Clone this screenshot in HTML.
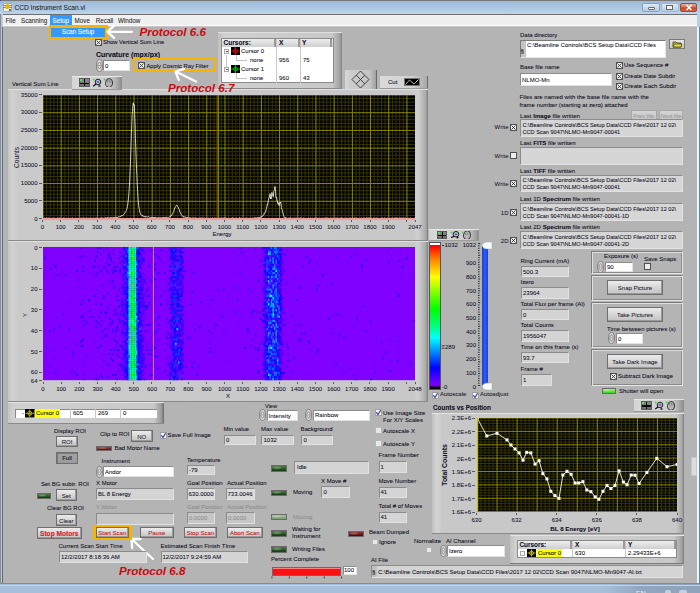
<!DOCTYPE html><html><head><meta charset="utf-8"><style>
html,body{margin:0;padding:0;width:700px;height:593px;overflow:hidden;background:#b4b4b4;}
body{position:relative;font-family:'Liberation Sans',sans-serif;}
body div, body svg{position:absolute;}
</style></head><body>
<div style="left:0px;top:0px;width:700px;height:593px;background:#b4b4b4;"></div><div style="left:0px;top:0px;width:700px;height:1px;background:#777;"></div><div style="left:0px;top:1px;width:700px;height:13px;background:linear-gradient(#9db8d8,#bcd4ec);"></div><div style="left:0px;top:14px;width:700px;height:1px;background:#6e6e6e;"></div><div style="left:3px;top:15px;width:694px;height:10px;background:#f0f0f0;"></div><div style="left:3px;top:25px;width:694px;height:1px;background:#ffffff;"></div><div style="left:3px;top:26px;width:694px;height:1px;background:#c6c6c6;"></div><div style="left:0px;top:14px;width:3px;height:579px;background:#b9cde2;"></div><div style="left:0px;top:14px;width:1px;height:579px;background:#8a8a8a;"></div><div style="left:2px;top:27px;width:1px;height:557px;background:#5f6a76;"></div><div style="left:697px;top:14px;width:3px;height:579px;background:#b9cde2;"></div><div style="left:697px;top:27px;width:1.6000000000000227px;height:557px;background:#f4f4f4;"></div><div style="left:698.6px;top:27px;width:1.3999999999999773px;height:557px;background:#3d8fd0;"></div><div style="left:0px;top:583px;width:700px;height:1px;background:#8a8a8a;"></div><div style="left:0px;top:584px;width:700px;height:9px;background:linear-gradient(90deg,#a7bfda 0px,#a7bfda 605px,#90a6c0 640px,#8ea3bc 700px);"></div><div style="left:0px;top:584.5px;width:700px;height:1.0px;background:#bed2ea;"></div><div style="left:3px;top:3px;width:8.5px;height:8.5px;background:#f4f4f0;border:0.5px solid #b0b0b0;box-sizing:border-box;"></div><div style="left:3px;top:5px;width:8.5px;height:1.2999999999999998px;background:#5a90c8;"></div><div style="left:3px;top:7px;width:8.5px;height:1.3000000000000007px;background:#5a90c8;"></div><div style="left:5px;top:4px;width:4.5px;height:5px;background:radial-gradient(#f0b800,#e0b020 60%,rgba(230,190,40,0.3));border-radius:40%;"></div><div style="left:8.5px;top:8.5px;width:2.0px;height:2.0px;background:#707070;"></div><div style="left:0px;top:0px;width:1.3px;height:1.3px;background:#1a4a9a;"></div><div style="left:14.5px;top:4.31px;font-size:6.6px;line-height:8.58px;color:#202020;white-space:nowrap;-webkit-text-stroke:0.06px #202020;">CCD Instrument Scan.vi</div><div style="left:642px;top:3px;width:18px;height:9px;background:linear-gradient(#dfe9f5,#b7cbe3);border:1px solid #8ba0ba;border-radius:2px;box-sizing:border-box;"></div><div style="left:647.5px;top:6.8px;width:7.5px;height:2.8px;background:#f4f4f4;border:1px solid #6a6a6a;border-radius:1px;box-sizing:border-box;"></div><div style="left:661px;top:3px;width:18px;height:9px;background:linear-gradient(#dfe9f5,#b7cbe3);border:1px solid #a8b8cc;border-radius:2px;box-sizing:border-box;"></div><div style="left:666px;top:5px;width:7px;height:5px;background:#f4f4f4;border:1px solid #666;box-sizing:border-box;"></div><div style="left:680px;top:3px;width:17px;height:9px;background:linear-gradient(#eab0a0,#d86a50 45%,#c84428 55%,#d8603c);border:1px solid #9a4a3a;border-radius:2px;box-sizing:border-box;"></div><svg style="left:685px;top:4px" width="8" height="7"><path d="M1.5 1L6.5 6M6.5 1L1.5 6" stroke="#fff" stroke-width="1.6"/></svg><div style="left:5.5px;top:17.21px;font-size:6.3px;line-height:8.19px;color:#1e1e1e;white-space:nowrap;-webkit-text-stroke:0.06px #1e1e1e;">File</div><div style="left:21px;top:17.21px;font-size:6.3px;line-height:8.19px;color:#1e1e1e;white-space:nowrap;-webkit-text-stroke:0.06px #1e1e1e;">Scanning</div><div style="left:74.5px;top:17.21px;font-size:6.3px;line-height:8.19px;color:#1e1e1e;white-space:nowrap;-webkit-text-stroke:0.06px #1e1e1e;">Move</div><div style="left:95.7px;top:17.21px;font-size:6.3px;line-height:8.19px;color:#1e1e1e;white-space:nowrap;-webkit-text-stroke:0.06px #1e1e1e;">Recall</div><div style="left:118px;top:17.21px;font-size:6.3px;line-height:8.19px;color:#1e1e1e;white-space:nowrap;-webkit-text-stroke:0.06px #1e1e1e;">Window</div><div style="left:49.5px;top:15px;width:22.5px;height:10px;background:#3399ff;"></div><div style="left:52.5px;top:17.21px;font-size:6.3px;line-height:8.19px;color:#ffffff;white-space:nowrap;-webkit-text-stroke:0.06px #ffffff;">Setup</div><div style="left:8px;top:89px;width:420px;height:152px;background:linear-gradient(90deg,#c4c4c4 0px,#d2d2d2 4px,#cacaca 10px,#c8c8c8 calc(100% - 14px),#d0d0d0 calc(100% - 10px),#a8a8a8 calc(100% - 2px),#7a7a7a);border-top:1px solid #e0e0e0;border-bottom:1px solid #8a8a8a;box-sizing:border-box;"></div><div style="left:8px;top:241px;width:420px;height:161px;background:linear-gradient(90deg,#c4c4c4 0px,#d2d2d2 4px,#cacaca 10px,#c8c8c8 calc(100% - 14px),#d0d0d0 calc(100% - 10px),#a8a8a8 calc(100% - 2px),#7a7a7a);border-top:1px solid #e0e0e0;border-bottom:1px solid #8a8a8a;box-sizing:border-box;"></div><svg style="left:42.5px;top:94.5px" width="372.50" height="124.00" viewBox="0 0 372.50 124.00"><rect width="372.50" height="124.00" fill="#000"/><path d="M3.64 0V124.00 M7.28 0V124.00 M10.92 0V124.00 M14.56 0V124.00 M21.84 0V124.00 M25.48 0V124.00 M29.12 0V124.00 M32.76 0V124.00 M40.03 0V124.00 M43.67 0V124.00 M47.31 0V124.00 M50.95 0V124.00 M58.23 0V124.00 M61.87 0V124.00 M65.51 0V124.00 M69.15 0V124.00 M76.43 0V124.00 M80.07 0V124.00 M83.71 0V124.00 M87.35 0V124.00 M94.63 0V124.00 M98.27 0V124.00 M101.91 0V124.00 M105.54 0V124.00 M112.82 0V124.00 M116.46 0V124.00 M120.10 0V124.00 M123.74 0V124.00 M131.02 0V124.00 M134.66 0V124.00 M138.30 0V124.00 M141.94 0V124.00 M149.22 0V124.00 M152.86 0V124.00 M156.50 0V124.00 M160.14 0V124.00 M167.42 0V124.00 M171.06 0V124.00 M174.69 0V124.00 M178.33 0V124.00 M185.61 0V124.00 M189.25 0V124.00 M192.89 0V124.00 M196.53 0V124.00 M203.81 0V124.00 M207.45 0V124.00 M211.09 0V124.00 M214.73 0V124.00 M222.01 0V124.00 M225.65 0V124.00 M229.29 0V124.00 M232.93 0V124.00 M240.21 0V124.00 M243.84 0V124.00 M247.48 0V124.00 M251.12 0V124.00 M258.40 0V124.00 M262.04 0V124.00 M265.68 0V124.00 M269.32 0V124.00 M276.60 0V124.00 M280.24 0V124.00 M283.88 0V124.00 M287.52 0V124.00 M294.80 0V124.00 M298.44 0V124.00 M302.08 0V124.00 M305.72 0V124.00 M312.99 0V124.00 M316.63 0V124.00 M320.27 0V124.00 M323.91 0V124.00 M331.19 0V124.00 M334.83 0V124.00 M338.47 0V124.00 M342.11 0V124.00 M349.39 0V124.00 M353.03 0V124.00 M356.67 0V124.00 M360.31 0V124.00 M0 3.54H372.50 M0 7.09H372.50 M0 10.63H372.50 M0 14.17H372.50 M0 21.26H372.50 M0 24.80H372.50 M0 28.34H372.50 M0 31.89H372.50 M0 38.97H372.50 M0 42.51H372.50 M0 46.06H372.50 M0 49.60H372.50 M0 56.69H372.50 M0 60.23H372.50 M0 63.77H372.50 M0 67.31H372.50 M0 74.40H372.50 M0 77.94H372.50 M0 81.49H372.50 M0 85.03H372.50 M0 92.11H372.50 M0 95.66H372.50 M0 99.20H372.50 M0 102.74H372.50 M0 109.83H372.50 M0 113.37H372.50 M0 116.91H372.50 M0 120.46H372.50" stroke="#363400" stroke-width="1" fill="none"/><path d="M0.00 0V124.00 M18.20 0V124.00 M36.39 0V124.00 M54.59 0V124.00 M72.79 0V124.00 M90.99 0V124.00 M109.18 0V124.00 M127.38 0V124.00 M145.58 0V124.00 M163.78 0V124.00 M181.97 0V124.00 M200.17 0V124.00 M218.37 0V124.00 M236.57 0V124.00 M254.76 0V124.00 M272.96 0V124.00 M291.16 0V124.00 M309.36 0V124.00 M327.55 0V124.00 M345.75 0V124.00 M363.95 0V124.00 M0 0.00H372.50 M0 17.71H372.50 M0 35.43H372.50 M0 53.14H372.50 M0 70.86H372.50 M0 88.57H372.50 M0 106.29H372.50 M0 124.00H372.50" stroke="#8c8a00" stroke-width="1" fill="none"/><polyline points="0.00,123.42 0.36,123.21 0.73,123.68 1.09,123.32 1.46,123.13 1.82,122.81 2.18,123.57 2.55,123.54 2.91,123.21 3.28,123.07 3.64,123.28 4.00,123.48 4.37,123.04 4.73,123.32 5.10,123.67 5.46,122.89 5.82,123.16 6.19,123.26 6.55,123.11 6.91,123.35 7.28,123.55 7.64,123.59 8.01,123.63 8.37,122.95 8.73,123.38 9.10,123.55 9.46,123.16 9.83,123.36 10.19,123.24 10.55,122.86 10.92,123.34 11.28,123.66 11.65,123.40 12.01,123.61 12.37,123.14 12.74,123.36 13.10,123.28 13.47,123.40 13.83,123.69 14.19,123.19 14.56,122.91 14.92,123.55 15.29,123.39 15.65,122.90 16.01,123.51 16.38,123.68 16.74,122.80 17.11,122.83 17.47,123.52 17.83,122.91 18.20,123.63 18.56,123.00 18.93,123.40 19.29,123.34 19.65,123.59 20.02,123.57 20.38,123.39 20.74,122.79 21.11,123.31 21.47,123.47 21.84,123.46 22.20,123.37 22.56,123.32 22.93,123.23 23.29,123.71 23.66,123.03 24.02,123.19 24.38,123.48 24.75,123.19 25.11,123.13 25.48,123.28 25.84,123.06 26.20,123.20 26.57,123.60 26.93,123.64 27.30,123.57 27.66,122.87 28.02,123.33 28.39,123.56 28.75,123.54 29.12,123.20 29.48,123.11 29.84,122.98 30.21,123.68 30.57,123.32 30.94,123.57 31.30,123.63 31.66,123.64 32.03,123.63 32.39,123.28 32.76,123.47 33.12,123.61 33.48,123.42 33.85,123.26 34.21,123.48 34.57,123.54 34.94,122.93 35.30,123.33 35.67,123.39 36.03,123.34 36.39,123.65 36.76,123.63 37.12,123.45 37.49,123.56 37.85,122.78 38.21,123.42 38.58,123.27 38.94,123.71 39.31,123.68 39.67,123.16 40.03,123.05 40.40,122.78 40.76,123.67 41.13,123.02 41.49,123.23 41.85,123.16 42.22,123.50 42.58,123.61 42.95,123.14 43.31,122.96 43.67,123.10 44.04,123.64 44.40,123.02 44.77,123.26 45.13,123.11 45.49,123.03 45.86,123.65 46.22,123.08 46.59,123.28 46.95,122.79 47.31,122.95 47.68,123.51 48.04,123.58 48.40,122.93 48.77,123.49 49.13,123.70 49.50,123.56 49.86,123.70 50.22,122.84 50.59,123.35 50.95,123.37 51.32,123.59 51.68,123.47 52.04,123.34 52.41,123.10 52.77,123.02 53.14,123.00 53.50,122.82 53.86,123.41 54.23,123.07 54.59,123.51 54.96,123.19 55.32,123.26 55.68,123.35 56.05,123.13 56.41,123.27 56.78,123.60 57.14,123.18 57.50,123.39 57.87,122.76 58.23,123.60 58.60,123.06 58.96,122.86 59.32,123.51 59.69,122.71 60.05,123.16 60.42,123.38 60.78,123.46 61.14,123.47 61.51,123.21 61.87,123.27 62.23,122.73 62.60,122.65 62.96,123.06 63.33,122.90 63.69,123.19 64.05,122.75 64.42,122.57 64.78,123.23 65.15,122.97 65.51,122.80 65.87,123.21 66.24,123.32 66.60,122.69 66.97,123.19 67.33,122.71 67.69,123.15 68.06,122.40 68.42,122.93 68.79,123.18 69.15,123.05 69.51,122.82 69.88,123.14 70.24,122.45 70.61,122.20 70.97,122.77 71.33,122.21 71.70,122.77 72.06,122.61 72.43,122.05 72.79,122.14 73.15,122.58 73.52,122.65 73.88,122.71 74.25,121.91 74.61,122.57 74.97,122.36 75.34,121.85 75.70,121.66 76.06,121.68 76.43,122.12 76.79,121.80 77.16,121.30 77.52,121.41 77.88,121.72 78.25,120.67 78.61,120.53 78.98,120.26 79.34,120.75 79.70,120.46 80.07,120.40 80.43,119.76 80.80,119.65 81.16,118.71 81.52,118.47 81.89,118.20 82.25,117.23 82.62,116.62 82.98,116.21 83.34,115.48 83.71,114.22 84.07,113.35 84.44,111.38 84.80,109.08 85.16,106.17 85.53,102.64 85.89,98.84 86.26,92.83 86.62,86.84 86.98,78.80 87.35,70.45 87.71,60.77 88.08,49.94 88.44,38.25 88.80,29.53 89.17,19.05 89.53,16.40 89.89,10.63 90.26,7.92 90.62,10.02 90.99,9.53 91.35,9.81 91.71,19.75 92.08,28.53 92.44,43.78 92.81,52.68 93.17,64.42 93.53,73.66 93.90,80.39 94.26,90.51 94.63,96.11 94.99,102.40 95.35,106.90 95.72,110.68 96.08,113.29 96.45,114.97 96.81,117.12 97.17,117.70 97.54,119.14 97.90,119.79 98.27,120.05 98.63,119.94 98.99,120.62 99.36,120.30 99.72,121.28 100.09,120.81 100.45,121.34 100.81,121.30 101.18,121.83 101.54,121.71 101.91,121.25 102.27,122.02 102.63,122.14 103.00,121.55 103.36,122.04 103.72,121.70 104.09,121.86 104.45,122.20 104.82,121.68 105.18,121.84 105.54,121.71 105.91,121.99 106.27,122.19 106.64,122.29 107.00,122.50 107.36,122.60 107.73,122.49 108.09,122.17 108.46,122.79 108.82,122.10 109.18,122.09 109.55,122.84 109.91,122.40 110.28,122.93 110.64,122.75 111.00,122.81 111.37,122.19 111.73,123.08 112.10,122.83 112.46,122.38 112.82,123.17 113.19,123.19 113.55,123.04 113.92,123.01 114.28,122.59 114.64,123.19 115.01,122.70 115.37,122.48 115.74,123.11 116.10,122.95 116.46,122.81 116.83,122.98 117.19,122.70 117.55,122.59 117.92,122.49 118.28,122.66 118.65,123.08 119.01,122.97 119.37,123.18 119.74,122.34 120.10,123.07 120.47,122.85 120.83,122.55 121.19,123.03 121.56,122.28 121.92,122.71 122.29,122.35 122.65,122.44 123.01,122.91 123.38,122.38 123.74,122.32 124.11,122.71 124.47,122.37 124.83,122.62 125.20,122.61 125.56,122.16 125.93,122.16 126.29,122.05 126.65,122.00 127.02,122.14 127.38,121.62 127.75,120.81 128.11,121.02 128.47,120.27 128.84,120.34 129.20,119.28 129.57,118.87 129.93,117.87 130.29,117.34 130.66,116.62 131.02,115.57 131.38,113.99 131.75,113.06 132.11,112.39 132.48,111.92 132.84,111.70 133.20,110.33 133.57,110.38 133.93,110.30 134.30,110.69 134.66,111.41 135.02,112.08 135.39,112.57 135.75,114.01 136.12,114.38 136.48,115.00 136.84,116.77 137.21,117.49 137.57,117.77 137.94,119.07 138.30,119.55 138.66,120.22 139.03,120.31 139.39,120.94 139.76,121.44 140.12,121.39 140.48,121.40 140.85,122.36 141.21,121.87 141.58,122.02 141.94,122.06 142.30,122.08 142.67,122.12 143.03,122.14 143.40,122.67 143.76,122.40 144.12,123.02 144.49,122.25 144.85,122.59 145.21,122.82 145.58,123.08 145.94,123.14 146.31,123.19 146.67,122.64 147.03,122.72 147.40,122.80 147.76,123.20 148.13,123.45 148.49,123.18 148.85,123.04 149.22,123.10 149.58,123.20 149.95,123.19 150.31,123.03 150.67,122.93 151.04,122.70 151.40,123.21 151.77,123.07 152.13,123.63 152.49,122.87 152.86,122.90 153.22,122.85 153.59,123.34 153.95,123.49 154.31,123.12 154.68,123.45 155.04,123.61 155.41,123.15 155.77,123.25 156.13,123.53 156.50,123.33 156.86,122.76 157.23,122.97 157.59,123.20 157.95,122.90 158.32,122.97 158.68,122.96 159.04,123.53 159.41,123.17 159.77,122.86 160.14,123.60 160.50,123.11 160.86,123.28 161.23,123.51 161.59,122.88 161.96,122.96 162.32,123.65 162.68,123.07 163.05,123.62 163.41,123.27 163.78,123.09 164.14,123.67 164.50,122.90 164.87,123.62 165.23,123.29 165.60,123.14 165.96,123.03 166.32,123.47 166.69,122.93 167.05,123.40 167.42,123.66 167.78,123.27 168.14,123.36 168.51,123.63 168.87,123.05 169.24,122.97 169.60,122.93 169.96,122.87 170.33,123.55 170.69,123.64 171.06,123.45 171.42,122.97 171.78,123.04 172.15,122.94 172.51,123.25 172.87,122.88 173.24,123.37 173.60,123.71 173.97,123.59 174.33,123.41 174.69,123.65 175.06,123.24 175.42,122.82 175.79,123.48 176.15,123.05 176.51,123.18 176.88,122.91 177.24,123.26 177.61,123.32 177.97,123.58 178.33,122.94 178.70,122.91 179.06,122.99 179.43,123.29 179.79,122.95 180.15,122.82 180.52,123.13 180.88,123.31 181.25,122.80 181.61,122.97 181.97,123.12 182.34,123.21 182.70,123.23 183.07,123.42 183.43,122.82 183.79,123.22 184.16,123.44 184.52,123.63 184.89,123.17 185.25,123.28 185.61,123.42 185.98,123.36 186.34,122.91 186.70,123.44 187.07,123.56 187.43,123.65 187.80,123.61 188.16,123.56 188.52,123.13 188.89,123.02 189.25,122.99 189.62,122.89 189.98,123.25 190.34,122.98 190.71,123.29 191.07,123.35 191.44,122.98 191.80,123.54 192.16,123.17 192.53,122.93 192.89,123.32 193.26,123.18 193.62,123.21 193.98,123.07 194.35,123.38 194.71,123.62 195.08,123.17 195.44,123.30 195.80,123.22 196.17,122.81 196.53,122.86 196.90,122.89 197.26,123.24 197.62,123.11 197.99,123.11 198.35,123.43 198.72,122.93 199.08,123.24 199.44,123.22 199.81,123.60 200.17,123.61 200.53,123.15 200.90,123.00 201.26,123.55 201.63,123.17 201.99,123.66 202.35,123.31 202.72,122.82 203.08,122.93 203.45,123.25 203.81,123.03 204.17,123.27 204.54,123.38 204.90,123.19 205.27,123.33 205.63,123.39 205.99,123.49 206.36,123.57 206.72,122.92 207.09,122.95 207.45,123.35 207.81,123.25 208.18,123.05 208.54,123.37 208.91,122.89 209.27,123.46 209.63,123.17 210.00,123.49 210.36,123.53 210.73,123.34 211.09,123.47 211.45,122.68 211.82,123.42 212.18,122.88 212.55,122.82 212.91,122.87 213.27,122.79 213.64,123.27 214.00,123.34 214.36,122.56 214.73,122.95 215.09,122.56 215.46,122.53 215.82,123.16 216.18,122.51 216.55,122.54 216.91,122.23 217.28,122.20 217.64,122.62 218.00,121.49 218.37,121.54 218.73,120.97 219.10,121.62 219.46,120.95 219.82,120.87 220.19,120.02 220.55,120.13 220.92,119.27 221.28,118.00 221.64,118.34 222.01,117.86 222.37,116.77 222.74,116.71 223.10,114.70 223.46,113.52 223.83,112.01 224.19,109.61 224.56,109.94 224.92,107.39 225.28,105.44 225.65,104.20 226.01,102.56 226.38,102.32 226.74,100.03 227.10,98.70 227.47,103.70 227.83,102.48 228.19,103.88 228.56,99.87 228.92,97.47 229.29,99.91 229.65,99.44 230.01,101.49 230.38,101.73 230.74,96.77 231.11,95.64 231.47,94.82 231.83,91.51 232.20,92.18 232.56,96.22 232.93,102.52 233.29,102.48 233.65,102.34 234.02,106.04 234.38,105.93 234.75,108.87 235.11,108.78 235.47,108.69 235.84,107.69 236.20,110.72 236.57,107.81 236.93,108.38 237.29,108.18 237.66,107.07 238.02,108.66 238.39,112.53 238.75,114.24 239.11,114.88 239.48,116.28 239.84,117.94 240.21,118.90 240.57,120.64 240.93,121.57 241.30,122.39 241.66,122.25 242.02,122.73 242.39,122.46 242.75,122.71 243.12,122.64 243.48,123.51 243.84,123.16 244.21,123.28 244.57,123.71 244.94,123.29 245.30,123.08 245.66,123.46 246.03,122.77 246.39,122.89 246.76,123.36 247.12,122.82 247.48,123.02 247.85,123.20 248.21,123.41 248.58,123.49 248.94,123.71 249.30,123.19 249.67,123.43 250.03,122.83 250.40,123.63 250.76,123.37 251.12,123.65 251.49,123.47 251.85,123.06 252.22,123.16 252.58,123.04 252.94,122.97 253.31,123.53 253.67,122.84 254.04,123.11 254.40,123.66 254.76,123.40 255.13,123.28 255.49,122.78 255.85,123.41 256.22,123.00 256.58,123.20 256.95,123.16 257.31,123.05 257.67,123.00 258.04,123.23 258.40,123.27 258.77,122.80 259.13,123.69 259.49,123.20 259.86,123.57 260.22,123.56 260.59,122.80 260.95,122.95 261.31,123.61 261.68,123.33 262.04,123.33 262.41,123.50 262.77,123.49 263.13,123.43 263.50,123.57 263.86,123.01 264.23,123.25 264.59,123.14 264.95,123.51 265.32,122.89 265.68,123.42 266.05,123.70 266.41,123.63 266.77,123.39 267.14,122.78 267.50,123.07 267.87,123.30 268.23,123.42 268.59,123.58 268.96,123.58 269.32,123.38 269.68,123.51 270.05,123.46 270.41,123.67 270.78,123.37 271.14,123.19 271.50,122.90 271.87,123.32 272.23,123.34 272.60,123.14 272.96,123.37 273.32,122.94 273.69,123.06 274.05,123.41 274.42,122.89 274.78,123.49 275.14,123.04 275.51,123.08 275.87,123.50 276.24,123.27 276.60,123.50 276.96,123.23 277.33,123.55 277.69,122.95 278.06,123.36 278.42,123.57 278.78,122.97 279.15,123.34 279.51,123.27 279.88,123.08 280.24,123.37 280.60,123.53 280.97,123.05 281.33,122.92 281.70,123.52 282.06,123.37 282.42,123.04 282.79,122.95 283.15,122.84 283.51,123.37 283.88,123.00 284.24,122.86 284.61,123.28 284.97,123.27 285.33,123.23 285.70,123.33 286.06,123.00 286.43,123.64 286.79,123.00 287.15,123.04 287.52,123.31 287.88,122.89 288.25,123.71 288.61,123.42 288.97,123.24 289.34,122.91 289.70,123.52 290.07,123.28 290.43,122.96 290.79,123.66 291.16,123.17 291.52,123.44 291.89,123.28 292.25,123.66 292.61,122.92 292.98,122.85 293.34,123.09 293.71,122.94 294.07,123.61 294.43,123.31 294.80,123.06 295.16,123.68 295.53,123.18 295.89,122.87 296.25,122.98 296.62,123.36 296.98,123.63 297.34,123.09 297.71,122.85 298.07,123.44 298.44,122.83 298.80,123.16 299.16,123.46 299.53,122.83 299.89,123.40 300.26,123.40 300.62,123.55 300.98,123.18 301.35,123.15 301.71,123.62 302.08,123.39 302.44,123.55 302.80,122.91 303.17,122.89 303.53,123.60 303.90,123.24 304.26,123.52 304.62,123.23 304.99,123.25 305.35,123.50 305.72,123.69 306.08,122.89 306.44,123.17 306.81,123.49 307.17,123.14 307.54,122.97 307.90,122.85 308.26,123.49 308.63,123.40 308.99,123.40 309.36,123.25 309.72,123.00 310.08,122.91 310.45,123.38 310.81,123.00 311.17,122.85 311.54,123.15 311.90,122.90 312.27,122.81 312.63,123.48 312.99,123.27 313.36,123.06 313.72,122.96 314.09,123.32 314.45,123.39 314.81,123.71 315.18,122.95 315.54,123.39 315.91,123.14 316.27,123.05 316.63,123.59 317.00,123.54 317.36,123.50 317.73,123.34 318.09,122.80 318.45,123.21 318.82,123.29 319.18,123.62 319.55,123.36 319.91,123.64 320.27,123.38 320.64,123.22 321.00,123.36 321.37,123.06 321.73,122.89 322.09,123.40 322.46,123.58 322.82,123.35 323.19,123.00 323.55,122.79 323.91,123.35 324.28,123.45 324.64,122.97 325.00,122.90 325.37,123.42 325.73,122.81 326.10,122.83 326.46,123.61 326.82,122.79 327.19,123.28 327.55,123.42 327.92,123.19 328.28,123.38 328.64,123.13 329.01,122.92 329.37,123.46 329.74,123.00 330.10,123.60 330.46,123.12 330.83,122.84 331.19,122.94 331.56,123.20 331.92,123.59 332.28,123.24 332.65,123.33 333.01,122.97 333.38,122.99 333.74,123.00 334.10,123.59 334.47,123.45 334.83,123.46 335.20,123.08 335.56,123.06 335.92,123.71 336.29,123.65 336.65,123.68 337.02,123.12 337.38,123.50 337.74,122.94 338.11,123.69 338.47,123.12 338.83,123.22 339.20,122.79 339.56,122.80 339.93,123.29 340.29,123.40 340.65,123.53 341.02,123.53 341.38,123.18 341.75,122.82 342.11,123.65 342.47,123.04 342.84,123.56 343.20,123.67 343.57,122.97 343.93,123.56 344.29,122.85 344.66,123.59 345.02,123.51 345.39,123.05 345.75,123.02 346.11,123.59 346.48,123.35 346.84,123.28 347.21,123.64 347.57,123.26 347.93,122.86 348.30,123.59 348.66,123.13 349.03,123.04 349.39,123.08 349.75,123.05 350.12,123.14 350.48,123.49 350.85,123.13 351.21,122.82 351.57,123.48 351.94,122.85 352.30,123.57 352.66,122.79 353.03,123.56 353.39,122.87 353.76,123.19 354.12,123.17 354.48,123.21 354.85,123.00 355.21,123.29 355.58,123.31 355.94,123.37 356.30,122.92 356.67,122.98 357.03,123.00 357.40,123.06 357.76,123.32 358.12,123.01 358.49,123.03 358.85,123.30 359.22,123.30 359.58,123.39 359.94,122.78 360.31,122.94 360.67,123.48 361.04,122.87 361.40,122.99 361.76,123.61 362.13,123.38 362.49,123.20 362.86,123.32 363.22,123.62 363.58,123.69 363.95,123.54 364.31,123.02 364.68,123.69 365.04,122.80 365.40,123.16 365.77,123.65 366.13,123.60 366.49,123.46 366.86,123.43 367.22,123.03 367.59,122.94 367.95,122.92 368.31,123.71 368.68,123.10 369.04,123.58 369.41,123.11 369.77,123.69 370.13,123.37 370.50,123.48 370.86,123.48 371.23,123.00 371.59,123.35 371.95,122.89 372.32,123.50" fill="none" stroke="#f0f0f0" stroke-width="0.85" stroke-linejoin="bevel" shape-rendering="auto"/><line x1="173.97" y1="0" x2="173.97" y2="124.0" stroke="#a83800" stroke-width="0.9"/><line x1="175.29" y1="0" x2="175.29" y2="124.0" stroke="#70b000" stroke-width="1"/></svg><div style="left:42.5px;top:217.9px;width:372.5px;height:1.799999999999983px;background:#f49a9a;"></div><div style="right:662.5px;top:215.60px;font-size:6px;line-height:7.80px;color:#10102a;white-space:nowrap;-webkit-text-stroke:0.06px #10102a;">0</div><div style="left:38.5px;top:218.0px;width:3.0px;height:1.0px;background:#5a5a5a;"></div><div style="right:662.5px;top:197.89px;font-size:6px;line-height:7.80px;color:#10102a;white-space:nowrap;-webkit-text-stroke:0.06px #10102a;">5000</div><div style="left:38.5px;top:200.28571428571428px;width:3.0px;height:1.0px;background:#5a5a5a;"></div><div style="right:662.5px;top:180.17px;font-size:6px;line-height:7.80px;color:#10102a;white-space:nowrap;-webkit-text-stroke:0.06px #10102a;">10000</div><div style="left:38.5px;top:182.57142857142856px;width:3.0px;height:1.0px;background:#5a5a5a;"></div><div style="right:662.5px;top:162.46px;font-size:6px;line-height:7.80px;color:#10102a;white-space:nowrap;-webkit-text-stroke:0.06px #10102a;">15000</div><div style="left:38.5px;top:164.85714285714286px;width:3.0px;height:1.0px;background:#5a5a5a;"></div><div style="right:662.5px;top:144.74px;font-size:6px;line-height:7.80px;color:#10102a;white-space:nowrap;-webkit-text-stroke:0.06px #10102a;">20000</div><div style="left:38.5px;top:147.14285714285714px;width:3.0px;height:1.0px;background:#5a5a5a;"></div><div style="right:662.5px;top:127.03px;font-size:6px;line-height:7.80px;color:#10102a;white-space:nowrap;-webkit-text-stroke:0.06px #10102a;">25000</div><div style="left:38.5px;top:129.42857142857144px;width:3.0px;height:1.0px;background:#5a5a5a;"></div><div style="right:662.5px;top:109.31px;font-size:6px;line-height:7.80px;color:#10102a;white-space:nowrap;-webkit-text-stroke:0.06px #10102a;">30000</div><div style="left:38.5px;top:111.71428571428571px;width:3.0px;height:1.0px;background:#5a5a5a;"></div><div style="right:662.5px;top:91.60px;font-size:6px;line-height:7.80px;color:#10102a;white-space:nowrap;-webkit-text-stroke:0.06px #10102a;">35000</div><div style="left:38.5px;top:94.0px;width:3.0px;height:1.0px;background:#5a5a5a;"></div><div style="left:-157.5px;width:400px;text-align:center;top:223.90px;font-size:6px;line-height:7.80px;color:#10102a;white-space:nowrap;-webkit-text-stroke:0.06px #10102a;">0</div><div style="left:42.0px;top:219.5px;width:1.0px;height:2.0px;background:#5a5a5a;"></div><div style="left:-139.3026380068393px;width:400px;text-align:center;top:223.90px;font-size:6px;line-height:7.80px;color:#10102a;white-space:nowrap;-webkit-text-stroke:0.06px #10102a;">100</div><div style="left:60.197361993160726px;top:219.5px;width:1.0px;height:2.0px;background:#5a5a5a;"></div><div style="left:-121.10527601367855px;width:400px;text-align:center;top:223.90px;font-size:6px;line-height:7.80px;color:#10102a;white-space:nowrap;-webkit-text-stroke:0.06px #10102a;">200</div><div style="left:78.39472398632145px;top:219.5px;width:1.0px;height:2.0px;background:#5a5a5a;"></div><div style="left:-102.90791402051784px;width:400px;text-align:center;top:223.90px;font-size:6px;line-height:7.80px;color:#10102a;white-space:nowrap;-webkit-text-stroke:0.06px #10102a;">300</div><div style="left:96.59208597948216px;top:219.5px;width:1.0px;height:2.0px;background:#5a5a5a;"></div><div style="left:-84.71055202735711px;width:400px;text-align:center;top:223.90px;font-size:6px;line-height:7.80px;color:#10102a;white-space:nowrap;-webkit-text-stroke:0.06px #10102a;">400</div><div style="left:114.78944797264289px;top:219.5px;width:1.0px;height:2.0px;background:#5a5a5a;"></div><div style="left:-66.51319003419638px;width:400px;text-align:center;top:223.90px;font-size:6px;line-height:7.80px;color:#10102a;white-space:nowrap;-webkit-text-stroke:0.06px #10102a;">500</div><div style="left:132.98680996580362px;top:219.5px;width:1.0px;height:2.0px;background:#5a5a5a;"></div><div style="left:-48.31582804103567px;width:400px;text-align:center;top:223.90px;font-size:6px;line-height:7.80px;color:#10102a;white-space:nowrap;-webkit-text-stroke:0.06px #10102a;">600</div><div style="left:151.18417195896433px;top:219.5px;width:1.0px;height:2.0px;background:#5a5a5a;"></div><div style="left:-30.118466047874932px;width:400px;text-align:center;top:223.90px;font-size:6px;line-height:7.80px;color:#10102a;white-space:nowrap;-webkit-text-stroke:0.06px #10102a;">700</div><div style="left:169.38153395212507px;top:219.5px;width:1.0px;height:2.0px;background:#5a5a5a;"></div><div style="left:-11.92110405471422px;width:400px;text-align:center;top:223.90px;font-size:6px;line-height:7.80px;color:#10102a;white-space:nowrap;-webkit-text-stroke:0.06px #10102a;">800</div><div style="left:187.57889594528578px;top:219.5px;width:1.0px;height:2.0px;background:#5a5a5a;"></div><div style="left:6.27625793844652px;width:400px;text-align:center;top:223.90px;font-size:6px;line-height:7.80px;color:#10102a;white-space:nowrap;-webkit-text-stroke:0.06px #10102a;">900</div><div style="left:205.77625793844652px;top:219.5px;width:1.0px;height:2.0px;background:#5a5a5a;"></div><div style="left:24.47361993160723px;width:400px;text-align:center;top:223.90px;font-size:6px;line-height:7.80px;color:#10102a;white-space:nowrap;-webkit-text-stroke:0.06px #10102a;">1000</div><div style="left:223.97361993160723px;top:219.5px;width:1.0px;height:2.0px;background:#5a5a5a;"></div><div style="left:42.67098192476797px;width:400px;text-align:center;top:223.90px;font-size:6px;line-height:7.80px;color:#10102a;white-space:nowrap;-webkit-text-stroke:0.06px #10102a;">1100</div><div style="left:242.17098192476797px;top:219.5px;width:1.0px;height:2.0px;background:#5a5a5a;"></div><div style="left:60.868343917928655px;width:400px;text-align:center;top:223.90px;font-size:6px;line-height:7.80px;color:#10102a;white-space:nowrap;-webkit-text-stroke:0.06px #10102a;">1200</div><div style="left:260.36834391792866px;top:219.5px;width:1.0px;height:2.0px;background:#5a5a5a;"></div><div style="left:79.06570591108942px;width:400px;text-align:center;top:223.90px;font-size:6px;line-height:7.80px;color:#10102a;white-space:nowrap;-webkit-text-stroke:0.06px #10102a;">1300</div><div style="left:278.5657059110894px;top:219.5px;width:1.0px;height:2.0px;background:#5a5a5a;"></div><div style="left:97.26306790425014px;width:400px;text-align:center;top:223.90px;font-size:6px;line-height:7.80px;color:#10102a;white-space:nowrap;-webkit-text-stroke:0.06px #10102a;">1400</div><div style="left:296.76306790425014px;top:219.5px;width:1.0px;height:2.0px;background:#5a5a5a;"></div><div style="left:115.46042989741085px;width:400px;text-align:center;top:223.90px;font-size:6px;line-height:7.80px;color:#10102a;white-space:nowrap;-webkit-text-stroke:0.06px #10102a;">1500</div><div style="left:314.96042989741085px;top:219.5px;width:1.0px;height:2.0px;background:#5a5a5a;"></div><div style="left:133.65779189057156px;width:400px;text-align:center;top:223.90px;font-size:6px;line-height:7.80px;color:#10102a;white-space:nowrap;-webkit-text-stroke:0.06px #10102a;">1600</div><div style="left:333.15779189057156px;top:219.5px;width:1.0px;height:2.0px;background:#5a5a5a;"></div><div style="left:151.85515388373233px;width:400px;text-align:center;top:223.90px;font-size:6px;line-height:7.80px;color:#10102a;white-space:nowrap;-webkit-text-stroke:0.06px #10102a;">1700</div><div style="left:351.3551538837323px;top:219.5px;width:1.0px;height:2.0px;background:#5a5a5a;"></div><div style="left:170.05251587689304px;width:400px;text-align:center;top:223.90px;font-size:6px;line-height:7.80px;color:#10102a;white-space:nowrap;-webkit-text-stroke:0.06px #10102a;">1800</div><div style="left:369.55251587689304px;top:219.5px;width:1.0px;height:2.0px;background:#5a5a5a;"></div><div style="left:188.24987787005375px;width:400px;text-align:center;top:223.90px;font-size:6px;line-height:7.80px;color:#10102a;white-space:nowrap;-webkit-text-stroke:0.06px #10102a;">1900</div><div style="left:387.74987787005375px;top:219.5px;width:1.0px;height:2.0px;background:#5a5a5a;"></div><div style="left:405.94723986321446px;top:219.5px;width:1.0px;height:2.0px;background:#5a5a5a;"></div><div style="left:215px;width:400px;text-align:center;top:223.90px;font-size:6px;line-height:7.80px;color:#10102a;white-space:nowrap;-webkit-text-stroke:0.06px #10102a;">2047</div><div style="left:414.5px;top:219.5px;width:1.0px;height:2.0px;background:#5a5a5a;"></div><div style="left:22px;width:400px;text-align:center;top:230.60px;font-size:6px;line-height:7.80px;color:#10102a;white-space:nowrap;-webkit-text-stroke:0.06px #10102a;">Energy</div><div style="left:-1.5px;top:153.0px;width:34px;height:9px;font-size:6.6px;line-height:9px;text-align:center;color:#10102a;transform:rotate(-90deg);">Counts</div><svg style="left:43px;top:247.4px;filter:blur(0.35px)" width="372" height="133.20" viewBox="0 0 248 64" preserveAspectRatio="none"><rect width="248" height="64" fill="#7f00ff"/><rect x="1" y="5" width="1.02" height="1.02" fill="#2300ff"/><rect x="2" y="48" width="1.02" height="1.02" fill="#4a00ff"/><rect x="4" y="40" width="1.02" height="1.02" fill="#1c00ff"/><rect x="4" y="57" width="1.02" height="1.02" fill="#3e00ff"/><rect x="5" y="10" width="1.02" height="1.02" fill="#1b00ff"/><rect x="5" y="49" width="1.02" height="1.02" fill="#4700ff"/><rect x="7" y="8" width="1.02" height="1.02" fill="#4900ff"/><rect x="7" y="39" width="1.02" height="1.02" fill="#2300ff"/><rect x="7" y="53" width="1.02" height="1.02" fill="#4800ff"/><rect x="8" y="9" width="1.02" height="1.02" fill="#1300ff"/><rect x="8" y="13" width="1.02" height="1.02" fill="#4900ff"/><rect x="8" y="60" width="1.02" height="1.02" fill="#2e00ff"/><rect x="10" y="13" width="1.02" height="1.02" fill="#3800ff"/><rect x="11" y="1" width="1.02" height="1.02" fill="#4800ff"/><rect x="11" y="38" width="1.02" height="1.02" fill="#2d00ff"/><rect x="13" y="32" width="1.02" height="1.02" fill="#3400ff"/><rect x="15" y="13" width="1.02" height="1.02" fill="#2200ff"/><rect x="15" y="48" width="1.02" height="1.02" fill="#3b00ff"/><rect x="17" y="26" width="1.02" height="1.02" fill="#5300ff"/><rect x="17" y="39" width="1.02" height="1.02" fill="#2c00ff"/><rect x="19" y="50" width="1.02" height="1.02" fill="#3b00ff"/><rect x="19" y="59" width="1.02" height="1.02" fill="#3900ff"/><rect x="20" y="51" width="1.02" height="1.02" fill="#3a00ff"/><rect x="21" y="60" width="1.02" height="1.02" fill="#5200ff"/><rect x="22" y="4" width="1.02" height="1.02" fill="#5900ff"/><rect x="22" y="11" width="1.02" height="1.02" fill="#1800ff"/><rect x="22" y="40" width="1.02" height="1.02" fill="#4c00ff"/><rect x="22" y="46" width="1.02" height="1.02" fill="#4a00ff"/><rect x="22" y="61" width="1.02" height="1.02" fill="#1a00ff"/><rect x="24" y="5" width="1.02" height="1.02" fill="#5a00ff"/><rect x="24" y="15" width="1.02" height="1.02" fill="#4a00ff"/><rect x="24" y="19" width="1.02" height="1.02" fill="#3300ff"/><rect x="25" y="0" width="1.02" height="1.02" fill="#5200ff"/><rect x="25" y="4" width="1.02" height="1.02" fill="#4200ff"/><rect x="25" y="27" width="1.02" height="1.02" fill="#1800ff"/><rect x="25" y="33" width="1.02" height="1.02" fill="#2100ff"/><rect x="25" y="45" width="1.02" height="1.02" fill="#1c00ff"/><rect x="25" y="47" width="1.02" height="1.02" fill="#4c00ff"/><rect x="26" y="9" width="1.02" height="1.02" fill="#2f00ff"/><rect x="26" y="11" width="1.02" height="1.02" fill="#3100ff"/><rect x="26" y="25" width="1.02" height="1.02" fill="#4600ff"/><rect x="26" y="33" width="1.02" height="1.02" fill="#2600ff"/><rect x="26" y="44" width="1.02" height="1.02" fill="#1400ff"/><rect x="26" y="47" width="1.02" height="1.02" fill="#1d00ff"/><rect x="27" y="4" width="1.02" height="1.02" fill="#3a00ff"/><rect x="27" y="35" width="1.02" height="1.02" fill="#3500ff"/><rect x="27" y="37" width="1.02" height="1.02" fill="#2a00ff"/><rect x="27" y="55" width="1.02" height="1.02" fill="#5000ff"/><rect x="27" y="61" width="1.02" height="1.02" fill="#3a00ff"/><rect x="27" y="63" width="1.02" height="1.02" fill="#4a00ff"/><rect x="29" y="36" width="1.02" height="1.02" fill="#4400ff"/><rect x="29" y="52" width="1.02" height="1.02" fill="#4600ff"/><rect x="30" y="25" width="1.02" height="1.02" fill="#1400ff"/><rect x="31" y="30" width="1.02" height="1.02" fill="#3600ff"/><rect x="31" y="33" width="1.02" height="1.02" fill="#3400ff"/><rect x="32" y="12" width="1.02" height="1.02" fill="#5700ff"/><rect x="33" y="9" width="1.02" height="1.02" fill="#3000ff"/><rect x="33" y="33" width="1.02" height="1.02" fill="#3d00ff"/><rect x="33" y="50" width="1.02" height="1.02" fill="#5800ff"/><rect x="34" y="6" width="1.02" height="1.02" fill="#1a00ff"/><rect x="34" y="9" width="1.02" height="1.02" fill="#2800ff"/><rect x="34" y="23" width="1.02" height="1.02" fill="#3000ff"/><rect x="34" y="45" width="1.02" height="1.02" fill="#5000ff"/><rect x="35" y="4" width="1.02" height="1.02" fill="#2000ff"/><rect x="35" y="13" width="1.02" height="1.02" fill="#1f00ff"/><rect x="35" y="27" width="1.02" height="1.02" fill="#4400ff"/><rect x="35" y="35" width="1.02" height="1.02" fill="#2400ff"/><rect x="35" y="38" width="1.02" height="1.02" fill="#2a00ff"/><rect x="35" y="63" width="1.02" height="1.02" fill="#3600ff"/><rect x="36" y="0" width="1.02" height="1.02" fill="#1c00ff"/><rect x="36" y="2" width="1.02" height="1.02" fill="#2600ff"/><rect x="36" y="12" width="1.02" height="1.02" fill="#3300ff"/><rect x="36" y="20" width="1.02" height="1.02" fill="#4100ff"/><rect x="36" y="36" width="1.02" height="1.02" fill="#4300ff"/><rect x="36" y="41" width="1.02" height="1.02" fill="#5900ff"/><rect x="36" y="48" width="1.02" height="1.02" fill="#1700ff"/><rect x="36" y="63" width="1.02" height="1.02" fill="#4100ff"/><rect x="37" y="9" width="1.02" height="1.02" fill="#3e00ff"/><rect x="37" y="33" width="1.02" height="1.02" fill="#4200ff"/><rect x="38" y="0" width="1.02" height="1.02" fill="#3e00ff"/><rect x="38" y="3" width="1.02" height="1.02" fill="#3400ff"/><rect x="38" y="11" width="1.02" height="1.02" fill="#1500ff"/><rect x="38" y="27" width="1.02" height="1.02" fill="#2700ff"/><rect x="38" y="31" width="1.02" height="1.02" fill="#2d00ff"/><rect x="38" y="37" width="1.02" height="1.02" fill="#3500ff"/><rect x="38" y="47" width="1.02" height="1.02" fill="#1900ff"/><rect x="38" y="61" width="1.02" height="1.02" fill="#3e00ff"/><rect x="39" y="18" width="1.02" height="1.02" fill="#4800ff"/><rect x="39" y="27" width="1.02" height="1.02" fill="#4900ff"/><rect x="39" y="35" width="1.02" height="1.02" fill="#2500ff"/><rect x="39" y="40" width="1.02" height="1.02" fill="#3300ff"/><rect x="39" y="43" width="1.02" height="1.02" fill="#3500ff"/><rect x="39" y="62" width="1.02" height="1.02" fill="#1f00ff"/><rect x="40" y="1" width="1.02" height="1.02" fill="#3b00ff"/><rect x="40" y="10" width="1.02" height="1.02" fill="#3f00ff"/><rect x="40" y="23" width="1.02" height="1.02" fill="#3100ff"/><rect x="40" y="24" width="1.02" height="1.02" fill="#1a00ff"/><rect x="40" y="51" width="1.02" height="1.02" fill="#4300ff"/><rect x="40" y="54" width="1.02" height="1.02" fill="#4200ff"/><rect x="41" y="9" width="1.02" height="1.02" fill="#2200ff"/><rect x="41" y="31" width="1.02" height="1.02" fill="#3400ff"/><rect x="41" y="39" width="1.02" height="1.02" fill="#2400ff"/><rect x="41" y="42" width="1.02" height="1.02" fill="#2a00ff"/><rect x="41" y="51" width="1.02" height="1.02" fill="#5800ff"/><rect x="42" y="0" width="1.02" height="1.02" fill="#4500ff"/><rect x="42" y="7" width="1.02" height="1.02" fill="#3c00ff"/><rect x="42" y="11" width="1.02" height="1.02" fill="#1900ff"/><rect x="42" y="31" width="1.02" height="1.02" fill="#3200ff"/><rect x="42" y="42" width="1.02" height="1.02" fill="#2f00ff"/><rect x="43" y="3" width="1.02" height="1.02" fill="#1800ff"/><rect x="43" y="5" width="1.02" height="1.02" fill="#2f00ff"/><rect x="43" y="8" width="1.02" height="1.02" fill="#3900ff"/><rect x="43" y="12" width="1.02" height="1.02" fill="#4b00ff"/><rect x="43" y="22" width="1.02" height="1.02" fill="#1a00ff"/><rect x="43" y="29" width="1.02" height="1.02" fill="#3000ff"/><rect x="43" y="39" width="1.02" height="1.02" fill="#4a00ff"/><rect x="43" y="56" width="1.02" height="1.02" fill="#1600ff"/><rect x="43" y="62" width="1.02" height="1.02" fill="#3e00ff"/><rect x="44" y="2" width="1.02" height="1.02" fill="#5000ff"/><rect x="44" y="4" width="1.02" height="1.02" fill="#2700ff"/><rect x="44" y="8" width="1.02" height="1.02" fill="#2900ff"/><rect x="44" y="16" width="1.02" height="1.02" fill="#2800ff"/><rect x="44" y="27" width="1.02" height="1.02" fill="#3800ff"/><rect x="44" y="34" width="1.02" height="1.02" fill="#1900ff"/><rect x="44" y="37" width="1.02" height="1.02" fill="#2800ff"/><rect x="44" y="51" width="1.02" height="1.02" fill="#2a00ff"/><rect x="45" y="5" width="1.02" height="1.02" fill="#1c00ff"/><rect x="45" y="6" width="1.02" height="1.02" fill="#2a00ff"/><rect x="45" y="36" width="1.02" height="1.02" fill="#2e00ff"/><rect x="45" y="49" width="1.02" height="1.02" fill="#1900ff"/><rect x="45" y="53" width="1.02" height="1.02" fill="#1700ff"/><rect x="46" y="1" width="1.02" height="1.02" fill="#4300ff"/><rect x="46" y="11" width="1.02" height="1.02" fill="#4600ff"/><rect x="46" y="12" width="1.02" height="1.02" fill="#2e00ff"/><rect x="46" y="16" width="1.02" height="1.02" fill="#2e00ff"/><rect x="46" y="35" width="1.02" height="1.02" fill="#3e00ff"/><rect x="46" y="36" width="1.02" height="1.02" fill="#4900ff"/><rect x="46" y="39" width="1.02" height="1.02" fill="#4a00ff"/><rect x="46" y="40" width="1.02" height="1.02" fill="#2800ff"/><rect x="46" y="51" width="1.02" height="1.02" fill="#3000ff"/><rect x="46" y="54" width="1.02" height="1.02" fill="#1900ff"/><rect x="46" y="61" width="1.02" height="1.02" fill="#1800ff"/><rect x="47" y="3" width="1.02" height="1.02" fill="#4900ff"/><rect x="47" y="7" width="1.02" height="1.02" fill="#4000ff"/><rect x="47" y="9" width="1.02" height="1.02" fill="#1b00ff"/><rect x="47" y="10" width="1.02" height="1.02" fill="#2c00ff"/><rect x="47" y="11" width="1.02" height="1.02" fill="#3a00ff"/><rect x="47" y="18" width="1.02" height="1.02" fill="#3e00ff"/><rect x="47" y="19" width="1.02" height="1.02" fill="#2d00ff"/><rect x="47" y="30" width="1.02" height="1.02" fill="#2500ff"/><rect x="47" y="32" width="1.02" height="1.02" fill="#4b00ff"/><rect x="47" y="44" width="1.02" height="1.02" fill="#1300ff"/><rect x="47" y="48" width="1.02" height="1.02" fill="#5600ff"/><rect x="47" y="49" width="1.02" height="1.02" fill="#3b00ff"/><rect x="48" y="11" width="1.02" height="1.02" fill="#2b00ff"/><rect x="48" y="29" width="1.02" height="1.02" fill="#3700ff"/><rect x="48" y="31" width="1.02" height="1.02" fill="#4e00ff"/><rect x="48" y="40" width="1.02" height="1.02" fill="#1800ff"/><rect x="48" y="42" width="1.02" height="1.02" fill="#5400ff"/><rect x="48" y="45" width="1.02" height="1.02" fill="#4a00ff"/><rect x="48" y="61" width="1.02" height="1.02" fill="#1100ff"/><rect x="49" y="9" width="1.02" height="1.02" fill="#1f00ff"/><rect x="49" y="23" width="1.02" height="1.02" fill="#1f00ff"/><rect x="49" y="25" width="1.02" height="1.02" fill="#1900ff"/><rect x="49" y="32" width="1.02" height="1.02" fill="#3700ff"/><rect x="49" y="38" width="1.02" height="1.02" fill="#1b00ff"/><rect x="49" y="39" width="1.02" height="1.02" fill="#2600ff"/><rect x="49" y="45" width="1.02" height="1.02" fill="#3600ff"/><rect x="49" y="46" width="1.02" height="1.02" fill="#5800ff"/><rect x="49" y="49" width="1.02" height="1.02" fill="#2b00ff"/><rect x="49" y="51" width="1.02" height="1.02" fill="#3900ff"/><rect x="49" y="52" width="1.02" height="1.02" fill="#5200ff"/><rect x="49" y="63" width="1.02" height="1.02" fill="#4e00ff"/><rect x="50" y="5" width="1.02" height="1.02" fill="#3f00ff"/><rect x="50" y="20" width="1.02" height="1.02" fill="#2f00ff"/><rect x="50" y="25" width="1.02" height="1.02" fill="#4700ff"/><rect x="50" y="28" width="1.02" height="1.02" fill="#0e00ff"/><rect x="50" y="34" width="1.02" height="1.02" fill="#2000ff"/><rect x="50" y="49" width="1.02" height="1.02" fill="#2000ff"/><rect x="50" y="52" width="1.02" height="1.02" fill="#4e00ff"/><rect x="50" y="59" width="1.02" height="1.02" fill="#2600ff"/><rect x="51" y="2" width="1.02" height="1.02" fill="#0300ff"/><rect x="51" y="4" width="1.02" height="1.02" fill="#3500ff"/><rect x="51" y="7" width="1.02" height="1.02" fill="#2b00ff"/><rect x="51" y="10" width="1.02" height="1.02" fill="#3800ff"/><rect x="51" y="11" width="1.02" height="1.02" fill="#0600ff"/><rect x="51" y="12" width="1.02" height="1.02" fill="#3200ff"/><rect x="51" y="31" width="1.02" height="1.02" fill="#4800ff"/><rect x="51" y="32" width="1.02" height="1.02" fill="#1500ff"/><rect x="51" y="35" width="1.02" height="1.02" fill="#1200ff"/><rect x="51" y="36" width="1.02" height="1.02" fill="#3f00ff"/><rect x="51" y="47" width="1.02" height="1.02" fill="#0500ff"/><rect x="51" y="56" width="1.02" height="1.02" fill="#0900ff"/><rect x="52" y="4" width="1.02" height="1.02" fill="#5400ff"/><rect x="52" y="6" width="1.02" height="1.02" fill="#4f00ff"/><rect x="52" y="8" width="1.02" height="1.02" fill="#5100ff"/><rect x="52" y="14" width="1.02" height="1.02" fill="#4400ff"/><rect x="52" y="19" width="1.02" height="1.02" fill="#0f00ff"/><rect x="52" y="24" width="1.02" height="1.02" fill="#5500ff"/><rect x="52" y="25" width="1.02" height="1.02" fill="#5000ff"/><rect x="52" y="26" width="1.02" height="1.02" fill="#1e00ff"/><rect x="52" y="27" width="1.02" height="1.02" fill="#0012ff"/><rect x="52" y="28" width="1.02" height="1.02" fill="#000bff"/><rect x="52" y="30" width="1.02" height="1.02" fill="#5000ff"/><rect x="52" y="38" width="1.02" height="1.02" fill="#5700ff"/><rect x="52" y="40" width="1.02" height="1.02" fill="#0c00ff"/><rect x="52" y="41" width="1.02" height="1.02" fill="#2700ff"/><rect x="52" y="42" width="1.02" height="1.02" fill="#5200ff"/><rect x="52" y="47" width="1.02" height="1.02" fill="#0013ff"/><rect x="52" y="48" width="1.02" height="1.02" fill="#5300ff"/><rect x="52" y="53" width="1.02" height="1.02" fill="#5700ff"/><rect x="52" y="54" width="1.02" height="1.02" fill="#5700ff"/><rect x="52" y="56" width="1.02" height="1.02" fill="#5600ff"/><rect x="52" y="57" width="1.02" height="1.02" fill="#0300ff"/><rect x="52" y="58" width="1.02" height="1.02" fill="#5600ff"/><rect x="52" y="59" width="1.02" height="1.02" fill="#5200ff"/><rect x="53" y="0" width="1.02" height="1.02" fill="#5500ff"/><rect x="53" y="1" width="1.02" height="1.02" fill="#5300ff"/><rect x="53" y="3" width="1.02" height="1.02" fill="#4000ff"/><rect x="53" y="4" width="1.02" height="1.02" fill="#3800ff"/><rect x="53" y="6" width="1.02" height="1.02" fill="#1e00ff"/><rect x="53" y="7" width="1.02" height="1.02" fill="#4100ff"/><rect x="53" y="9" width="1.02" height="1.02" fill="#2300ff"/><rect x="53" y="10" width="1.02" height="1.02" fill="#3b00ff"/><rect x="53" y="13" width="1.02" height="1.02" fill="#0f00ff"/><rect x="53" y="15" width="1.02" height="1.02" fill="#3800ff"/><rect x="53" y="16" width="1.02" height="1.02" fill="#5900ff"/><rect x="53" y="17" width="1.02" height="1.02" fill="#5800ff"/><rect x="53" y="18" width="1.02" height="1.02" fill="#1c00ff"/><rect x="53" y="19" width="1.02" height="1.02" fill="#5000ff"/><rect x="53" y="20" width="1.02" height="1.02" fill="#4500ff"/><rect x="53" y="21" width="1.02" height="1.02" fill="#3e00ff"/><rect x="53" y="22" width="1.02" height="1.02" fill="#1d00ff"/><rect x="53" y="24" width="1.02" height="1.02" fill="#5200ff"/><rect x="53" y="25" width="1.02" height="1.02" fill="#5400ff"/><rect x="53" y="27" width="1.02" height="1.02" fill="#5100ff"/><rect x="53" y="29" width="1.02" height="1.02" fill="#4000ff"/><rect x="53" y="30" width="1.02" height="1.02" fill="#4f00ff"/><rect x="53" y="31" width="1.02" height="1.02" fill="#5a00ff"/><rect x="53" y="32" width="1.02" height="1.02" fill="#4300ff"/><rect x="53" y="33" width="1.02" height="1.02" fill="#5800ff"/><rect x="53" y="35" width="1.02" height="1.02" fill="#0400ff"/><rect x="53" y="36" width="1.02" height="1.02" fill="#5600ff"/><rect x="53" y="37" width="1.02" height="1.02" fill="#4300ff"/><rect x="53" y="38" width="1.02" height="1.02" fill="#4200ff"/><rect x="53" y="39" width="1.02" height="1.02" fill="#4300ff"/><rect x="53" y="41" width="1.02" height="1.02" fill="#1400ff"/><rect x="53" y="45" width="1.02" height="1.02" fill="#4100ff"/><rect x="53" y="47" width="1.02" height="1.02" fill="#3c00ff"/><rect x="53" y="48" width="1.02" height="1.02" fill="#4700ff"/><rect x="53" y="49" width="1.02" height="1.02" fill="#5300ff"/><rect x="53" y="51" width="1.02" height="1.02" fill="#4b00ff"/><rect x="53" y="52" width="1.02" height="1.02" fill="#5100ff"/><rect x="53" y="53" width="1.02" height="1.02" fill="#4300ff"/><rect x="53" y="56" width="1.02" height="1.02" fill="#5100ff"/><rect x="53" y="57" width="1.02" height="1.02" fill="#4900ff"/><rect x="53" y="58" width="1.02" height="1.02" fill="#5800ff"/><rect x="53" y="61" width="1.02" height="1.02" fill="#4100ff"/><rect x="53" y="63" width="1.02" height="1.02" fill="#5a00ff"/><rect x="54" y="0" width="1.02" height="1.02" fill="#0001ff"/><rect x="54" y="1" width="1.02" height="1.02" fill="#5800ff"/><rect x="54" y="2" width="1.02" height="1.02" fill="#4000ff"/><rect x="54" y="4" width="1.02" height="1.02" fill="#4200ff"/><rect x="54" y="5" width="1.02" height="1.02" fill="#1c00ff"/><rect x="54" y="7" width="1.02" height="1.02" fill="#2c00ff"/><rect x="54" y="8" width="1.02" height="1.02" fill="#0060ff"/><rect x="54" y="9" width="1.02" height="1.02" fill="#1400ff"/><rect x="54" y="10" width="1.02" height="1.02" fill="#1c00ff"/><rect x="54" y="11" width="1.02" height="1.02" fill="#3f00ff"/><rect x="54" y="12" width="1.02" height="1.02" fill="#3300ff"/><rect x="54" y="13" width="1.02" height="1.02" fill="#4b00ff"/><rect x="54" y="14" width="1.02" height="1.02" fill="#4b00ff"/><rect x="54" y="15" width="1.02" height="1.02" fill="#003bff"/><rect x="54" y="17" width="1.02" height="1.02" fill="#3600ff"/><rect x="54" y="19" width="1.02" height="1.02" fill="#2c00ff"/><rect x="54" y="20" width="1.02" height="1.02" fill="#4c00ff"/><rect x="54" y="21" width="1.02" height="1.02" fill="#2e00ff"/><rect x="54" y="22" width="1.02" height="1.02" fill="#2a00ff"/><rect x="54" y="25" width="1.02" height="1.02" fill="#4b00ff"/><rect x="54" y="26" width="1.02" height="1.02" fill="#5700ff"/><rect x="54" y="27" width="1.02" height="1.02" fill="#2200ff"/><rect x="54" y="28" width="1.02" height="1.02" fill="#4400ff"/><rect x="54" y="30" width="1.02" height="1.02" fill="#5600ff"/><rect x="54" y="32" width="1.02" height="1.02" fill="#1700ff"/><rect x="54" y="33" width="1.02" height="1.02" fill="#3d00ff"/><rect x="54" y="36" width="1.02" height="1.02" fill="#2b00ff"/><rect x="54" y="37" width="1.02" height="1.02" fill="#3a00ff"/><rect x="54" y="41" width="1.02" height="1.02" fill="#2600ff"/><rect x="54" y="42" width="1.02" height="1.02" fill="#3100ff"/><rect x="54" y="43" width="1.02" height="1.02" fill="#5500ff"/><rect x="54" y="45" width="1.02" height="1.02" fill="#2b00ff"/><rect x="54" y="46" width="1.02" height="1.02" fill="#4d00ff"/><rect x="54" y="49" width="1.02" height="1.02" fill="#3a00ff"/><rect x="54" y="50" width="1.02" height="1.02" fill="#3600ff"/><rect x="54" y="51" width="1.02" height="1.02" fill="#1a00ff"/><rect x="54" y="52" width="1.02" height="1.02" fill="#2400ff"/><rect x="54" y="53" width="1.02" height="1.02" fill="#5100ff"/><rect x="54" y="54" width="1.02" height="1.02" fill="#4500ff"/><rect x="54" y="55" width="1.02" height="1.02" fill="#4700ff"/><rect x="54" y="57" width="1.02" height="1.02" fill="#2d00ff"/><rect x="54" y="58" width="1.02" height="1.02" fill="#2600ff"/><rect x="54" y="59" width="1.02" height="1.02" fill="#0006ff"/><rect x="54" y="60" width="1.02" height="1.02" fill="#4100ff"/><rect x="54" y="62" width="1.02" height="1.02" fill="#5200ff"/><rect x="55" y="0" width="1.02" height="1.02" fill="#0049ff"/><rect x="55" y="1" width="1.02" height="1.02" fill="#3400ff"/><rect x="55" y="2" width="1.02" height="1.02" fill="#3700ff"/><rect x="55" y="3" width="1.02" height="1.02" fill="#1e00ff"/><rect x="55" y="4" width="1.02" height="1.02" fill="#0064ff"/><rect x="55" y="5" width="1.02" height="1.02" fill="#1400ff"/><rect x="55" y="6" width="1.02" height="1.02" fill="#0b00ff"/><rect x="55" y="7" width="1.02" height="1.02" fill="#5600ff"/><rect x="55" y="9" width="1.02" height="1.02" fill="#2a00ff"/><rect x="55" y="10" width="1.02" height="1.02" fill="#3900ff"/><rect x="55" y="12" width="1.02" height="1.02" fill="#0004ff"/><rect x="55" y="13" width="1.02" height="1.02" fill="#0047ff"/><rect x="55" y="14" width="1.02" height="1.02" fill="#4e00ff"/><rect x="55" y="15" width="1.02" height="1.02" fill="#2d00ff"/><rect x="55" y="16" width="1.02" height="1.02" fill="#4500ff"/><rect x="55" y="17" width="1.02" height="1.02" fill="#1f00ff"/><rect x="55" y="18" width="1.02" height="1.02" fill="#0031ff"/><rect x="55" y="19" width="1.02" height="1.02" fill="#2f00ff"/><rect x="55" y="20" width="1.02" height="1.02" fill="#2d00ff"/><rect x="55" y="21" width="1.02" height="1.02" fill="#0f00ff"/><rect x="55" y="22" width="1.02" height="1.02" fill="#1100ff"/><rect x="55" y="23" width="1.02" height="1.02" fill="#3800ff"/><rect x="55" y="24" width="1.02" height="1.02" fill="#0900ff"/><rect x="55" y="25" width="1.02" height="1.02" fill="#4100ff"/><rect x="55" y="26" width="1.02" height="1.02" fill="#3600ff"/><rect x="55" y="27" width="1.02" height="1.02" fill="#2500ff"/><rect x="55" y="28" width="1.02" height="1.02" fill="#1e00ff"/><rect x="55" y="29" width="1.02" height="1.02" fill="#2300ff"/><rect x="55" y="30" width="1.02" height="1.02" fill="#1000ff"/><rect x="55" y="31" width="1.02" height="1.02" fill="#2100ff"/><rect x="55" y="32" width="1.02" height="1.02" fill="#0041ff"/><rect x="55" y="33" width="1.02" height="1.02" fill="#4d00ff"/><rect x="55" y="34" width="1.02" height="1.02" fill="#0b00ff"/><rect x="55" y="36" width="1.02" height="1.02" fill="#0d00ff"/><rect x="55" y="38" width="1.02" height="1.02" fill="#4400ff"/><rect x="55" y="39" width="1.02" height="1.02" fill="#1d00ff"/><rect x="55" y="40" width="1.02" height="1.02" fill="#3100ff"/><rect x="55" y="41" width="1.02" height="1.02" fill="#2300ff"/><rect x="55" y="42" width="1.02" height="1.02" fill="#4000ff"/><rect x="55" y="43" width="1.02" height="1.02" fill="#0043ff"/><rect x="55" y="44" width="1.02" height="1.02" fill="#4300ff"/><rect x="55" y="45" width="1.02" height="1.02" fill="#1e00ff"/><rect x="55" y="46" width="1.02" height="1.02" fill="#2c00ff"/><rect x="55" y="47" width="1.02" height="1.02" fill="#4000ff"/><rect x="55" y="48" width="1.02" height="1.02" fill="#3300ff"/><rect x="55" y="49" width="1.02" height="1.02" fill="#2900ff"/><rect x="55" y="50" width="1.02" height="1.02" fill="#0a00ff"/><rect x="55" y="51" width="1.02" height="1.02" fill="#2400ff"/><rect x="55" y="52" width="1.02" height="1.02" fill="#3c00ff"/><rect x="55" y="53" width="1.02" height="1.02" fill="#3800ff"/><rect x="55" y="54" width="1.02" height="1.02" fill="#4400ff"/><rect x="55" y="55" width="1.02" height="1.02" fill="#1d00ff"/><rect x="55" y="56" width="1.02" height="1.02" fill="#5400ff"/><rect x="55" y="57" width="1.02" height="1.02" fill="#4800ff"/><rect x="55" y="58" width="1.02" height="1.02" fill="#0e00ff"/><rect x="55" y="59" width="1.02" height="1.02" fill="#0b00ff"/><rect x="55" y="60" width="1.02" height="1.02" fill="#0200ff"/><rect x="55" y="61" width="1.02" height="1.02" fill="#3100ff"/><rect x="55" y="62" width="1.02" height="1.02" fill="#0015ff"/><rect x="55" y="63" width="1.02" height="1.02" fill="#4800ff"/><rect x="56" y="0" width="1.02" height="1.02" fill="#0002ff"/><rect x="56" y="1" width="1.02" height="1.02" fill="#0063ff"/><rect x="56" y="2" width="1.02" height="1.02" fill="#004aff"/><rect x="56" y="3" width="1.02" height="1.02" fill="#2300ff"/><rect x="56" y="4" width="1.02" height="1.02" fill="#0016ff"/><rect x="56" y="5" width="1.02" height="1.02" fill="#0700ff"/><rect x="56" y="6" width="1.02" height="1.02" fill="#2d00ff"/><rect x="56" y="7" width="1.02" height="1.02" fill="#000cff"/><rect x="56" y="8" width="1.02" height="1.02" fill="#2400ff"/><rect x="56" y="9" width="1.02" height="1.02" fill="#007fff"/><rect x="56" y="10" width="1.02" height="1.02" fill="#0027ff"/><rect x="56" y="11" width="1.02" height="1.02" fill="#0036ff"/><rect x="56" y="12" width="1.02" height="1.02" fill="#009fff"/><rect x="56" y="13" width="1.02" height="1.02" fill="#004fff"/><rect x="56" y="14" width="1.02" height="1.02" fill="#0054ff"/><rect x="56" y="15" width="1.02" height="1.02" fill="#1400ff"/><rect x="56" y="16" width="1.02" height="1.02" fill="#0036ff"/><rect x="56" y="17" width="1.02" height="1.02" fill="#0036ff"/><rect x="56" y="18" width="1.02" height="1.02" fill="#3600ff"/><rect x="56" y="19" width="1.02" height="1.02" fill="#1000ff"/><rect x="56" y="20" width="1.02" height="1.02" fill="#0019ff"/><rect x="56" y="21" width="1.02" height="1.02" fill="#002eff"/><rect x="56" y="22" width="1.02" height="1.02" fill="#0500ff"/><rect x="56" y="23" width="1.02" height="1.02" fill="#2d00ff"/><rect x="56" y="24" width="1.02" height="1.02" fill="#0b00ff"/><rect x="56" y="25" width="1.02" height="1.02" fill="#0069ff"/><rect x="56" y="26" width="1.02" height="1.02" fill="#1b00ff"/><rect x="56" y="27" width="1.02" height="1.02" fill="#000bff"/><rect x="56" y="28" width="1.02" height="1.02" fill="#0800ff"/><rect x="56" y="29" width="1.02" height="1.02" fill="#0500ff"/><rect x="56" y="30" width="1.02" height="1.02" fill="#3900ff"/><rect x="56" y="31" width="1.02" height="1.02" fill="#0600ff"/><rect x="56" y="32" width="1.02" height="1.02" fill="#0b00ff"/><rect x="56" y="33" width="1.02" height="1.02" fill="#0037ff"/><rect x="56" y="34" width="1.02" height="1.02" fill="#001cff"/><rect x="56" y="35" width="1.02" height="1.02" fill="#4200ff"/><rect x="56" y="36" width="1.02" height="1.02" fill="#0023ff"/><rect x="56" y="37" width="1.02" height="1.02" fill="#0004ff"/><rect x="56" y="38" width="1.02" height="1.02" fill="#4300ff"/><rect x="56" y="39" width="1.02" height="1.02" fill="#0023ff"/><rect x="56" y="40" width="1.02" height="1.02" fill="#3a00ff"/><rect x="56" y="41" width="1.02" height="1.02" fill="#0014ff"/><rect x="56" y="42" width="1.02" height="1.02" fill="#3a00ff"/><rect x="56" y="43" width="1.02" height="1.02" fill="#001eff"/><rect x="56" y="44" width="1.02" height="1.02" fill="#2200ff"/><rect x="56" y="45" width="1.02" height="1.02" fill="#0081ff"/><rect x="56" y="46" width="1.02" height="1.02" fill="#3c00ff"/><rect x="56" y="47" width="1.02" height="1.02" fill="#003cff"/><rect x="56" y="48" width="1.02" height="1.02" fill="#0034ff"/><rect x="56" y="49" width="1.02" height="1.02" fill="#4900ff"/><rect x="56" y="50" width="1.02" height="1.02" fill="#0002ff"/><rect x="56" y="51" width="1.02" height="1.02" fill="#3c00ff"/><rect x="56" y="52" width="1.02" height="1.02" fill="#0044ff"/><rect x="56" y="53" width="1.02" height="1.02" fill="#0015ff"/><rect x="56" y="54" width="1.02" height="1.02" fill="#001eff"/><rect x="56" y="55" width="1.02" height="1.02" fill="#1500ff"/><rect x="56" y="56" width="1.02" height="1.02" fill="#0024ff"/><rect x="56" y="57" width="1.02" height="1.02" fill="#001cff"/><rect x="56" y="58" width="1.02" height="1.02" fill="#3900ff"/><rect x="56" y="59" width="1.02" height="1.02" fill="#000aff"/><rect x="56" y="60" width="1.02" height="1.02" fill="#3600ff"/><rect x="56" y="61" width="1.02" height="1.02" fill="#0800ff"/><rect x="56" y="62" width="1.02" height="1.02" fill="#001dff"/><rect x="56" y="63" width="1.02" height="1.02" fill="#3e00ff"/><rect x="57" y="0" width="1.02" height="1.02" fill="#00f0ff"/><rect x="57" y="1" width="1.02" height="1.02" fill="#00ffd6"/><rect x="57" y="2" width="1.02" height="1.02" fill="#00ffa1"/><rect x="57" y="3" width="1.02" height="1.02" fill="#00ffde"/><rect x="57" y="4" width="1.02" height="1.02" fill="#00ffec"/><rect x="57" y="5" width="1.02" height="1.02" fill="#00ffd6"/><rect x="57" y="6" width="1.02" height="1.02" fill="#00cbff"/><rect x="57" y="7" width="1.02" height="1.02" fill="#00fff3"/><rect x="57" y="8" width="1.02" height="1.02" fill="#00b8ff"/><rect x="57" y="9" width="1.02" height="1.02" fill="#00ff8f"/><rect x="57" y="10" width="1.02" height="1.02" fill="#00e6ff"/><rect x="57" y="11" width="1.02" height="1.02" fill="#00d8ff"/><rect x="57" y="12" width="1.02" height="1.02" fill="#00faff"/><rect x="57" y="13" width="1.02" height="1.02" fill="#00e4ff"/><rect x="57" y="14" width="1.02" height="1.02" fill="#00a7ff"/><rect x="57" y="15" width="1.02" height="1.02" fill="#00e5ff"/><rect x="57" y="16" width="1.02" height="1.02" fill="#00ffe2"/><rect x="57" y="17" width="1.02" height="1.02" fill="#00fffb"/><rect x="57" y="18" width="1.02" height="1.02" fill="#00ffe5"/><rect x="57" y="19" width="1.02" height="1.02" fill="#00d1ff"/><rect x="57" y="20" width="1.02" height="1.02" fill="#00e6ff"/><rect x="57" y="21" width="1.02" height="1.02" fill="#00f6ff"/><rect x="57" y="22" width="1.02" height="1.02" fill="#00ecff"/><rect x="57" y="23" width="1.02" height="1.02" fill="#00ceff"/><rect x="57" y="24" width="1.02" height="1.02" fill="#00ffc1"/><rect x="57" y="25" width="1.02" height="1.02" fill="#00d9ff"/><rect x="57" y="26" width="1.02" height="1.02" fill="#00cfff"/><rect x="57" y="27" width="1.02" height="1.02" fill="#00e0ff"/><rect x="57" y="28" width="1.02" height="1.02" fill="#0094ff"/><rect x="57" y="29" width="1.02" height="1.02" fill="#00fdff"/><rect x="57" y="30" width="1.02" height="1.02" fill="#00d0ff"/><rect x="57" y="31" width="1.02" height="1.02" fill="#00beff"/><rect x="57" y="32" width="1.02" height="1.02" fill="#00fffc"/><rect x="57" y="33" width="1.02" height="1.02" fill="#00d5ff"/><rect x="57" y="34" width="1.02" height="1.02" fill="#00d1ff"/><rect x="57" y="35" width="1.02" height="1.02" fill="#00ff89"/><rect x="57" y="36" width="1.02" height="1.02" fill="#00ddff"/><rect x="57" y="37" width="1.02" height="1.02" fill="#00ff77"/><rect x="57" y="38" width="1.02" height="1.02" fill="#00bbff"/><rect x="57" y="39" width="1.02" height="1.02" fill="#009aff"/><rect x="57" y="40" width="1.02" height="1.02" fill="#00eaff"/><rect x="57" y="41" width="1.02" height="1.02" fill="#00a4ff"/><rect x="57" y="42" width="1.02" height="1.02" fill="#00fff5"/><rect x="57" y="43" width="1.02" height="1.02" fill="#0091ff"/><rect x="57" y="44" width="1.02" height="1.02" fill="#00fdff"/><rect x="57" y="45" width="1.02" height="1.02" fill="#00b4ff"/><rect x="57" y="46" width="1.02" height="1.02" fill="#00d2ff"/><rect x="57" y="47" width="1.02" height="1.02" fill="#00ffc3"/><rect x="57" y="48" width="1.02" height="1.02" fill="#00faff"/><rect x="57" y="49" width="1.02" height="1.02" fill="#00d1ff"/><rect x="57" y="50" width="1.02" height="1.02" fill="#00d5ff"/><rect x="57" y="51" width="1.02" height="1.02" fill="#00c9ff"/><rect x="57" y="52" width="1.02" height="1.02" fill="#006dff"/><rect x="57" y="53" width="1.02" height="1.02" fill="#00a5ff"/><rect x="57" y="54" width="1.02" height="1.02" fill="#00ffda"/><rect x="57" y="55" width="1.02" height="1.02" fill="#00a3ff"/><rect x="57" y="56" width="1.02" height="1.02" fill="#00f5ff"/><rect x="57" y="57" width="1.02" height="1.02" fill="#00fffa"/><rect x="57" y="58" width="1.02" height="1.02" fill="#00a2ff"/><rect x="57" y="59" width="1.02" height="1.02" fill="#00cbff"/><rect x="57" y="60" width="1.02" height="1.02" fill="#00b2ff"/><rect x="57" y="61" width="1.02" height="1.02" fill="#009bff"/><rect x="57" y="62" width="1.02" height="1.02" fill="#00b0ff"/><rect x="57" y="63" width="1.02" height="1.02" fill="#00b4ff"/><rect x="58" y="0" width="1.02" height="1.02" fill="#00ff0f"/><rect x="58" y="1" width="1.02" height="1.02" fill="#00ff64"/><rect x="58" y="2" width="1.02" height="1.02" fill="#00ff70"/><rect x="58" y="3" width="1.02" height="1.02" fill="#00ff60"/><rect x="58" y="4" width="1.02" height="1.02" fill="#00ff4f"/><rect x="58" y="5" width="1.02" height="1.02" fill="#00ff13"/><rect x="58" y="6" width="1.02" height="1.02" fill="#00ff88"/><rect x="58" y="7" width="1.02" height="1.02" fill="#00ff99"/><rect x="58" y="8" width="1.02" height="1.02" fill="#00ff71"/><rect x="58" y="9" width="1.02" height="1.02" fill="#00ffa6"/><rect x="58" y="10" width="1.02" height="1.02" fill="#00ff6b"/><rect x="58" y="11" width="1.02" height="1.02" fill="#00ffc1"/><rect x="58" y="12" width="1.02" height="1.02" fill="#3cff00"/><rect x="58" y="13" width="1.02" height="1.02" fill="#00ff13"/><rect x="58" y="14" width="1.02" height="1.02" fill="#00ff13"/><rect x="58" y="15" width="1.02" height="1.02" fill="#00ffbd"/><rect x="58" y="16" width="1.02" height="1.02" fill="#00ff90"/><rect x="58" y="17" width="1.02" height="1.02" fill="#00ffc2"/><rect x="58" y="18" width="1.02" height="1.02" fill="#0eff00"/><rect x="58" y="19" width="1.02" height="1.02" fill="#00ff8f"/><rect x="58" y="20" width="1.02" height="1.02" fill="#00ff38"/><rect x="58" y="21" width="1.02" height="1.02" fill="#00ff59"/><rect x="58" y="22" width="1.02" height="1.02" fill="#00ff7e"/><rect x="58" y="23" width="1.02" height="1.02" fill="#00ff43"/><rect x="58" y="24" width="1.02" height="1.02" fill="#00ff3b"/><rect x="58" y="25" width="1.02" height="1.02" fill="#00ffc8"/><rect x="58" y="26" width="1.02" height="1.02" fill="#47ff00"/><rect x="58" y="27" width="1.02" height="1.02" fill="#00ff42"/><rect x="58" y="28" width="1.02" height="1.02" fill="#00ff59"/><rect x="58" y="29" width="1.02" height="1.02" fill="#00ffa2"/><rect x="58" y="30" width="1.02" height="1.02" fill="#00ff73"/><rect x="58" y="31" width="1.02" height="1.02" fill="#0cff00"/><rect x="58" y="32" width="1.02" height="1.02" fill="#00ff68"/><rect x="58" y="33" width="1.02" height="1.02" fill="#00ff19"/><rect x="58" y="34" width="1.02" height="1.02" fill="#00ffa2"/><rect x="58" y="35" width="1.02" height="1.02" fill="#00ffc2"/><rect x="58" y="36" width="1.02" height="1.02" fill="#00ff4a"/><rect x="58" y="37" width="1.02" height="1.02" fill="#00ff33"/><rect x="58" y="38" width="1.02" height="1.02" fill="#00ff4b"/><rect x="58" y="39" width="1.02" height="1.02" fill="#00ff72"/><rect x="58" y="40" width="1.02" height="1.02" fill="#10ff00"/><rect x="58" y="41" width="1.02" height="1.02" fill="#00ff2d"/><rect x="58" y="42" width="1.02" height="1.02" fill="#00ff62"/><rect x="58" y="43" width="1.02" height="1.02" fill="#1bff00"/><rect x="58" y="44" width="1.02" height="1.02" fill="#00ff6c"/><rect x="58" y="45" width="1.02" height="1.02" fill="#00ff8c"/><rect x="58" y="46" width="1.02" height="1.02" fill="#00ff79"/><rect x="58" y="47" width="1.02" height="1.02" fill="#00ffc8"/><rect x="58" y="48" width="1.02" height="1.02" fill="#00ff50"/><rect x="58" y="49" width="1.02" height="1.02" fill="#00ff93"/><rect x="58" y="50" width="1.02" height="1.02" fill="#00ff7e"/><rect x="58" y="51" width="1.02" height="1.02" fill="#00ffc0"/><rect x="58" y="52" width="1.02" height="1.02" fill="#00ff71"/><rect x="58" y="53" width="1.02" height="1.02" fill="#00ffb8"/><rect x="58" y="54" width="1.02" height="1.02" fill="#00ffb6"/><rect x="58" y="55" width="1.02" height="1.02" fill="#00ff76"/><rect x="58" y="56" width="1.02" height="1.02" fill="#00ff52"/><rect x="58" y="57" width="1.02" height="1.02" fill="#00ff83"/><rect x="58" y="58" width="1.02" height="1.02" fill="#00ff57"/><rect x="58" y="59" width="1.02" height="1.02" fill="#00ff6d"/><rect x="58" y="60" width="1.02" height="1.02" fill="#00ff6a"/><rect x="58" y="61" width="1.02" height="1.02" fill="#30ff00"/><rect x="58" y="62" width="1.02" height="1.02" fill="#00ff6b"/><rect x="58" y="63" width="1.02" height="1.02" fill="#00ff40"/><rect x="59" y="0" width="1.02" height="1.02" fill="#00ff82"/><rect x="59" y="1" width="1.02" height="1.02" fill="#00ff4a"/><rect x="59" y="2" width="1.02" height="1.02" fill="#00ff00"/><rect x="59" y="3" width="1.02" height="1.02" fill="#00ffa4"/><rect x="59" y="4" width="1.02" height="1.02" fill="#92ff00"/><rect x="59" y="5" width="1.02" height="1.02" fill="#01ff00"/><rect x="59" y="6" width="1.02" height="1.02" fill="#00ffac"/><rect x="59" y="7" width="1.02" height="1.02" fill="#00ff0e"/><rect x="59" y="8" width="1.02" height="1.02" fill="#00ff84"/><rect x="59" y="9" width="1.02" height="1.02" fill="#00ff2a"/><rect x="59" y="10" width="1.02" height="1.02" fill="#00ff9f"/><rect x="59" y="11" width="1.02" height="1.02" fill="#00ff9e"/><rect x="59" y="12" width="1.02" height="1.02" fill="#00ff15"/><rect x="59" y="13" width="1.02" height="1.02" fill="#00ff84"/><rect x="59" y="14" width="1.02" height="1.02" fill="#00ff77"/><rect x="59" y="15" width="1.02" height="1.02" fill="#00ffa2"/><rect x="59" y="16" width="1.02" height="1.02" fill="#00ff77"/><rect x="59" y="17" width="1.02" height="1.02" fill="#00ff1a"/><rect x="59" y="18" width="1.02" height="1.02" fill="#5eff00"/><rect x="59" y="19" width="1.02" height="1.02" fill="#00ff81"/><rect x="59" y="20" width="1.02" height="1.02" fill="#00ff8e"/><rect x="59" y="21" width="1.02" height="1.02" fill="#00ff0c"/><rect x="59" y="22" width="1.02" height="1.02" fill="#00ff85"/><rect x="59" y="23" width="1.02" height="1.02" fill="#00ff09"/><rect x="59" y="24" width="1.02" height="1.02" fill="#00ff1f"/><rect x="59" y="25" width="1.02" height="1.02" fill="#00ff60"/><rect x="59" y="26" width="1.02" height="1.02" fill="#00ffa7"/><rect x="59" y="27" width="1.02" height="1.02" fill="#00ff1d"/><rect x="59" y="28" width="1.02" height="1.02" fill="#00ff5e"/><rect x="59" y="29" width="1.02" height="1.02" fill="#00ff16"/><rect x="59" y="30" width="1.02" height="1.02" fill="#00ff1b"/><rect x="59" y="31" width="1.02" height="1.02" fill="#07ff00"/><rect x="59" y="32" width="1.02" height="1.02" fill="#00ff36"/><rect x="59" y="33" width="1.02" height="1.02" fill="#00ff04"/><rect x="59" y="34" width="1.02" height="1.02" fill="#00ff88"/><rect x="59" y="35" width="1.02" height="1.02" fill="#6dff00"/><rect x="59" y="36" width="1.02" height="1.02" fill="#00ffaf"/><rect x="59" y="37" width="1.02" height="1.02" fill="#00ff41"/><rect x="59" y="38" width="1.02" height="1.02" fill="#00ff10"/><rect x="59" y="39" width="1.02" height="1.02" fill="#00ff6c"/><rect x="59" y="40" width="1.02" height="1.02" fill="#00ff61"/><rect x="59" y="41" width="1.02" height="1.02" fill="#00ff72"/><rect x="59" y="42" width="1.02" height="1.02" fill="#00ff7d"/><rect x="59" y="43" width="1.02" height="1.02" fill="#00ff2c"/><rect x="59" y="44" width="1.02" height="1.02" fill="#00ff1e"/><rect x="59" y="45" width="1.02" height="1.02" fill="#03ff00"/><rect x="59" y="46" width="1.02" height="1.02" fill="#04ff00"/><rect x="59" y="47" width="1.02" height="1.02" fill="#00ff62"/><rect x="59" y="48" width="1.02" height="1.02" fill="#00ff53"/><rect x="59" y="49" width="1.02" height="1.02" fill="#00ff7b"/><rect x="59" y="50" width="1.02" height="1.02" fill="#00ff95"/><rect x="59" y="51" width="1.02" height="1.02" fill="#00ff57"/><rect x="59" y="52" width="1.02" height="1.02" fill="#00ff52"/><rect x="59" y="53" width="1.02" height="1.02" fill="#00ff83"/><rect x="59" y="54" width="1.02" height="1.02" fill="#4fff00"/><rect x="59" y="55" width="1.02" height="1.02" fill="#00ff84"/><rect x="59" y="56" width="1.02" height="1.02" fill="#00ff8f"/><rect x="59" y="57" width="1.02" height="1.02" fill="#00ff26"/><rect x="59" y="58" width="1.02" height="1.02" fill="#00ff90"/><rect x="59" y="59" width="1.02" height="1.02" fill="#00ffb1"/><rect x="59" y="60" width="1.02" height="1.02" fill="#00ff72"/><rect x="59" y="61" width="1.02" height="1.02" fill="#00ff1f"/><rect x="59" y="62" width="1.02" height="1.02" fill="#00ff77"/><rect x="59" y="63" width="1.02" height="1.02" fill="#18ff00"/><rect x="60" y="0" width="1.02" height="1.02" fill="#00ff82"/><rect x="60" y="1" width="1.02" height="1.02" fill="#00ff28"/><rect x="60" y="2" width="1.02" height="1.02" fill="#5fff00"/><rect x="60" y="3" width="1.02" height="1.02" fill="#00ff23"/><rect x="60" y="4" width="1.02" height="1.02" fill="#00ff92"/><rect x="60" y="5" width="1.02" height="1.02" fill="#62ff00"/><rect x="60" y="6" width="1.02" height="1.02" fill="#47ff00"/><rect x="60" y="7" width="1.02" height="1.02" fill="#00ff59"/><rect x="60" y="8" width="1.02" height="1.02" fill="#00ff56"/><rect x="60" y="9" width="1.02" height="1.02" fill="#00ff8f"/><rect x="60" y="10" width="1.02" height="1.02" fill="#00ffab"/><rect x="60" y="11" width="1.02" height="1.02" fill="#00ff14"/><rect x="60" y="12" width="1.02" height="1.02" fill="#00ff75"/><rect x="60" y="13" width="1.02" height="1.02" fill="#00ff3c"/><rect x="60" y="14" width="1.02" height="1.02" fill="#00ff0c"/><rect x="60" y="15" width="1.02" height="1.02" fill="#00ff1d"/><rect x="60" y="16" width="1.02" height="1.02" fill="#00ffae"/><rect x="60" y="17" width="1.02" height="1.02" fill="#00ff3b"/><rect x="60" y="18" width="1.02" height="1.02" fill="#00ff86"/><rect x="60" y="19" width="1.02" height="1.02" fill="#00ffa8"/><rect x="60" y="20" width="1.02" height="1.02" fill="#00ff04"/><rect x="60" y="21" width="1.02" height="1.02" fill="#00ff21"/><rect x="60" y="22" width="1.02" height="1.02" fill="#00ff1a"/><rect x="60" y="23" width="1.02" height="1.02" fill="#00ff7a"/><rect x="60" y="24" width="1.02" height="1.02" fill="#03ff00"/><rect x="60" y="25" width="1.02" height="1.02" fill="#05ff00"/><rect x="60" y="26" width="1.02" height="1.02" fill="#00ff8a"/><rect x="60" y="27" width="1.02" height="1.02" fill="#00ffa6"/><rect x="60" y="28" width="1.02" height="1.02" fill="#00ff41"/><rect x="60" y="29" width="1.02" height="1.02" fill="#00ffb3"/><rect x="60" y="30" width="1.02" height="1.02" fill="#00ff5e"/><rect x="60" y="31" width="1.02" height="1.02" fill="#00ff9b"/><rect x="60" y="32" width="1.02" height="1.02" fill="#00ffab"/><rect x="60" y="33" width="1.02" height="1.02" fill="#00ff58"/><rect x="60" y="34" width="1.02" height="1.02" fill="#04ff00"/><rect x="60" y="35" width="1.02" height="1.02" fill="#00ff97"/><rect x="60" y="36" width="1.02" height="1.02" fill="#00ff7e"/><rect x="60" y="37" width="1.02" height="1.02" fill="#00ff73"/><rect x="60" y="38" width="1.02" height="1.02" fill="#00ff40"/><rect x="60" y="39" width="1.02" height="1.02" fill="#00ff02"/><rect x="60" y="40" width="1.02" height="1.02" fill="#00ff80"/><rect x="60" y="41" width="1.02" height="1.02" fill="#00ff91"/><rect x="60" y="42" width="1.02" height="1.02" fill="#00ff9b"/><rect x="60" y="43" width="1.02" height="1.02" fill="#00ff2b"/><rect x="60" y="44" width="1.02" height="1.02" fill="#00ff69"/><rect x="60" y="45" width="1.02" height="1.02" fill="#00ff70"/><rect x="60" y="46" width="1.02" height="1.02" fill="#00ff5e"/><rect x="60" y="47" width="1.02" height="1.02" fill="#0eff00"/><rect x="60" y="48" width="1.02" height="1.02" fill="#00ff0a"/><rect x="60" y="49" width="1.02" height="1.02" fill="#08ff00"/><rect x="60" y="50" width="1.02" height="1.02" fill="#00ff40"/><rect x="60" y="51" width="1.02" height="1.02" fill="#00ff01"/><rect x="60" y="52" width="1.02" height="1.02" fill="#00ff73"/><rect x="60" y="53" width="1.02" height="1.02" fill="#00ff76"/><rect x="60" y="54" width="1.02" height="1.02" fill="#00ffa2"/><rect x="60" y="55" width="1.02" height="1.02" fill="#00ff36"/><rect x="60" y="56" width="1.02" height="1.02" fill="#00ff2a"/><rect x="60" y="57" width="1.02" height="1.02" fill="#00ffa1"/><rect x="60" y="58" width="1.02" height="1.02" fill="#00ff52"/><rect x="60" y="59" width="1.02" height="1.02" fill="#00ff90"/><rect x="60" y="60" width="1.02" height="1.02" fill="#00ff3d"/><rect x="60" y="61" width="1.02" height="1.02" fill="#00ff09"/><rect x="60" y="62" width="1.02" height="1.02" fill="#00ff69"/><rect x="60" y="63" width="1.02" height="1.02" fill="#00ffaa"/><rect x="61" y="0" width="1.02" height="1.02" fill="#00fff5"/><rect x="61" y="1" width="1.02" height="1.02" fill="#00ff8d"/><rect x="61" y="2" width="1.02" height="1.02" fill="#00ffe2"/><rect x="61" y="3" width="1.02" height="1.02" fill="#00f9ff"/><rect x="61" y="4" width="1.02" height="1.02" fill="#00ff9d"/><rect x="61" y="5" width="1.02" height="1.02" fill="#00ff61"/><rect x="61" y="6" width="1.02" height="1.02" fill="#00ffee"/><rect x="61" y="7" width="1.02" height="1.02" fill="#00ffe6"/><rect x="61" y="8" width="1.02" height="1.02" fill="#00ffdb"/><rect x="61" y="9" width="1.02" height="1.02" fill="#00ffee"/><rect x="61" y="10" width="1.02" height="1.02" fill="#00ffbb"/><rect x="61" y="11" width="1.02" height="1.02" fill="#00ffef"/><rect x="61" y="12" width="1.02" height="1.02" fill="#00ff79"/><rect x="61" y="13" width="1.02" height="1.02" fill="#00ffdd"/><rect x="61" y="14" width="1.02" height="1.02" fill="#00ffb8"/><rect x="61" y="15" width="1.02" height="1.02" fill="#00ff76"/><rect x="61" y="16" width="1.02" height="1.02" fill="#00ffe3"/><rect x="61" y="17" width="1.02" height="1.02" fill="#00ffbb"/><rect x="61" y="18" width="1.02" height="1.02" fill="#00ffe6"/><rect x="61" y="19" width="1.02" height="1.02" fill="#00ff65"/><rect x="61" y="20" width="1.02" height="1.02" fill="#00ff79"/><rect x="61" y="21" width="1.02" height="1.02" fill="#00ffb3"/><rect x="61" y="22" width="1.02" height="1.02" fill="#00ffb8"/><rect x="61" y="23" width="1.02" height="1.02" fill="#00ffe0"/><rect x="61" y="24" width="1.02" height="1.02" fill="#00ff57"/><rect x="61" y="25" width="1.02" height="1.02" fill="#00fbff"/><rect x="61" y="26" width="1.02" height="1.02" fill="#00ff76"/><rect x="61" y="27" width="1.02" height="1.02" fill="#00ff43"/><rect x="61" y="28" width="1.02" height="1.02" fill="#00ff5c"/><rect x="61" y="29" width="1.02" height="1.02" fill="#00ff71"/><rect x="61" y="30" width="1.02" height="1.02" fill="#00ff8d"/><rect x="61" y="31" width="1.02" height="1.02" fill="#00ff6e"/><rect x="61" y="32" width="1.02" height="1.02" fill="#00ff94"/><rect x="61" y="33" width="1.02" height="1.02" fill="#00ffaa"/><rect x="61" y="34" width="1.02" height="1.02" fill="#00ffac"/><rect x="61" y="35" width="1.02" height="1.02" fill="#00ff1b"/><rect x="61" y="36" width="1.02" height="1.02" fill="#00ff77"/><rect x="61" y="37" width="1.02" height="1.02" fill="#00ffec"/><rect x="61" y="38" width="1.02" height="1.02" fill="#00ff15"/><rect x="61" y="39" width="1.02" height="1.02" fill="#06ff00"/><rect x="61" y="40" width="1.02" height="1.02" fill="#00ff55"/><rect x="61" y="41" width="1.02" height="1.02" fill="#00ff7c"/><rect x="61" y="42" width="1.02" height="1.02" fill="#00ffac"/><rect x="61" y="43" width="1.02" height="1.02" fill="#00ffa1"/><rect x="61" y="44" width="1.02" height="1.02" fill="#00ff5a"/><rect x="61" y="45" width="1.02" height="1.02" fill="#00ff7a"/><rect x="61" y="46" width="1.02" height="1.02" fill="#00ffd4"/><rect x="61" y="47" width="1.02" height="1.02" fill="#00ffcc"/><rect x="61" y="48" width="1.02" height="1.02" fill="#00ff98"/><rect x="61" y="49" width="1.02" height="1.02" fill="#00ff9b"/><rect x="61" y="50" width="1.02" height="1.02" fill="#00ff4a"/><rect x="61" y="51" width="1.02" height="1.02" fill="#00ff8a"/><rect x="61" y="52" width="1.02" height="1.02" fill="#00ff89"/><rect x="61" y="53" width="1.02" height="1.02" fill="#00ffc2"/><rect x="61" y="54" width="1.02" height="1.02" fill="#00ff3d"/><rect x="61" y="55" width="1.02" height="1.02" fill="#00ffc7"/><rect x="61" y="56" width="1.02" height="1.02" fill="#00ff08"/><rect x="61" y="57" width="1.02" height="1.02" fill="#00ff3b"/><rect x="61" y="58" width="1.02" height="1.02" fill="#00ffd0"/><rect x="61" y="59" width="1.02" height="1.02" fill="#00ff8d"/><rect x="61" y="60" width="1.02" height="1.02" fill="#00ff8f"/><rect x="61" y="61" width="1.02" height="1.02" fill="#00ff45"/><rect x="61" y="62" width="1.02" height="1.02" fill="#00ffd0"/><rect x="61" y="63" width="1.02" height="1.02" fill="#00ffb0"/><rect x="62" y="0" width="1.02" height="1.02" fill="#006eff"/><rect x="62" y="1" width="1.02" height="1.02" fill="#0044ff"/><rect x="62" y="2" width="1.02" height="1.02" fill="#001aff"/><rect x="62" y="3" width="1.02" height="1.02" fill="#0024ff"/><rect x="62" y="4" width="1.02" height="1.02" fill="#0037ff"/><rect x="62" y="5" width="1.02" height="1.02" fill="#001aff"/><rect x="62" y="6" width="1.02" height="1.02" fill="#0040ff"/><rect x="62" y="7" width="1.02" height="1.02" fill="#0087ff"/><rect x="62" y="8" width="1.02" height="1.02" fill="#00b2ff"/><rect x="62" y="9" width="1.02" height="1.02" fill="#001fff"/><rect x="62" y="10" width="1.02" height="1.02" fill="#006aff"/><rect x="62" y="11" width="1.02" height="1.02" fill="#0038ff"/><rect x="62" y="12" width="1.02" height="1.02" fill="#0075ff"/><rect x="62" y="13" width="1.02" height="1.02" fill="#005cff"/><rect x="62" y="14" width="1.02" height="1.02" fill="#007cff"/><rect x="62" y="15" width="1.02" height="1.02" fill="#001eff"/><rect x="62" y="16" width="1.02" height="1.02" fill="#0093ff"/><rect x="62" y="17" width="1.02" height="1.02" fill="#0089ff"/><rect x="62" y="18" width="1.02" height="1.02" fill="#000bff"/><rect x="62" y="19" width="1.02" height="1.02" fill="#0098ff"/><rect x="62" y="20" width="1.02" height="1.02" fill="#0038ff"/><rect x="62" y="21" width="1.02" height="1.02" fill="#007fff"/><rect x="62" y="22" width="1.02" height="1.02" fill="#0039ff"/><rect x="62" y="23" width="1.02" height="1.02" fill="#0061ff"/><rect x="62" y="24" width="1.02" height="1.02" fill="#0053ff"/><rect x="62" y="25" width="1.02" height="1.02" fill="#0021ff"/><rect x="62" y="26" width="1.02" height="1.02" fill="#006fff"/><rect x="62" y="27" width="1.02" height="1.02" fill="#004aff"/><rect x="62" y="28" width="1.02" height="1.02" fill="#009dff"/><rect x="62" y="29" width="1.02" height="1.02" fill="#005dff"/><rect x="62" y="30" width="1.02" height="1.02" fill="#009bff"/><rect x="62" y="31" width="1.02" height="1.02" fill="#0066ff"/><rect x="62" y="32" width="1.02" height="1.02" fill="#001bff"/><rect x="62" y="33" width="1.02" height="1.02" fill="#00ffcb"/><rect x="62" y="34" width="1.02" height="1.02" fill="#009dff"/><rect x="62" y="35" width="1.02" height="1.02" fill="#0050ff"/><rect x="62" y="36" width="1.02" height="1.02" fill="#0081ff"/><rect x="62" y="37" width="1.02" height="1.02" fill="#0056ff"/><rect x="62" y="38" width="1.02" height="1.02" fill="#0072ff"/><rect x="62" y="39" width="1.02" height="1.02" fill="#0058ff"/><rect x="62" y="40" width="1.02" height="1.02" fill="#0095ff"/><rect x="62" y="41" width="1.02" height="1.02" fill="#002fff"/><rect x="62" y="42" width="1.02" height="1.02" fill="#0083ff"/><rect x="62" y="43" width="1.02" height="1.02" fill="#007fff"/><rect x="62" y="44" width="1.02" height="1.02" fill="#00a5ff"/><rect x="62" y="45" width="1.02" height="1.02" fill="#005aff"/><rect x="62" y="46" width="1.02" height="1.02" fill="#0094ff"/><rect x="62" y="47" width="1.02" height="1.02" fill="#0071ff"/><rect x="62" y="48" width="1.02" height="1.02" fill="#0093ff"/><rect x="62" y="49" width="1.02" height="1.02" fill="#00acff"/><rect x="62" y="50" width="1.02" height="1.02" fill="#00e5ff"/><rect x="62" y="51" width="1.02" height="1.02" fill="#00ff9a"/><rect x="62" y="52" width="1.02" height="1.02" fill="#005bff"/><rect x="62" y="53" width="1.02" height="1.02" fill="#007eff"/><rect x="62" y="54" width="1.02" height="1.02" fill="#0099ff"/><rect x="62" y="55" width="1.02" height="1.02" fill="#0059ff"/><rect x="62" y="56" width="1.02" height="1.02" fill="#00a1ff"/><rect x="62" y="57" width="1.02" height="1.02" fill="#004cff"/><rect x="62" y="58" width="1.02" height="1.02" fill="#00b5ff"/><rect x="62" y="59" width="1.02" height="1.02" fill="#0051ff"/><rect x="62" y="60" width="1.02" height="1.02" fill="#0066ff"/><rect x="62" y="61" width="1.02" height="1.02" fill="#0089ff"/><rect x="62" y="62" width="1.02" height="1.02" fill="#00c4ff"/><rect x="62" y="63" width="1.02" height="1.02" fill="#009bff"/><rect x="63" y="0" width="1.02" height="1.02" fill="#0066ff"/><rect x="63" y="1" width="1.02" height="1.02" fill="#0c00ff"/><rect x="63" y="2" width="1.02" height="1.02" fill="#0008ff"/><rect x="63" y="3" width="1.02" height="1.02" fill="#0400ff"/><rect x="63" y="4" width="1.02" height="1.02" fill="#1400ff"/><rect x="63" y="6" width="1.02" height="1.02" fill="#0300ff"/><rect x="63" y="7" width="1.02" height="1.02" fill="#0500ff"/><rect x="63" y="8" width="1.02" height="1.02" fill="#5300ff"/><rect x="63" y="9" width="1.02" height="1.02" fill="#4000ff"/><rect x="63" y="10" width="1.02" height="1.02" fill="#0008ff"/><rect x="63" y="11" width="1.02" height="1.02" fill="#1d00ff"/><rect x="63" y="12" width="1.02" height="1.02" fill="#4000ff"/><rect x="63" y="13" width="1.02" height="1.02" fill="#4200ff"/><rect x="63" y="14" width="1.02" height="1.02" fill="#2700ff"/><rect x="63" y="15" width="1.02" height="1.02" fill="#5000ff"/><rect x="63" y="16" width="1.02" height="1.02" fill="#000aff"/><rect x="63" y="17" width="1.02" height="1.02" fill="#000dff"/><rect x="63" y="18" width="1.02" height="1.02" fill="#4700ff"/><rect x="63" y="19" width="1.02" height="1.02" fill="#0044ff"/><rect x="63" y="20" width="1.02" height="1.02" fill="#4600ff"/><rect x="63" y="21" width="1.02" height="1.02" fill="#4300ff"/><rect x="63" y="22" width="1.02" height="1.02" fill="#0200ff"/><rect x="63" y="23" width="1.02" height="1.02" fill="#4000ff"/><rect x="63" y="24" width="1.02" height="1.02" fill="#2b00ff"/><rect x="63" y="25" width="1.02" height="1.02" fill="#2300ff"/><rect x="63" y="26" width="1.02" height="1.02" fill="#0025ff"/><rect x="63" y="27" width="1.02" height="1.02" fill="#0011ff"/><rect x="63" y="28" width="1.02" height="1.02" fill="#0a00ff"/><rect x="63" y="29" width="1.02" height="1.02" fill="#1d00ff"/><rect x="63" y="30" width="1.02" height="1.02" fill="#0002ff"/><rect x="63" y="31" width="1.02" height="1.02" fill="#0700ff"/><rect x="63" y="32" width="1.02" height="1.02" fill="#0400ff"/><rect x="63" y="33" width="1.02" height="1.02" fill="#3c00ff"/><rect x="63" y="34" width="1.02" height="1.02" fill="#0600ff"/><rect x="63" y="35" width="1.02" height="1.02" fill="#0092ff"/><rect x="63" y="36" width="1.02" height="1.02" fill="#0600ff"/><rect x="63" y="37" width="1.02" height="1.02" fill="#0007ff"/><rect x="63" y="38" width="1.02" height="1.02" fill="#2100ff"/><rect x="63" y="39" width="1.02" height="1.02" fill="#000eff"/><rect x="63" y="40" width="1.02" height="1.02" fill="#4200ff"/><rect x="63" y="41" width="1.02" height="1.02" fill="#0000ff"/><rect x="63" y="42" width="1.02" height="1.02" fill="#0026ff"/><rect x="63" y="43" width="1.02" height="1.02" fill="#3100ff"/><rect x="63" y="44" width="1.02" height="1.02" fill="#001dff"/><rect x="63" y="45" width="1.02" height="1.02" fill="#0200ff"/><rect x="63" y="46" width="1.02" height="1.02" fill="#000bff"/><rect x="63" y="47" width="1.02" height="1.02" fill="#1500ff"/><rect x="63" y="48" width="1.02" height="1.02" fill="#1300ff"/><rect x="63" y="49" width="1.02" height="1.02" fill="#0008ff"/><rect x="63" y="50" width="1.02" height="1.02" fill="#4100ff"/><rect x="63" y="51" width="1.02" height="1.02" fill="#0000ff"/><rect x="63" y="52" width="1.02" height="1.02" fill="#0024ff"/><rect x="63" y="53" width="1.02" height="1.02" fill="#0c00ff"/><rect x="63" y="54" width="1.02" height="1.02" fill="#2300ff"/><rect x="63" y="55" width="1.02" height="1.02" fill="#5000ff"/><rect x="63" y="56" width="1.02" height="1.02" fill="#0078ff"/><rect x="63" y="57" width="1.02" height="1.02" fill="#0500ff"/><rect x="63" y="58" width="1.02" height="1.02" fill="#001eff"/><rect x="63" y="59" width="1.02" height="1.02" fill="#002cff"/><rect x="63" y="60" width="1.02" height="1.02" fill="#0a00ff"/><rect x="63" y="61" width="1.02" height="1.02" fill="#4a00ff"/><rect x="63" y="62" width="1.02" height="1.02" fill="#0015ff"/><rect x="63" y="63" width="1.02" height="1.02" fill="#0e00ff"/><rect x="64" y="0" width="1.02" height="1.02" fill="#3300ff"/><rect x="64" y="1" width="1.02" height="1.02" fill="#5700ff"/><rect x="64" y="2" width="1.02" height="1.02" fill="#3000ff"/><rect x="64" y="3" width="1.02" height="1.02" fill="#1200ff"/><rect x="64" y="4" width="1.02" height="1.02" fill="#0044ff"/><rect x="64" y="5" width="1.02" height="1.02" fill="#4c00ff"/><rect x="64" y="6" width="1.02" height="1.02" fill="#1900ff"/><rect x="64" y="7" width="1.02" height="1.02" fill="#3400ff"/><rect x="64" y="8" width="1.02" height="1.02" fill="#3d00ff"/><rect x="64" y="9" width="1.02" height="1.02" fill="#1200ff"/><rect x="64" y="12" width="1.02" height="1.02" fill="#1700ff"/><rect x="64" y="13" width="1.02" height="1.02" fill="#2900ff"/><rect x="64" y="14" width="1.02" height="1.02" fill="#0016ff"/><rect x="64" y="16" width="1.02" height="1.02" fill="#3100ff"/><rect x="64" y="19" width="1.02" height="1.02" fill="#0f00ff"/><rect x="64" y="20" width="1.02" height="1.02" fill="#4d00ff"/><rect x="64" y="21" width="1.02" height="1.02" fill="#3600ff"/><rect x="64" y="22" width="1.02" height="1.02" fill="#2600ff"/><rect x="64" y="23" width="1.02" height="1.02" fill="#2f00ff"/><rect x="64" y="24" width="1.02" height="1.02" fill="#2200ff"/><rect x="64" y="25" width="1.02" height="1.02" fill="#5100ff"/><rect x="64" y="26" width="1.02" height="1.02" fill="#1700ff"/><rect x="64" y="27" width="1.02" height="1.02" fill="#1500ff"/><rect x="64" y="28" width="1.02" height="1.02" fill="#1c00ff"/><rect x="64" y="29" width="1.02" height="1.02" fill="#1d00ff"/><rect x="64" y="30" width="1.02" height="1.02" fill="#1f00ff"/><rect x="64" y="31" width="1.02" height="1.02" fill="#0200ff"/><rect x="64" y="32" width="1.02" height="1.02" fill="#5400ff"/><rect x="64" y="34" width="1.02" height="1.02" fill="#1d00ff"/><rect x="64" y="35" width="1.02" height="1.02" fill="#2c00ff"/><rect x="64" y="36" width="1.02" height="1.02" fill="#2800ff"/><rect x="64" y="37" width="1.02" height="1.02" fill="#3600ff"/><rect x="64" y="38" width="1.02" height="1.02" fill="#5100ff"/><rect x="64" y="39" width="1.02" height="1.02" fill="#0074ff"/><rect x="64" y="40" width="1.02" height="1.02" fill="#2500ff"/><rect x="64" y="42" width="1.02" height="1.02" fill="#2700ff"/><rect x="64" y="43" width="1.02" height="1.02" fill="#2b00ff"/><rect x="64" y="44" width="1.02" height="1.02" fill="#3500ff"/><rect x="64" y="45" width="1.02" height="1.02" fill="#4f00ff"/><rect x="64" y="46" width="1.02" height="1.02" fill="#0600ff"/><rect x="64" y="47" width="1.02" height="1.02" fill="#3d00ff"/><rect x="64" y="48" width="1.02" height="1.02" fill="#1800ff"/><rect x="64" y="49" width="1.02" height="1.02" fill="#3d00ff"/><rect x="64" y="50" width="1.02" height="1.02" fill="#1c00ff"/><rect x="64" y="51" width="1.02" height="1.02" fill="#2b00ff"/><rect x="64" y="52" width="1.02" height="1.02" fill="#1500ff"/><rect x="64" y="53" width="1.02" height="1.02" fill="#0021ff"/><rect x="64" y="54" width="1.02" height="1.02" fill="#3100ff"/><rect x="64" y="55" width="1.02" height="1.02" fill="#1b00ff"/><rect x="64" y="56" width="1.02" height="1.02" fill="#4a00ff"/><rect x="64" y="58" width="1.02" height="1.02" fill="#1000ff"/><rect x="64" y="60" width="1.02" height="1.02" fill="#1700ff"/><rect x="64" y="61" width="1.02" height="1.02" fill="#4100ff"/><rect x="64" y="62" width="1.02" height="1.02" fill="#4c00ff"/><rect x="64" y="63" width="1.02" height="1.02" fill="#0c00ff"/><rect x="65" y="1" width="1.02" height="1.02" fill="#5400ff"/><rect x="65" y="3" width="1.02" height="1.02" fill="#4a00ff"/><rect x="65" y="4" width="1.02" height="1.02" fill="#5100ff"/><rect x="65" y="5" width="1.02" height="1.02" fill="#4e00ff"/><rect x="65" y="6" width="1.02" height="1.02" fill="#5600ff"/><rect x="65" y="7" width="1.02" height="1.02" fill="#4f00ff"/><rect x="65" y="8" width="1.02" height="1.02" fill="#4900ff"/><rect x="65" y="9" width="1.02" height="1.02" fill="#5600ff"/><rect x="65" y="10" width="1.02" height="1.02" fill="#4100ff"/><rect x="65" y="13" width="1.02" height="1.02" fill="#4700ff"/><rect x="65" y="14" width="1.02" height="1.02" fill="#0008ff"/><rect x="65" y="15" width="1.02" height="1.02" fill="#3a00ff"/><rect x="65" y="16" width="1.02" height="1.02" fill="#2f00ff"/><rect x="65" y="17" width="1.02" height="1.02" fill="#5200ff"/><rect x="65" y="18" width="1.02" height="1.02" fill="#0016ff"/><rect x="65" y="19" width="1.02" height="1.02" fill="#4d00ff"/><rect x="65" y="20" width="1.02" height="1.02" fill="#0a00ff"/><rect x="65" y="21" width="1.02" height="1.02" fill="#4700ff"/><rect x="65" y="22" width="1.02" height="1.02" fill="#3500ff"/><rect x="65" y="24" width="1.02" height="1.02" fill="#4700ff"/><rect x="65" y="25" width="1.02" height="1.02" fill="#5800ff"/><rect x="65" y="26" width="1.02" height="1.02" fill="#4800ff"/><rect x="65" y="27" width="1.02" height="1.02" fill="#4900ff"/><rect x="65" y="28" width="1.02" height="1.02" fill="#5400ff"/><rect x="65" y="31" width="1.02" height="1.02" fill="#3e00ff"/><rect x="65" y="32" width="1.02" height="1.02" fill="#5400ff"/><rect x="65" y="33" width="1.02" height="1.02" fill="#000aff"/><rect x="65" y="34" width="1.02" height="1.02" fill="#5400ff"/><rect x="65" y="35" width="1.02" height="1.02" fill="#4900ff"/><rect x="65" y="36" width="1.02" height="1.02" fill="#2500ff"/><rect x="65" y="37" width="1.02" height="1.02" fill="#3700ff"/><rect x="65" y="40" width="1.02" height="1.02" fill="#0002ff"/><rect x="65" y="42" width="1.02" height="1.02" fill="#2800ff"/><rect x="65" y="43" width="1.02" height="1.02" fill="#4700ff"/><rect x="65" y="44" width="1.02" height="1.02" fill="#2700ff"/><rect x="65" y="45" width="1.02" height="1.02" fill="#1000ff"/><rect x="65" y="46" width="1.02" height="1.02" fill="#5600ff"/><rect x="65" y="47" width="1.02" height="1.02" fill="#1e00ff"/><rect x="65" y="48" width="1.02" height="1.02" fill="#3100ff"/><rect x="65" y="49" width="1.02" height="1.02" fill="#3200ff"/><rect x="65" y="50" width="1.02" height="1.02" fill="#3f00ff"/><rect x="65" y="51" width="1.02" height="1.02" fill="#4600ff"/><rect x="65" y="53" width="1.02" height="1.02" fill="#2500ff"/><rect x="65" y="54" width="1.02" height="1.02" fill="#4d00ff"/><rect x="65" y="55" width="1.02" height="1.02" fill="#3300ff"/><rect x="65" y="56" width="1.02" height="1.02" fill="#4900ff"/><rect x="65" y="57" width="1.02" height="1.02" fill="#2d00ff"/><rect x="65" y="59" width="1.02" height="1.02" fill="#0004ff"/><rect x="65" y="60" width="1.02" height="1.02" fill="#2b00ff"/><rect x="65" y="61" width="1.02" height="1.02" fill="#5800ff"/><rect x="65" y="62" width="1.02" height="1.02" fill="#4e00ff"/><rect x="65" y="63" width="1.02" height="1.02" fill="#2900ff"/><rect x="66" y="0" width="1.02" height="1.02" fill="#5200ff"/><rect x="66" y="1" width="1.02" height="1.02" fill="#1c00ff"/><rect x="66" y="5" width="1.02" height="1.02" fill="#0700ff"/><rect x="66" y="6" width="1.02" height="1.02" fill="#1d00ff"/><rect x="66" y="7" width="1.02" height="1.02" fill="#5400ff"/><rect x="66" y="12" width="1.02" height="1.02" fill="#5300ff"/><rect x="66" y="15" width="1.02" height="1.02" fill="#4e00ff"/><rect x="66" y="17" width="1.02" height="1.02" fill="#4e00ff"/><rect x="66" y="18" width="1.02" height="1.02" fill="#5600ff"/><rect x="66" y="19" width="1.02" height="1.02" fill="#4300ff"/><rect x="66" y="20" width="1.02" height="1.02" fill="#2d00ff"/><rect x="66" y="22" width="1.02" height="1.02" fill="#4f00ff"/><rect x="66" y="23" width="1.02" height="1.02" fill="#4b00ff"/><rect x="66" y="24" width="1.02" height="1.02" fill="#0011ff"/><rect x="66" y="25" width="1.02" height="1.02" fill="#4900ff"/><rect x="66" y="26" width="1.02" height="1.02" fill="#5500ff"/><rect x="66" y="27" width="1.02" height="1.02" fill="#4c00ff"/><rect x="66" y="28" width="1.02" height="1.02" fill="#4300ff"/><rect x="66" y="29" width="1.02" height="1.02" fill="#4600ff"/><rect x="66" y="31" width="1.02" height="1.02" fill="#5500ff"/><rect x="66" y="32" width="1.02" height="1.02" fill="#5900ff"/><rect x="66" y="35" width="1.02" height="1.02" fill="#4200ff"/><rect x="66" y="37" width="1.02" height="1.02" fill="#4800ff"/><rect x="66" y="38" width="1.02" height="1.02" fill="#5700ff"/><rect x="66" y="42" width="1.02" height="1.02" fill="#5100ff"/><rect x="66" y="43" width="1.02" height="1.02" fill="#4400ff"/><rect x="66" y="44" width="1.02" height="1.02" fill="#1200ff"/><rect x="66" y="45" width="1.02" height="1.02" fill="#4d00ff"/><rect x="66" y="47" width="1.02" height="1.02" fill="#1a00ff"/><rect x="66" y="48" width="1.02" height="1.02" fill="#5800ff"/><rect x="66" y="49" width="1.02" height="1.02" fill="#5400ff"/><rect x="66" y="51" width="1.02" height="1.02" fill="#1700ff"/><rect x="66" y="52" width="1.02" height="1.02" fill="#4b00ff"/><rect x="66" y="53" width="1.02" height="1.02" fill="#5300ff"/><rect x="66" y="54" width="1.02" height="1.02" fill="#1000ff"/><rect x="66" y="55" width="1.02" height="1.02" fill="#4400ff"/><rect x="66" y="56" width="1.02" height="1.02" fill="#4500ff"/><rect x="66" y="57" width="1.02" height="1.02" fill="#3e00ff"/><rect x="66" y="59" width="1.02" height="1.02" fill="#4d00ff"/><rect x="66" y="61" width="1.02" height="1.02" fill="#3d00ff"/><rect x="67" y="2" width="1.02" height="1.02" fill="#5800ff"/><rect x="67" y="5" width="1.02" height="1.02" fill="#5800ff"/><rect x="67" y="6" width="1.02" height="1.02" fill="#4400ff"/><rect x="67" y="13" width="1.02" height="1.02" fill="#5800ff"/><rect x="67" y="16" width="1.02" height="1.02" fill="#0100ff"/><rect x="67" y="22" width="1.02" height="1.02" fill="#2e00ff"/><rect x="67" y="26" width="1.02" height="1.02" fill="#2d00ff"/><rect x="67" y="27" width="1.02" height="1.02" fill="#5900ff"/><rect x="67" y="28" width="1.02" height="1.02" fill="#0e00ff"/><rect x="67" y="30" width="1.02" height="1.02" fill="#3b00ff"/><rect x="67" y="31" width="1.02" height="1.02" fill="#5600ff"/><rect x="67" y="33" width="1.02" height="1.02" fill="#5800ff"/><rect x="67" y="34" width="1.02" height="1.02" fill="#5800ff"/><rect x="67" y="37" width="1.02" height="1.02" fill="#5a00ff"/><rect x="67" y="40" width="1.02" height="1.02" fill="#5a00ff"/><rect x="67" y="43" width="1.02" height="1.02" fill="#5700ff"/><rect x="67" y="51" width="1.02" height="1.02" fill="#5400ff"/><rect x="67" y="53" width="1.02" height="1.02" fill="#1800ff"/><rect x="67" y="54" width="1.02" height="1.02" fill="#5600ff"/><rect x="67" y="56" width="1.02" height="1.02" fill="#5400ff"/><rect x="67" y="58" width="1.02" height="1.02" fill="#5700ff"/><rect x="67" y="60" width="1.02" height="1.02" fill="#5a00ff"/><rect x="67" y="63" width="1.02" height="1.02" fill="#3000ff"/><rect x="68" y="15" width="1.02" height="1.02" fill="#3800ff"/><rect x="68" y="17" width="1.02" height="1.02" fill="#3f00ff"/><rect x="68" y="23" width="1.02" height="1.02" fill="#3900ff"/><rect x="68" y="28" width="1.02" height="1.02" fill="#1e00ff"/><rect x="68" y="29" width="1.02" height="1.02" fill="#4300ff"/><rect x="68" y="40" width="1.02" height="1.02" fill="#4700ff"/><rect x="68" y="57" width="1.02" height="1.02" fill="#1300ff"/><rect x="69" y="20" width="1.02" height="1.02" fill="#2100ff"/><rect x="69" y="21" width="1.02" height="1.02" fill="#4900ff"/><rect x="69" y="28" width="1.02" height="1.02" fill="#0f00ff"/><rect x="69" y="29" width="1.02" height="1.02" fill="#3100ff"/><rect x="69" y="37" width="1.02" height="1.02" fill="#1a00ff"/><rect x="69" y="40" width="1.02" height="1.02" fill="#3f00ff"/><rect x="69" y="46" width="1.02" height="1.02" fill="#4900ff"/><rect x="69" y="47" width="1.02" height="1.02" fill="#4400ff"/><rect x="69" y="49" width="1.02" height="1.02" fill="#2900ff"/><rect x="70" y="1" width="1.02" height="1.02" fill="#4f00ff"/><rect x="70" y="8" width="1.02" height="1.02" fill="#5800ff"/><rect x="70" y="9" width="1.02" height="1.02" fill="#2700ff"/><rect x="70" y="19" width="1.02" height="1.02" fill="#3f00ff"/><rect x="70" y="23" width="1.02" height="1.02" fill="#1b00ff"/><rect x="70" y="27" width="1.02" height="1.02" fill="#3d00ff"/><rect x="70" y="37" width="1.02" height="1.02" fill="#4100ff"/><rect x="70" y="51" width="1.02" height="1.02" fill="#0d00ff"/><rect x="71" y="26" width="1.02" height="1.02" fill="#3e00ff"/><rect x="71" y="37" width="1.02" height="1.02" fill="#1500ff"/><rect x="71" y="49" width="1.02" height="1.02" fill="#1700ff"/><rect x="71" y="56" width="1.02" height="1.02" fill="#3d00ff"/><rect x="71" y="61" width="1.02" height="1.02" fill="#5200ff"/><rect x="72" y="1" width="1.02" height="1.02" fill="#1b00ff"/><rect x="72" y="16" width="1.02" height="1.02" fill="#2b00ff"/><rect x="72" y="51" width="1.02" height="1.02" fill="#4000ff"/><rect x="72" y="61" width="1.02" height="1.02" fill="#1e00ff"/><rect x="73" y="2" width="1.02" height="1.02" fill="#4f00ff"/><rect x="73" y="14" width="1.02" height="1.02" fill="#1700ff"/><rect x="73" y="42" width="1.02" height="1.02" fill="#2c00ff"/><rect x="73" y="47" width="1.02" height="1.02" fill="#2400ff"/><rect x="73" y="49" width="1.02" height="1.02" fill="#4000ff"/><rect x="73" y="57" width="1.02" height="1.02" fill="#3d00ff"/><rect x="74" y="3" width="1.02" height="1.02" fill="#5200ff"/><rect x="74" y="8" width="1.02" height="1.02" fill="#3a00ff"/><rect x="74" y="10" width="1.02" height="1.02" fill="#2900ff"/><rect x="74" y="15" width="1.02" height="1.02" fill="#2100ff"/><rect x="74" y="24" width="1.02" height="1.02" fill="#5800ff"/><rect x="74" y="41" width="1.02" height="1.02" fill="#5800ff"/><rect x="74" y="48" width="1.02" height="1.02" fill="#1700ff"/><rect x="74" y="52" width="1.02" height="1.02" fill="#2a00ff"/><rect x="75" y="19" width="1.02" height="1.02" fill="#4b00ff"/><rect x="75" y="40" width="1.02" height="1.02" fill="#2100ff"/><rect x="76" y="4" width="1.02" height="1.02" fill="#2a00ff"/><rect x="76" y="12" width="1.02" height="1.02" fill="#3400ff"/><rect x="76" y="34" width="1.02" height="1.02" fill="#3c00ff"/><rect x="76" y="39" width="1.02" height="1.02" fill="#4500ff"/><rect x="76" y="44" width="1.02" height="1.02" fill="#3e00ff"/><rect x="76" y="52" width="1.02" height="1.02" fill="#1500ff"/><rect x="76" y="58" width="1.02" height="1.02" fill="#1f00ff"/><rect x="77" y="5" width="1.02" height="1.02" fill="#2c00ff"/><rect x="77" y="12" width="1.02" height="1.02" fill="#3f00ff"/><rect x="77" y="33" width="1.02" height="1.02" fill="#1c00ff"/><rect x="77" y="37" width="1.02" height="1.02" fill="#2200ff"/><rect x="78" y="1" width="1.02" height="1.02" fill="#2500ff"/><rect x="78" y="6" width="1.02" height="1.02" fill="#4c00ff"/><rect x="78" y="23" width="1.02" height="1.02" fill="#2a00ff"/><rect x="78" y="27" width="1.02" height="1.02" fill="#1400ff"/><rect x="80" y="7" width="1.02" height="1.02" fill="#3f00ff"/><rect x="80" y="21" width="1.02" height="1.02" fill="#5800ff"/><rect x="81" y="12" width="1.02" height="1.02" fill="#2800ff"/><rect x="81" y="49" width="1.02" height="1.02" fill="#4a00ff"/><rect x="81" y="59" width="1.02" height="1.02" fill="#2f00ff"/><rect x="82" y="25" width="1.02" height="1.02" fill="#4c00ff"/><rect x="82" y="27" width="1.02" height="1.02" fill="#3800ff"/><rect x="82" y="34" width="1.02" height="1.02" fill="#5000ff"/><rect x="82" y="43" width="1.02" height="1.02" fill="#1e00ff"/><rect x="82" y="46" width="1.02" height="1.02" fill="#4d00ff"/><rect x="82" y="53" width="1.02" height="1.02" fill="#5500ff"/><rect x="83" y="17" width="1.02" height="1.02" fill="#1c00ff"/><rect x="83" y="20" width="1.02" height="1.02" fill="#4200ff"/><rect x="83" y="36" width="1.02" height="1.02" fill="#2f00ff"/><rect x="83" y="41" width="1.02" height="1.02" fill="#1b00ff"/><rect x="83" y="56" width="1.02" height="1.02" fill="#2b00ff"/><rect x="83" y="61" width="1.02" height="1.02" fill="#3200ff"/><rect x="84" y="0" width="1.02" height="1.02" fill="#4300ff"/><rect x="84" y="1" width="1.02" height="1.02" fill="#4300ff"/><rect x="84" y="4" width="1.02" height="1.02" fill="#5a00ff"/><rect x="84" y="6" width="1.02" height="1.02" fill="#4b00ff"/><rect x="84" y="9" width="1.02" height="1.02" fill="#3300ff"/><rect x="84" y="11" width="1.02" height="1.02" fill="#4d00ff"/><rect x="84" y="14" width="1.02" height="1.02" fill="#4100ff"/><rect x="84" y="15" width="1.02" height="1.02" fill="#3f00ff"/><rect x="84" y="17" width="1.02" height="1.02" fill="#5500ff"/><rect x="84" y="18" width="1.02" height="1.02" fill="#5700ff"/><rect x="84" y="20" width="1.02" height="1.02" fill="#3b00ff"/><rect x="84" y="21" width="1.02" height="1.02" fill="#5200ff"/><rect x="84" y="26" width="1.02" height="1.02" fill="#4f00ff"/><rect x="84" y="27" width="1.02" height="1.02" fill="#3d00ff"/><rect x="84" y="29" width="1.02" height="1.02" fill="#4800ff"/><rect x="84" y="35" width="1.02" height="1.02" fill="#3300ff"/><rect x="84" y="36" width="1.02" height="1.02" fill="#5600ff"/><rect x="84" y="42" width="1.02" height="1.02" fill="#5400ff"/><rect x="84" y="43" width="1.02" height="1.02" fill="#3c00ff"/><rect x="84" y="44" width="1.02" height="1.02" fill="#3f00ff"/><rect x="84" y="45" width="1.02" height="1.02" fill="#3800ff"/><rect x="84" y="47" width="1.02" height="1.02" fill="#3b00ff"/><rect x="84" y="48" width="1.02" height="1.02" fill="#4b00ff"/><rect x="84" y="52" width="1.02" height="1.02" fill="#4d00ff"/><rect x="84" y="53" width="1.02" height="1.02" fill="#5600ff"/><rect x="84" y="54" width="1.02" height="1.02" fill="#3a00ff"/><rect x="84" y="55" width="1.02" height="1.02" fill="#3700ff"/><rect x="84" y="56" width="1.02" height="1.02" fill="#4800ff"/><rect x="84" y="57" width="1.02" height="1.02" fill="#4d00ff"/><rect x="84" y="59" width="1.02" height="1.02" fill="#4000ff"/><rect x="84" y="60" width="1.02" height="1.02" fill="#4d00ff"/><rect x="84" y="62" width="1.02" height="1.02" fill="#4500ff"/><rect x="84" y="63" width="1.02" height="1.02" fill="#0030ff"/><rect x="85" y="0" width="1.02" height="1.02" fill="#4400ff"/><rect x="85" y="1" width="1.02" height="1.02" fill="#1900ff"/><rect x="85" y="2" width="1.02" height="1.02" fill="#0d00ff"/><rect x="85" y="3" width="1.02" height="1.02" fill="#2600ff"/><rect x="85" y="4" width="1.02" height="1.02" fill="#0100ff"/><rect x="85" y="5" width="1.02" height="1.02" fill="#0400ff"/><rect x="85" y="8" width="1.02" height="1.02" fill="#2500ff"/><rect x="85" y="9" width="1.02" height="1.02" fill="#0030ff"/><rect x="85" y="11" width="1.02" height="1.02" fill="#1700ff"/><rect x="85" y="14" width="1.02" height="1.02" fill="#2c00ff"/><rect x="85" y="15" width="1.02" height="1.02" fill="#1e00ff"/><rect x="85" y="16" width="1.02" height="1.02" fill="#2f00ff"/><rect x="85" y="19" width="1.02" height="1.02" fill="#1200ff"/><rect x="85" y="20" width="1.02" height="1.02" fill="#0009ff"/><rect x="85" y="22" width="1.02" height="1.02" fill="#3100ff"/><rect x="85" y="23" width="1.02" height="1.02" fill="#1c00ff"/><rect x="85" y="24" width="1.02" height="1.02" fill="#0100ff"/><rect x="85" y="25" width="1.02" height="1.02" fill="#5300ff"/><rect x="85" y="27" width="1.02" height="1.02" fill="#2500ff"/><rect x="85" y="28" width="1.02" height="1.02" fill="#1d00ff"/><rect x="85" y="29" width="1.02" height="1.02" fill="#2b00ff"/><rect x="85" y="30" width="1.02" height="1.02" fill="#5300ff"/><rect x="85" y="31" width="1.02" height="1.02" fill="#3400ff"/><rect x="85" y="34" width="1.02" height="1.02" fill="#2f00ff"/><rect x="85" y="35" width="1.02" height="1.02" fill="#2500ff"/><rect x="85" y="37" width="1.02" height="1.02" fill="#001aff"/><rect x="85" y="38" width="1.02" height="1.02" fill="#4c00ff"/><rect x="85" y="39" width="1.02" height="1.02" fill="#4700ff"/><rect x="85" y="41" width="1.02" height="1.02" fill="#4800ff"/><rect x="85" y="42" width="1.02" height="1.02" fill="#3f00ff"/><rect x="85" y="43" width="1.02" height="1.02" fill="#1f00ff"/><rect x="85" y="46" width="1.02" height="1.02" fill="#5200ff"/><rect x="85" y="47" width="1.02" height="1.02" fill="#3500ff"/><rect x="85" y="48" width="1.02" height="1.02" fill="#5400ff"/><rect x="85" y="49" width="1.02" height="1.02" fill="#5900ff"/><rect x="85" y="55" width="1.02" height="1.02" fill="#2800ff"/><rect x="85" y="56" width="1.02" height="1.02" fill="#4a00ff"/><rect x="85" y="57" width="1.02" height="1.02" fill="#4c00ff"/><rect x="85" y="58" width="1.02" height="1.02" fill="#1b00ff"/><rect x="85" y="60" width="1.02" height="1.02" fill="#1300ff"/><rect x="85" y="61" width="1.02" height="1.02" fill="#0200ff"/><rect x="86" y="0" width="1.02" height="1.02" fill="#0030ff"/><rect x="86" y="1" width="1.02" height="1.02" fill="#3300ff"/><rect x="86" y="2" width="1.02" height="1.02" fill="#0600ff"/><rect x="86" y="3" width="1.02" height="1.02" fill="#3500ff"/><rect x="86" y="4" width="1.02" height="1.02" fill="#0f00ff"/><rect x="86" y="5" width="1.02" height="1.02" fill="#0500ff"/><rect x="86" y="6" width="1.02" height="1.02" fill="#2600ff"/><rect x="86" y="7" width="1.02" height="1.02" fill="#1d00ff"/><rect x="86" y="9" width="1.02" height="1.02" fill="#0037ff"/><rect x="86" y="12" width="1.02" height="1.02" fill="#0100ff"/><rect x="86" y="13" width="1.02" height="1.02" fill="#2f00ff"/><rect x="86" y="14" width="1.02" height="1.02" fill="#0a00ff"/><rect x="86" y="15" width="1.02" height="1.02" fill="#002bff"/><rect x="86" y="16" width="1.02" height="1.02" fill="#2d00ff"/><rect x="86" y="17" width="1.02" height="1.02" fill="#002dff"/><rect x="86" y="18" width="1.02" height="1.02" fill="#0029ff"/><rect x="86" y="19" width="1.02" height="1.02" fill="#3d00ff"/><rect x="86" y="20" width="1.02" height="1.02" fill="#3700ff"/><rect x="86" y="21" width="1.02" height="1.02" fill="#4800ff"/><rect x="86" y="22" width="1.02" height="1.02" fill="#0600ff"/><rect x="86" y="23" width="1.02" height="1.02" fill="#0036ff"/><rect x="86" y="24" width="1.02" height="1.02" fill="#1100ff"/><rect x="86" y="25" width="1.02" height="1.02" fill="#003cff"/><rect x="86" y="26" width="1.02" height="1.02" fill="#0010ff"/><rect x="86" y="27" width="1.02" height="1.02" fill="#0800ff"/><rect x="86" y="28" width="1.02" height="1.02" fill="#4200ff"/><rect x="86" y="29" width="1.02" height="1.02" fill="#2a00ff"/><rect x="86" y="30" width="1.02" height="1.02" fill="#0029ff"/><rect x="86" y="31" width="1.02" height="1.02" fill="#0026ff"/><rect x="86" y="33" width="1.02" height="1.02" fill="#001dff"/><rect x="86" y="34" width="1.02" height="1.02" fill="#1900ff"/><rect x="86" y="35" width="1.02" height="1.02" fill="#1d00ff"/><rect x="86" y="36" width="1.02" height="1.02" fill="#002fff"/><rect x="86" y="38" width="1.02" height="1.02" fill="#0004ff"/><rect x="86" y="39" width="1.02" height="1.02" fill="#0031ff"/><rect x="86" y="42" width="1.02" height="1.02" fill="#5600ff"/><rect x="86" y="43" width="1.02" height="1.02" fill="#1700ff"/><rect x="86" y="44" width="1.02" height="1.02" fill="#002eff"/><rect x="86" y="45" width="1.02" height="1.02" fill="#0c00ff"/><rect x="86" y="46" width="1.02" height="1.02" fill="#2600ff"/><rect x="86" y="47" width="1.02" height="1.02" fill="#0034ff"/><rect x="86" y="48" width="1.02" height="1.02" fill="#0800ff"/><rect x="86" y="49" width="1.02" height="1.02" fill="#0013ff"/><rect x="86" y="50" width="1.02" height="1.02" fill="#4700ff"/><rect x="86" y="51" width="1.02" height="1.02" fill="#1800ff"/><rect x="86" y="53" width="1.02" height="1.02" fill="#5500ff"/><rect x="86" y="54" width="1.02" height="1.02" fill="#3800ff"/><rect x="86" y="55" width="1.02" height="1.02" fill="#0022ff"/><rect x="86" y="56" width="1.02" height="1.02" fill="#0011ff"/><rect x="86" y="57" width="1.02" height="1.02" fill="#0600ff"/><rect x="86" y="58" width="1.02" height="1.02" fill="#2200ff"/><rect x="86" y="59" width="1.02" height="1.02" fill="#1400ff"/><rect x="86" y="62" width="1.02" height="1.02" fill="#3200ff"/><rect x="86" y="63" width="1.02" height="1.02" fill="#0050ff"/><rect x="87" y="0" width="1.02" height="1.02" fill="#3b00ff"/><rect x="87" y="1" width="1.02" height="1.02" fill="#004fff"/><rect x="87" y="2" width="1.02" height="1.02" fill="#0006ff"/><rect x="87" y="3" width="1.02" height="1.02" fill="#0013ff"/><rect x="87" y="4" width="1.02" height="1.02" fill="#4400ff"/><rect x="87" y="5" width="1.02" height="1.02" fill="#0001ff"/><rect x="87" y="6" width="1.02" height="1.02" fill="#4800ff"/><rect x="87" y="8" width="1.02" height="1.02" fill="#4100ff"/><rect x="87" y="9" width="1.02" height="1.02" fill="#3200ff"/><rect x="87" y="10" width="1.02" height="1.02" fill="#0042ff"/><rect x="87" y="11" width="1.02" height="1.02" fill="#4b00ff"/><rect x="87" y="12" width="1.02" height="1.02" fill="#1600ff"/><rect x="87" y="14" width="1.02" height="1.02" fill="#001cff"/><rect x="87" y="16" width="1.02" height="1.02" fill="#0b00ff"/><rect x="87" y="17" width="1.02" height="1.02" fill="#2000ff"/><rect x="87" y="19" width="1.02" height="1.02" fill="#5000ff"/><rect x="87" y="20" width="1.02" height="1.02" fill="#0017ff"/><rect x="87" y="21" width="1.02" height="1.02" fill="#3700ff"/><rect x="87" y="22" width="1.02" height="1.02" fill="#1d00ff"/><rect x="87" y="23" width="1.02" height="1.02" fill="#001eff"/><rect x="87" y="25" width="1.02" height="1.02" fill="#002bff"/><rect x="87" y="27" width="1.02" height="1.02" fill="#2800ff"/><rect x="87" y="29" width="1.02" height="1.02" fill="#1400ff"/><rect x="87" y="30" width="1.02" height="1.02" fill="#3600ff"/><rect x="87" y="31" width="1.02" height="1.02" fill="#002eff"/><rect x="87" y="32" width="1.02" height="1.02" fill="#3200ff"/><rect x="87" y="33" width="1.02" height="1.02" fill="#001eff"/><rect x="87" y="34" width="1.02" height="1.02" fill="#4500ff"/><rect x="87" y="35" width="1.02" height="1.02" fill="#0042ff"/><rect x="87" y="36" width="1.02" height="1.02" fill="#0200ff"/><rect x="87" y="37" width="1.02" height="1.02" fill="#001cff"/><rect x="87" y="38" width="1.02" height="1.02" fill="#0044ff"/><rect x="87" y="39" width="1.02" height="1.02" fill="#1600ff"/><rect x="87" y="40" width="1.02" height="1.02" fill="#0010ff"/><rect x="87" y="41" width="1.02" height="1.02" fill="#0800ff"/><rect x="87" y="42" width="1.02" height="1.02" fill="#2d00ff"/><rect x="87" y="43" width="1.02" height="1.02" fill="#0021ff"/><rect x="87" y="45" width="1.02" height="1.02" fill="#001eff"/><rect x="87" y="46" width="1.02" height="1.02" fill="#000cff"/><rect x="87" y="47" width="1.02" height="1.02" fill="#3d00ff"/><rect x="87" y="48" width="1.02" height="1.02" fill="#4e00ff"/><rect x="87" y="49" width="1.02" height="1.02" fill="#0013ff"/><rect x="87" y="50" width="1.02" height="1.02" fill="#001dff"/><rect x="87" y="51" width="1.02" height="1.02" fill="#2e00ff"/><rect x="87" y="52" width="1.02" height="1.02" fill="#1f00ff"/><rect x="87" y="53" width="1.02" height="1.02" fill="#1d00ff"/><rect x="87" y="54" width="1.02" height="1.02" fill="#1200ff"/><rect x="87" y="55" width="1.02" height="1.02" fill="#4e00ff"/><rect x="87" y="56" width="1.02" height="1.02" fill="#4900ff"/><rect x="87" y="57" width="1.02" height="1.02" fill="#0051ff"/><rect x="87" y="58" width="1.02" height="1.02" fill="#3f00ff"/><rect x="87" y="59" width="1.02" height="1.02" fill="#0003ff"/><rect x="87" y="60" width="1.02" height="1.02" fill="#5600ff"/><rect x="87" y="61" width="1.02" height="1.02" fill="#0025ff"/><rect x="87" y="62" width="1.02" height="1.02" fill="#0003ff"/><rect x="87" y="63" width="1.02" height="1.02" fill="#0007ff"/><rect x="88" y="0" width="1.02" height="1.02" fill="#5400ff"/><rect x="88" y="1" width="1.02" height="1.02" fill="#1c00ff"/><rect x="88" y="2" width="1.02" height="1.02" fill="#3a00ff"/><rect x="88" y="3" width="1.02" height="1.02" fill="#003eff"/><rect x="88" y="4" width="1.02" height="1.02" fill="#0a00ff"/><rect x="88" y="5" width="1.02" height="1.02" fill="#5100ff"/><rect x="88" y="6" width="1.02" height="1.02" fill="#0800ff"/><rect x="88" y="7" width="1.02" height="1.02" fill="#003dff"/><rect x="88" y="8" width="1.02" height="1.02" fill="#0041ff"/><rect x="88" y="9" width="1.02" height="1.02" fill="#3b00ff"/><rect x="88" y="10" width="1.02" height="1.02" fill="#003eff"/><rect x="88" y="12" width="1.02" height="1.02" fill="#003eff"/><rect x="88" y="13" width="1.02" height="1.02" fill="#0053ff"/><rect x="88" y="14" width="1.02" height="1.02" fill="#0015ff"/><rect x="88" y="15" width="1.02" height="1.02" fill="#4100ff"/><rect x="88" y="16" width="1.02" height="1.02" fill="#0020ff"/><rect x="88" y="18" width="1.02" height="1.02" fill="#0054ff"/><rect x="88" y="19" width="1.02" height="1.02" fill="#0003ff"/><rect x="88" y="20" width="1.02" height="1.02" fill="#2900ff"/><rect x="88" y="21" width="1.02" height="1.02" fill="#0044ff"/><rect x="88" y="22" width="1.02" height="1.02" fill="#4000ff"/><rect x="88" y="23" width="1.02" height="1.02" fill="#0053ff"/><rect x="88" y="24" width="1.02" height="1.02" fill="#0e00ff"/><rect x="88" y="25" width="1.02" height="1.02" fill="#0030ff"/><rect x="88" y="26" width="1.02" height="1.02" fill="#5800ff"/><rect x="88" y="27" width="1.02" height="1.02" fill="#0031ff"/><rect x="88" y="29" width="1.02" height="1.02" fill="#5600ff"/><rect x="88" y="30" width="1.02" height="1.02" fill="#5600ff"/><rect x="88" y="31" width="1.02" height="1.02" fill="#2000ff"/><rect x="88" y="33" width="1.02" height="1.02" fill="#4200ff"/><rect x="88" y="35" width="1.02" height="1.02" fill="#1c00ff"/><rect x="88" y="36" width="1.02" height="1.02" fill="#0038ff"/><rect x="88" y="38" width="1.02" height="1.02" fill="#2600ff"/><rect x="88" y="39" width="1.02" height="1.02" fill="#0400ff"/><rect x="88" y="40" width="1.02" height="1.02" fill="#1900ff"/><rect x="88" y="41" width="1.02" height="1.02" fill="#4e00ff"/><rect x="88" y="42" width="1.02" height="1.02" fill="#1600ff"/><rect x="88" y="43" width="1.02" height="1.02" fill="#1d00ff"/><rect x="88" y="44" width="1.02" height="1.02" fill="#003eff"/><rect x="88" y="45" width="1.02" height="1.02" fill="#1c00ff"/><rect x="88" y="46" width="1.02" height="1.02" fill="#00d2ff"/><rect x="88" y="48" width="1.02" height="1.02" fill="#0035ff"/><rect x="88" y="49" width="1.02" height="1.02" fill="#4600ff"/><rect x="88" y="50" width="1.02" height="1.02" fill="#0017ff"/><rect x="88" y="51" width="1.02" height="1.02" fill="#0042ff"/><rect x="88" y="52" width="1.02" height="1.02" fill="#3700ff"/><rect x="88" y="53" width="1.02" height="1.02" fill="#0000ff"/><rect x="88" y="55" width="1.02" height="1.02" fill="#0042ff"/><rect x="88" y="57" width="1.02" height="1.02" fill="#0021ff"/><rect x="88" y="58" width="1.02" height="1.02" fill="#1700ff"/><rect x="88" y="59" width="1.02" height="1.02" fill="#3700ff"/><rect x="88" y="60" width="1.02" height="1.02" fill="#0006ff"/><rect x="88" y="61" width="1.02" height="1.02" fill="#4a00ff"/><rect x="88" y="62" width="1.02" height="1.02" fill="#000eff"/><rect x="89" y="0" width="1.02" height="1.02" fill="#5500ff"/><rect x="89" y="1" width="1.02" height="1.02" fill="#3b00ff"/><rect x="89" y="2" width="1.02" height="1.02" fill="#4300ff"/><rect x="89" y="4" width="1.02" height="1.02" fill="#3300ff"/><rect x="89" y="5" width="1.02" height="1.02" fill="#5800ff"/><rect x="89" y="6" width="1.02" height="1.02" fill="#0004ff"/><rect x="89" y="9" width="1.02" height="1.02" fill="#0045ff"/><rect x="89" y="11" width="1.02" height="1.02" fill="#2100ff"/><rect x="89" y="12" width="1.02" height="1.02" fill="#2e00ff"/><rect x="89" y="13" width="1.02" height="1.02" fill="#3800ff"/><rect x="89" y="14" width="1.02" height="1.02" fill="#001aff"/><rect x="89" y="15" width="1.02" height="1.02" fill="#0900ff"/><rect x="89" y="16" width="1.02" height="1.02" fill="#001dff"/><rect x="89" y="17" width="1.02" height="1.02" fill="#4000ff"/><rect x="89" y="18" width="1.02" height="1.02" fill="#3900ff"/><rect x="89" y="19" width="1.02" height="1.02" fill="#0051ff"/><rect x="89" y="20" width="1.02" height="1.02" fill="#2900ff"/><rect x="89" y="21" width="1.02" height="1.02" fill="#0d00ff"/><rect x="89" y="22" width="1.02" height="1.02" fill="#0004ff"/><rect x="89" y="23" width="1.02" height="1.02" fill="#001eff"/><rect x="89" y="24" width="1.02" height="1.02" fill="#2800ff"/><rect x="89" y="25" width="1.02" height="1.02" fill="#5500ff"/><rect x="89" y="26" width="1.02" height="1.02" fill="#0022ff"/><rect x="89" y="27" width="1.02" height="1.02" fill="#1800ff"/><rect x="89" y="28" width="1.02" height="1.02" fill="#0008ff"/><rect x="89" y="30" width="1.02" height="1.02" fill="#0019ff"/><rect x="89" y="32" width="1.02" height="1.02" fill="#1900ff"/><rect x="89" y="33" width="1.02" height="1.02" fill="#0034ff"/><rect x="89" y="35" width="1.02" height="1.02" fill="#0046ff"/><rect x="89" y="37" width="1.02" height="1.02" fill="#1200ff"/><rect x="89" y="38" width="1.02" height="1.02" fill="#1a00ff"/><rect x="89" y="39" width="1.02" height="1.02" fill="#00d9ff"/><rect x="89" y="40" width="1.02" height="1.02" fill="#4a00ff"/><rect x="89" y="41" width="1.02" height="1.02" fill="#5300ff"/><rect x="89" y="42" width="1.02" height="1.02" fill="#1200ff"/><rect x="89" y="43" width="1.02" height="1.02" fill="#0028ff"/><rect x="89" y="44" width="1.02" height="1.02" fill="#004cff"/><rect x="89" y="45" width="1.02" height="1.02" fill="#4400ff"/><rect x="89" y="47" width="1.02" height="1.02" fill="#5000ff"/><rect x="89" y="48" width="1.02" height="1.02" fill="#0014ff"/><rect x="89" y="49" width="1.02" height="1.02" fill="#1b00ff"/><rect x="89" y="50" width="1.02" height="1.02" fill="#000dff"/><rect x="89" y="51" width="1.02" height="1.02" fill="#0037ff"/><rect x="89" y="52" width="1.02" height="1.02" fill="#2d00ff"/><rect x="89" y="54" width="1.02" height="1.02" fill="#2400ff"/><rect x="89" y="55" width="1.02" height="1.02" fill="#2900ff"/><rect x="89" y="59" width="1.02" height="1.02" fill="#4000ff"/><rect x="89" y="60" width="1.02" height="1.02" fill="#5300ff"/><rect x="89" y="61" width="1.02" height="1.02" fill="#0021ff"/><rect x="89" y="63" width="1.02" height="1.02" fill="#0005ff"/><rect x="90" y="1" width="1.02" height="1.02" fill="#002aff"/><rect x="90" y="4" width="1.02" height="1.02" fill="#5600ff"/><rect x="90" y="6" width="1.02" height="1.02" fill="#0800ff"/><rect x="90" y="10" width="1.02" height="1.02" fill="#0035ff"/><rect x="90" y="11" width="1.02" height="1.02" fill="#1a00ff"/><rect x="90" y="12" width="1.02" height="1.02" fill="#000fff"/><rect x="90" y="13" width="1.02" height="1.02" fill="#3100ff"/><rect x="90" y="14" width="1.02" height="1.02" fill="#2700ff"/><rect x="90" y="15" width="1.02" height="1.02" fill="#3a00ff"/><rect x="90" y="17" width="1.02" height="1.02" fill="#4f00ff"/><rect x="90" y="18" width="1.02" height="1.02" fill="#1c00ff"/><rect x="90" y="20" width="1.02" height="1.02" fill="#4200ff"/><rect x="90" y="22" width="1.02" height="1.02" fill="#0e00ff"/><rect x="90" y="23" width="1.02" height="1.02" fill="#2200ff"/><rect x="90" y="24" width="1.02" height="1.02" fill="#0c00ff"/><rect x="90" y="25" width="1.02" height="1.02" fill="#1100ff"/><rect x="90" y="27" width="1.02" height="1.02" fill="#0000ff"/><rect x="90" y="28" width="1.02" height="1.02" fill="#0007ff"/><rect x="90" y="29" width="1.02" height="1.02" fill="#002cff"/><rect x="90" y="30" width="1.02" height="1.02" fill="#0016ff"/><rect x="90" y="32" width="1.02" height="1.02" fill="#0031ff"/><rect x="90" y="33" width="1.02" height="1.02" fill="#0016ff"/><rect x="90" y="34" width="1.02" height="1.02" fill="#004fff"/><rect x="90" y="35" width="1.02" height="1.02" fill="#0024ff"/><rect x="90" y="36" width="1.02" height="1.02" fill="#3d00ff"/><rect x="90" y="38" width="1.02" height="1.02" fill="#4600ff"/><rect x="90" y="39" width="1.02" height="1.02" fill="#0035ff"/><rect x="90" y="40" width="1.02" height="1.02" fill="#4e00ff"/><rect x="90" y="41" width="1.02" height="1.02" fill="#0000ff"/><rect x="90" y="42" width="1.02" height="1.02" fill="#0004ff"/><rect x="90" y="44" width="1.02" height="1.02" fill="#0700ff"/><rect x="90" y="45" width="1.02" height="1.02" fill="#2900ff"/><rect x="90" y="46" width="1.02" height="1.02" fill="#1600ff"/><rect x="90" y="48" width="1.02" height="1.02" fill="#000cff"/><rect x="90" y="49" width="1.02" height="1.02" fill="#003aff"/><rect x="90" y="51" width="1.02" height="1.02" fill="#0033ff"/><rect x="90" y="52" width="1.02" height="1.02" fill="#3e00ff"/><rect x="90" y="53" width="1.02" height="1.02" fill="#1500ff"/><rect x="90" y="54" width="1.02" height="1.02" fill="#1100ff"/><rect x="90" y="55" width="1.02" height="1.02" fill="#00d8ff"/><rect x="90" y="56" width="1.02" height="1.02" fill="#0037ff"/><rect x="90" y="57" width="1.02" height="1.02" fill="#2700ff"/><rect x="90" y="58" width="1.02" height="1.02" fill="#0017ff"/><rect x="90" y="59" width="1.02" height="1.02" fill="#3c00ff"/><rect x="90" y="62" width="1.02" height="1.02" fill="#0017ff"/><rect x="91" y="0" width="1.02" height="1.02" fill="#2600ff"/><rect x="91" y="1" width="1.02" height="1.02" fill="#2d00ff"/><rect x="91" y="2" width="1.02" height="1.02" fill="#1900ff"/><rect x="91" y="3" width="1.02" height="1.02" fill="#4300ff"/><rect x="91" y="4" width="1.02" height="1.02" fill="#0008ff"/><rect x="91" y="5" width="1.02" height="1.02" fill="#5100ff"/><rect x="91" y="6" width="1.02" height="1.02" fill="#001eff"/><rect x="91" y="7" width="1.02" height="1.02" fill="#003dff"/><rect x="91" y="8" width="1.02" height="1.02" fill="#0016ff"/><rect x="91" y="9" width="1.02" height="1.02" fill="#003cff"/><rect x="91" y="10" width="1.02" height="1.02" fill="#0100ff"/><rect x="91" y="11" width="1.02" height="1.02" fill="#0700ff"/><rect x="91" y="12" width="1.02" height="1.02" fill="#4e00ff"/><rect x="91" y="13" width="1.02" height="1.02" fill="#3f00ff"/><rect x="91" y="14" width="1.02" height="1.02" fill="#003bff"/><rect x="91" y="15" width="1.02" height="1.02" fill="#4e00ff"/><rect x="91" y="16" width="1.02" height="1.02" fill="#002aff"/><rect x="91" y="17" width="1.02" height="1.02" fill="#0b00ff"/><rect x="91" y="18" width="1.02" height="1.02" fill="#5600ff"/><rect x="91" y="20" width="1.02" height="1.02" fill="#0e00ff"/><rect x="91" y="21" width="1.02" height="1.02" fill="#0039ff"/><rect x="91" y="22" width="1.02" height="1.02" fill="#5600ff"/><rect x="91" y="23" width="1.02" height="1.02" fill="#2f00ff"/><rect x="91" y="24" width="1.02" height="1.02" fill="#0034ff"/><rect x="91" y="25" width="1.02" height="1.02" fill="#5300ff"/><rect x="91" y="26" width="1.02" height="1.02" fill="#0025ff"/><rect x="91" y="28" width="1.02" height="1.02" fill="#3a00ff"/><rect x="91" y="29" width="1.02" height="1.02" fill="#003dff"/><rect x="91" y="30" width="1.02" height="1.02" fill="#3a00ff"/><rect x="91" y="32" width="1.02" height="1.02" fill="#0024ff"/><rect x="91" y="33" width="1.02" height="1.02" fill="#4e00ff"/><rect x="91" y="34" width="1.02" height="1.02" fill="#1f00ff"/><rect x="91" y="35" width="1.02" height="1.02" fill="#0012ff"/><rect x="91" y="36" width="1.02" height="1.02" fill="#4c00ff"/><rect x="91" y="39" width="1.02" height="1.02" fill="#3900ff"/><rect x="91" y="40" width="1.02" height="1.02" fill="#1500ff"/><rect x="91" y="41" width="1.02" height="1.02" fill="#5900ff"/><rect x="91" y="42" width="1.02" height="1.02" fill="#0a00ff"/><rect x="91" y="44" width="1.02" height="1.02" fill="#002aff"/><rect x="91" y="45" width="1.02" height="1.02" fill="#1100ff"/><rect x="91" y="47" width="1.02" height="1.02" fill="#5100ff"/><rect x="91" y="48" width="1.02" height="1.02" fill="#3400ff"/><rect x="91" y="49" width="1.02" height="1.02" fill="#003aff"/><rect x="91" y="50" width="1.02" height="1.02" fill="#000aff"/><rect x="91" y="51" width="1.02" height="1.02" fill="#0027ff"/><rect x="91" y="52" width="1.02" height="1.02" fill="#3900ff"/><rect x="91" y="54" width="1.02" height="1.02" fill="#5000ff"/><rect x="91" y="55" width="1.02" height="1.02" fill="#0014ff"/><rect x="91" y="56" width="1.02" height="1.02" fill="#0006ff"/><rect x="91" y="57" width="1.02" height="1.02" fill="#0700ff"/><rect x="91" y="58" width="1.02" height="1.02" fill="#0006ff"/><rect x="91" y="62" width="1.02" height="1.02" fill="#005fff"/><rect x="92" y="2" width="1.02" height="1.02" fill="#0b00ff"/><rect x="92" y="3" width="1.02" height="1.02" fill="#0045ff"/><rect x="92" y="4" width="1.02" height="1.02" fill="#1a00ff"/><rect x="92" y="5" width="1.02" height="1.02" fill="#0600ff"/><rect x="92" y="6" width="1.02" height="1.02" fill="#2f00ff"/><rect x="92" y="7" width="1.02" height="1.02" fill="#2000ff"/><rect x="92" y="8" width="1.02" height="1.02" fill="#3f00ff"/><rect x="92" y="10" width="1.02" height="1.02" fill="#1b00ff"/><rect x="92" y="11" width="1.02" height="1.02" fill="#3c00ff"/><rect x="92" y="13" width="1.02" height="1.02" fill="#2b00ff"/><rect x="92" y="14" width="1.02" height="1.02" fill="#4900ff"/><rect x="92" y="16" width="1.02" height="1.02" fill="#4400ff"/><rect x="92" y="17" width="1.02" height="1.02" fill="#3f00ff"/><rect x="92" y="18" width="1.02" height="1.02" fill="#3500ff"/><rect x="92" y="20" width="1.02" height="1.02" fill="#0c00ff"/><rect x="92" y="21" width="1.02" height="1.02" fill="#4600ff"/><rect x="92" y="22" width="1.02" height="1.02" fill="#000bff"/><rect x="92" y="23" width="1.02" height="1.02" fill="#0800ff"/><rect x="92" y="28" width="1.02" height="1.02" fill="#0000ff"/><rect x="92" y="30" width="1.02" height="1.02" fill="#0b00ff"/><rect x="92" y="32" width="1.02" height="1.02" fill="#4700ff"/><rect x="92" y="33" width="1.02" height="1.02" fill="#5500ff"/><rect x="92" y="34" width="1.02" height="1.02" fill="#1e00ff"/><rect x="92" y="36" width="1.02" height="1.02" fill="#1800ff"/><rect x="92" y="37" width="1.02" height="1.02" fill="#1000ff"/><rect x="92" y="38" width="1.02" height="1.02" fill="#4600ff"/><rect x="92" y="39" width="1.02" height="1.02" fill="#4300ff"/><rect x="92" y="40" width="1.02" height="1.02" fill="#4d00ff"/><rect x="92" y="42" width="1.02" height="1.02" fill="#4500ff"/><rect x="92" y="45" width="1.02" height="1.02" fill="#3a00ff"/><rect x="92" y="46" width="1.02" height="1.02" fill="#1300ff"/><rect x="92" y="47" width="1.02" height="1.02" fill="#3700ff"/><rect x="92" y="48" width="1.02" height="1.02" fill="#0e00ff"/><rect x="92" y="49" width="1.02" height="1.02" fill="#1600ff"/><rect x="92" y="51" width="1.02" height="1.02" fill="#2300ff"/><rect x="92" y="52" width="1.02" height="1.02" fill="#0021ff"/><rect x="92" y="53" width="1.02" height="1.02" fill="#2400ff"/><rect x="92" y="54" width="1.02" height="1.02" fill="#0e00ff"/><rect x="92" y="55" width="1.02" height="1.02" fill="#4f00ff"/><rect x="92" y="56" width="1.02" height="1.02" fill="#0900ff"/><rect x="92" y="57" width="1.02" height="1.02" fill="#5800ff"/><rect x="92" y="58" width="1.02" height="1.02" fill="#4600ff"/><rect x="92" y="59" width="1.02" height="1.02" fill="#4f00ff"/><rect x="92" y="60" width="1.02" height="1.02" fill="#0400ff"/><rect x="92" y="63" width="1.02" height="1.02" fill="#3500ff"/><rect x="93" y="0" width="1.02" height="1.02" fill="#4100ff"/><rect x="93" y="2" width="1.02" height="1.02" fill="#3500ff"/><rect x="93" y="5" width="1.02" height="1.02" fill="#5800ff"/><rect x="93" y="6" width="1.02" height="1.02" fill="#4600ff"/><rect x="93" y="7" width="1.02" height="1.02" fill="#4300ff"/><rect x="93" y="9" width="1.02" height="1.02" fill="#3500ff"/><rect x="93" y="11" width="1.02" height="1.02" fill="#5400ff"/><rect x="93" y="14" width="1.02" height="1.02" fill="#3900ff"/><rect x="93" y="15" width="1.02" height="1.02" fill="#3200ff"/><rect x="93" y="18" width="1.02" height="1.02" fill="#4700ff"/><rect x="93" y="19" width="1.02" height="1.02" fill="#3400ff"/><rect x="93" y="21" width="1.02" height="1.02" fill="#4700ff"/><rect x="93" y="28" width="1.02" height="1.02" fill="#4e00ff"/><rect x="93" y="29" width="1.02" height="1.02" fill="#4500ff"/><rect x="93" y="32" width="1.02" height="1.02" fill="#4700ff"/><rect x="93" y="35" width="1.02" height="1.02" fill="#4d00ff"/><rect x="93" y="36" width="1.02" height="1.02" fill="#5600ff"/><rect x="93" y="37" width="1.02" height="1.02" fill="#3900ff"/><rect x="93" y="38" width="1.02" height="1.02" fill="#3a00ff"/><rect x="93" y="39" width="1.02" height="1.02" fill="#3c00ff"/><rect x="93" y="41" width="1.02" height="1.02" fill="#1000ff"/><rect x="93" y="44" width="1.02" height="1.02" fill="#4e00ff"/><rect x="93" y="45" width="1.02" height="1.02" fill="#4700ff"/><rect x="93" y="46" width="1.02" height="1.02" fill="#4a00ff"/><rect x="93" y="51" width="1.02" height="1.02" fill="#3800ff"/><rect x="93" y="54" width="1.02" height="1.02" fill="#4200ff"/><rect x="93" y="57" width="1.02" height="1.02" fill="#3500ff"/><rect x="93" y="60" width="1.02" height="1.02" fill="#4e00ff"/><rect x="94" y="11" width="1.02" height="1.02" fill="#4400ff"/><rect x="95" y="57" width="1.02" height="1.02" fill="#4700ff"/><rect x="96" y="43" width="1.02" height="1.02" fill="#2900ff"/><rect x="97" y="43" width="1.02" height="1.02" fill="#5800ff"/><rect x="98" y="27" width="1.02" height="1.02" fill="#2c00ff"/><rect x="98" y="43" width="1.02" height="1.02" fill="#5800ff"/><rect x="99" y="21" width="1.02" height="1.02" fill="#1f00ff"/><rect x="99" y="57" width="1.02" height="1.02" fill="#3400ff"/><rect x="100" y="12" width="1.02" height="1.02" fill="#2000ff"/><rect x="100" y="55" width="1.02" height="1.02" fill="#1500ff"/><rect x="101" y="39" width="1.02" height="1.02" fill="#2d00ff"/><rect x="102" y="61" width="1.02" height="1.02" fill="#2000ff"/><rect x="103" y="57" width="1.02" height="1.02" fill="#3b00ff"/><rect x="104" y="38" width="1.02" height="1.02" fill="#1300ff"/><rect x="105" y="26" width="1.02" height="1.02" fill="#2900ff"/><rect x="110" y="27" width="1.02" height="1.02" fill="#5900ff"/><rect x="110" y="40" width="1.02" height="1.02" fill="#4300ff"/><rect x="110" y="45" width="1.02" height="1.02" fill="#5400ff"/><rect x="111" y="48" width="1.02" height="1.02" fill="#3a00ff"/><rect x="111" y="50" width="1.02" height="1.02" fill="#2c00ff"/><rect x="112" y="25" width="1.02" height="1.02" fill="#1900ff"/><rect x="112" y="41" width="1.02" height="1.02" fill="#4b00ff"/><rect x="115" y="37" width="1.02" height="1.02" fill="#1600ff"/><rect x="116" y="20" width="1.02" height="1.02" fill="#5100ff"/><rect x="117" y="30" width="1.02" height="1.02" fill="#5800ff"/><rect x="119" y="33" width="1.02" height="1.02" fill="#2400ff"/><rect x="120" y="20" width="1.02" height="1.02" fill="#3100ff"/><rect x="120" y="39" width="1.02" height="1.02" fill="#5600ff"/><rect x="120" y="42" width="1.02" height="1.02" fill="#3500ff"/><rect x="122" y="54" width="1.02" height="1.02" fill="#4b00ff"/><rect x="123" y="23" width="1.02" height="1.02" fill="#5900ff"/><rect x="127" y="2" width="1.02" height="1.02" fill="#4d00ff"/><rect x="127" y="5" width="1.02" height="1.02" fill="#5300ff"/><rect x="129" y="19" width="1.02" height="1.02" fill="#2100ff"/><rect x="129" y="25" width="1.02" height="1.02" fill="#2600ff"/><rect x="129" y="31" width="1.02" height="1.02" fill="#3800ff"/><rect x="131" y="0" width="1.02" height="1.02" fill="#3c00ff"/><rect x="131" y="12" width="1.02" height="1.02" fill="#4000ff"/><rect x="132" y="2" width="1.02" height="1.02" fill="#1500ff"/><rect x="133" y="62" width="1.02" height="1.02" fill="#4700ff"/><rect x="134" y="48" width="1.02" height="1.02" fill="#1e00ff"/><rect x="136" y="7" width="1.02" height="1.02" fill="#4300ff"/><rect x="136" y="39" width="1.02" height="1.02" fill="#1d00ff"/><rect x="136" y="40" width="1.02" height="1.02" fill="#1b00ff"/><rect x="137" y="20" width="1.02" height="1.02" fill="#5800ff"/><rect x="138" y="21" width="1.02" height="1.02" fill="#4c00ff"/><rect x="138" y="33" width="1.02" height="1.02" fill="#5100ff"/><rect x="138" y="47" width="1.02" height="1.02" fill="#5200ff"/><rect x="139" y="31" width="1.02" height="1.02" fill="#2400ff"/><rect x="139" y="44" width="1.02" height="1.02" fill="#4800ff"/><rect x="139" y="52" width="1.02" height="1.02" fill="#4e00ff"/><rect x="140" y="30" width="1.02" height="1.02" fill="#1400ff"/><rect x="141" y="1" width="1.02" height="1.02" fill="#5100ff"/><rect x="141" y="42" width="1.02" height="1.02" fill="#3000ff"/><rect x="141" y="48" width="1.02" height="1.02" fill="#4800ff"/><rect x="142" y="31" width="1.02" height="1.02" fill="#4f00ff"/><rect x="142" y="53" width="1.02" height="1.02" fill="#5800ff"/><rect x="143" y="16" width="1.02" height="1.02" fill="#1900ff"/><rect x="143" y="48" width="1.02" height="1.02" fill="#1200ff"/><rect x="143" y="49" width="1.02" height="1.02" fill="#1b00ff"/><rect x="143" y="59" width="1.02" height="1.02" fill="#2200ff"/><rect x="143" y="60" width="1.02" height="1.02" fill="#3300ff"/><rect x="144" y="9" width="1.02" height="1.02" fill="#4700ff"/><rect x="144" y="31" width="1.02" height="1.02" fill="#4500ff"/><rect x="144" y="34" width="1.02" height="1.02" fill="#5300ff"/><rect x="145" y="6" width="1.02" height="1.02" fill="#1c00ff"/><rect x="145" y="34" width="1.02" height="1.02" fill="#3000ff"/><rect x="145" y="46" width="1.02" height="1.02" fill="#3000ff"/><rect x="146" y="0" width="1.02" height="1.02" fill="#1300ff"/><rect x="146" y="20" width="1.02" height="1.02" fill="#2400ff"/><rect x="146" y="30" width="1.02" height="1.02" fill="#1a00ff"/><rect x="146" y="32" width="1.02" height="1.02" fill="#0700ff"/><rect x="146" y="35" width="1.02" height="1.02" fill="#0004ff"/><rect x="146" y="47" width="1.02" height="1.02" fill="#0053ff"/><rect x="146" y="56" width="1.02" height="1.02" fill="#5000ff"/><rect x="147" y="0" width="1.02" height="1.02" fill="#5200ff"/><rect x="147" y="1" width="1.02" height="1.02" fill="#4200ff"/><rect x="147" y="2" width="1.02" height="1.02" fill="#4800ff"/><rect x="147" y="4" width="1.02" height="1.02" fill="#5800ff"/><rect x="147" y="5" width="1.02" height="1.02" fill="#3600ff"/><rect x="147" y="6" width="1.02" height="1.02" fill="#3a00ff"/><rect x="147" y="8" width="1.02" height="1.02" fill="#0013ff"/><rect x="147" y="9" width="1.02" height="1.02" fill="#2a00ff"/><rect x="147" y="11" width="1.02" height="1.02" fill="#2700ff"/><rect x="147" y="12" width="1.02" height="1.02" fill="#3b00ff"/><rect x="147" y="14" width="1.02" height="1.02" fill="#4000ff"/><rect x="147" y="15" width="1.02" height="1.02" fill="#4600ff"/><rect x="147" y="16" width="1.02" height="1.02" fill="#3400ff"/><rect x="147" y="18" width="1.02" height="1.02" fill="#3900ff"/><rect x="147" y="19" width="1.02" height="1.02" fill="#2300ff"/><rect x="147" y="20" width="1.02" height="1.02" fill="#4500ff"/><rect x="147" y="21" width="1.02" height="1.02" fill="#4c00ff"/><rect x="147" y="22" width="1.02" height="1.02" fill="#4b00ff"/><rect x="147" y="24" width="1.02" height="1.02" fill="#4200ff"/><rect x="147" y="26" width="1.02" height="1.02" fill="#2a00ff"/><rect x="147" y="27" width="1.02" height="1.02" fill="#0400ff"/><rect x="147" y="29" width="1.02" height="1.02" fill="#0500ff"/><rect x="147" y="30" width="1.02" height="1.02" fill="#4300ff"/><rect x="147" y="32" width="1.02" height="1.02" fill="#4000ff"/><rect x="147" y="33" width="1.02" height="1.02" fill="#2e00ff"/><rect x="147" y="35" width="1.02" height="1.02" fill="#2600ff"/><rect x="147" y="36" width="1.02" height="1.02" fill="#4f00ff"/><rect x="147" y="38" width="1.02" height="1.02" fill="#4600ff"/><rect x="147" y="40" width="1.02" height="1.02" fill="#2a00ff"/><rect x="147" y="43" width="1.02" height="1.02" fill="#3f00ff"/><rect x="147" y="45" width="1.02" height="1.02" fill="#2700ff"/><rect x="147" y="46" width="1.02" height="1.02" fill="#2400ff"/><rect x="147" y="47" width="1.02" height="1.02" fill="#2800ff"/><rect x="147" y="49" width="1.02" height="1.02" fill="#4a00ff"/><rect x="147" y="50" width="1.02" height="1.02" fill="#5900ff"/><rect x="147" y="51" width="1.02" height="1.02" fill="#3d00ff"/><rect x="147" y="52" width="1.02" height="1.02" fill="#3200ff"/><rect x="147" y="53" width="1.02" height="1.02" fill="#2e00ff"/><rect x="147" y="55" width="1.02" height="1.02" fill="#1a00ff"/><rect x="147" y="56" width="1.02" height="1.02" fill="#3000ff"/><rect x="147" y="57" width="1.02" height="1.02" fill="#4000ff"/><rect x="147" y="58" width="1.02" height="1.02" fill="#3300ff"/><rect x="147" y="59" width="1.02" height="1.02" fill="#1a00ff"/><rect x="147" y="61" width="1.02" height="1.02" fill="#1f00ff"/><rect x="147" y="62" width="1.02" height="1.02" fill="#2400ff"/><rect x="148" y="0" width="1.02" height="1.02" fill="#1200ff"/><rect x="148" y="2" width="1.02" height="1.02" fill="#0600ff"/><rect x="148" y="4" width="1.02" height="1.02" fill="#0005ff"/><rect x="148" y="5" width="1.02" height="1.02" fill="#000fff"/><rect x="148" y="6" width="1.02" height="1.02" fill="#0200ff"/><rect x="148" y="7" width="1.02" height="1.02" fill="#0026ff"/><rect x="148" y="8" width="1.02" height="1.02" fill="#001dff"/><rect x="148" y="9" width="1.02" height="1.02" fill="#3e00ff"/><rect x="148" y="10" width="1.02" height="1.02" fill="#5200ff"/><rect x="148" y="11" width="1.02" height="1.02" fill="#0015ff"/><rect x="148" y="12" width="1.02" height="1.02" fill="#0018ff"/><rect x="148" y="13" width="1.02" height="1.02" fill="#0016ff"/><rect x="148" y="15" width="1.02" height="1.02" fill="#0600ff"/><rect x="148" y="16" width="1.02" height="1.02" fill="#0030ff"/><rect x="148" y="17" width="1.02" height="1.02" fill="#0c00ff"/><rect x="148" y="18" width="1.02" height="1.02" fill="#5200ff"/><rect x="148" y="19" width="1.02" height="1.02" fill="#0032ff"/><rect x="148" y="20" width="1.02" height="1.02" fill="#5900ff"/><rect x="148" y="21" width="1.02" height="1.02" fill="#1700ff"/><rect x="148" y="22" width="1.02" height="1.02" fill="#4c00ff"/><rect x="148" y="23" width="1.02" height="1.02" fill="#000fff"/><rect x="148" y="24" width="1.02" height="1.02" fill="#000cff"/><rect x="148" y="25" width="1.02" height="1.02" fill="#4e00ff"/><rect x="148" y="26" width="1.02" height="1.02" fill="#0012ff"/><rect x="148" y="27" width="1.02" height="1.02" fill="#0c00ff"/><rect x="148" y="28" width="1.02" height="1.02" fill="#2900ff"/><rect x="148" y="29" width="1.02" height="1.02" fill="#1200ff"/><rect x="148" y="31" width="1.02" height="1.02" fill="#4c00ff"/><rect x="148" y="32" width="1.02" height="1.02" fill="#001aff"/><rect x="148" y="33" width="1.02" height="1.02" fill="#1500ff"/><rect x="148" y="34" width="1.02" height="1.02" fill="#0c00ff"/><rect x="148" y="35" width="1.02" height="1.02" fill="#2400ff"/><rect x="148" y="36" width="1.02" height="1.02" fill="#2100ff"/><rect x="148" y="37" width="1.02" height="1.02" fill="#4300ff"/><rect x="148" y="38" width="1.02" height="1.02" fill="#2700ff"/><rect x="148" y="39" width="1.02" height="1.02" fill="#0020ff"/><rect x="148" y="41" width="1.02" height="1.02" fill="#5700ff"/><rect x="148" y="42" width="1.02" height="1.02" fill="#0016ff"/><rect x="148" y="43" width="1.02" height="1.02" fill="#0900ff"/><rect x="148" y="44" width="1.02" height="1.02" fill="#0003ff"/><rect x="148" y="45" width="1.02" height="1.02" fill="#0006ff"/><rect x="148" y="46" width="1.02" height="1.02" fill="#4f00ff"/><rect x="148" y="47" width="1.02" height="1.02" fill="#000bff"/><rect x="148" y="48" width="1.02" height="1.02" fill="#5500ff"/><rect x="148" y="49" width="1.02" height="1.02" fill="#0027ff"/><rect x="148" y="50" width="1.02" height="1.02" fill="#0019ff"/><rect x="148" y="51" width="1.02" height="1.02" fill="#0022ff"/><rect x="148" y="52" width="1.02" height="1.02" fill="#3b00ff"/><rect x="148" y="53" width="1.02" height="1.02" fill="#4f00ff"/><rect x="148" y="54" width="1.02" height="1.02" fill="#2000ff"/><rect x="148" y="55" width="1.02" height="1.02" fill="#2a00ff"/><rect x="148" y="56" width="1.02" height="1.02" fill="#0a00ff"/><rect x="148" y="57" width="1.02" height="1.02" fill="#1800ff"/><rect x="148" y="58" width="1.02" height="1.02" fill="#1500ff"/><rect x="148" y="59" width="1.02" height="1.02" fill="#5400ff"/><rect x="148" y="61" width="1.02" height="1.02" fill="#3800ff"/><rect x="148" y="62" width="1.02" height="1.02" fill="#5a00ff"/><rect x="148" y="63" width="1.02" height="1.02" fill="#0019ff"/><rect x="149" y="0" width="1.02" height="1.02" fill="#4600ff"/><rect x="149" y="1" width="1.02" height="1.02" fill="#0b00ff"/><rect x="149" y="2" width="1.02" height="1.02" fill="#0015ff"/><rect x="149" y="3" width="1.02" height="1.02" fill="#5000ff"/><rect x="149" y="4" width="1.02" height="1.02" fill="#3300ff"/><rect x="149" y="5" width="1.02" height="1.02" fill="#1f00ff"/><rect x="149" y="6" width="1.02" height="1.02" fill="#005aff"/><rect x="149" y="7" width="1.02" height="1.02" fill="#0059ff"/><rect x="149" y="8" width="1.02" height="1.02" fill="#004aff"/><rect x="149" y="10" width="1.02" height="1.02" fill="#0082ff"/><rect x="149" y="11" width="1.02" height="1.02" fill="#004cff"/><rect x="149" y="12" width="1.02" height="1.02" fill="#1500ff"/><rect x="149" y="13" width="1.02" height="1.02" fill="#1000ff"/><rect x="149" y="14" width="1.02" height="1.02" fill="#004eff"/><rect x="149" y="15" width="1.02" height="1.02" fill="#3100ff"/><rect x="149" y="16" width="1.02" height="1.02" fill="#002bff"/><rect x="149" y="17" width="1.02" height="1.02" fill="#0400ff"/><rect x="149" y="18" width="1.02" height="1.02" fill="#4400ff"/><rect x="149" y="19" width="1.02" height="1.02" fill="#002aff"/><rect x="149" y="20" width="1.02" height="1.02" fill="#007dff"/><rect x="149" y="21" width="1.02" height="1.02" fill="#0900ff"/><rect x="149" y="22" width="1.02" height="1.02" fill="#0036ff"/><rect x="149" y="23" width="1.02" height="1.02" fill="#006eff"/><rect x="149" y="24" width="1.02" height="1.02" fill="#3600ff"/><rect x="149" y="25" width="1.02" height="1.02" fill="#2e00ff"/><rect x="149" y="26" width="1.02" height="1.02" fill="#006fff"/><rect x="149" y="27" width="1.02" height="1.02" fill="#0024ff"/><rect x="149" y="28" width="1.02" height="1.02" fill="#0059ff"/><rect x="149" y="29" width="1.02" height="1.02" fill="#5100ff"/><rect x="149" y="30" width="1.02" height="1.02" fill="#005dff"/><rect x="149" y="31" width="1.02" height="1.02" fill="#003aff"/><rect x="149" y="32" width="1.02" height="1.02" fill="#1b00ff"/><rect x="149" y="33" width="1.02" height="1.02" fill="#1400ff"/><rect x="149" y="34" width="1.02" height="1.02" fill="#3500ff"/><rect x="149" y="36" width="1.02" height="1.02" fill="#1800ff"/><rect x="149" y="37" width="1.02" height="1.02" fill="#1400ff"/><rect x="149" y="38" width="1.02" height="1.02" fill="#2900ff"/><rect x="149" y="39" width="1.02" height="1.02" fill="#0081ff"/><rect x="149" y="40" width="1.02" height="1.02" fill="#000bff"/><rect x="149" y="41" width="1.02" height="1.02" fill="#2e00ff"/><rect x="149" y="42" width="1.02" height="1.02" fill="#003cff"/><rect x="149" y="43" width="1.02" height="1.02" fill="#001dff"/><rect x="149" y="44" width="1.02" height="1.02" fill="#0002ff"/><rect x="149" y="46" width="1.02" height="1.02" fill="#005bff"/><rect x="149" y="47" width="1.02" height="1.02" fill="#0004ff"/><rect x="149" y="48" width="1.02" height="1.02" fill="#3800ff"/><rect x="149" y="49" width="1.02" height="1.02" fill="#0300ff"/><rect x="149" y="50" width="1.02" height="1.02" fill="#0032ff"/><rect x="149" y="51" width="1.02" height="1.02" fill="#0100ff"/><rect x="149" y="52" width="1.02" height="1.02" fill="#0052ff"/><rect x="149" y="53" width="1.02" height="1.02" fill="#0015ff"/><rect x="149" y="54" width="1.02" height="1.02" fill="#007fff"/><rect x="149" y="55" width="1.02" height="1.02" fill="#002bff"/><rect x="149" y="56" width="1.02" height="1.02" fill="#3700ff"/><rect x="149" y="57" width="1.02" height="1.02" fill="#1c00ff"/><rect x="149" y="58" width="1.02" height="1.02" fill="#0000ff"/><rect x="149" y="59" width="1.02" height="1.02" fill="#0067ff"/><rect x="149" y="60" width="1.02" height="1.02" fill="#2d00ff"/><rect x="149" y="61" width="1.02" height="1.02" fill="#2000ff"/><rect x="149" y="62" width="1.02" height="1.02" fill="#0c00ff"/><rect x="149" y="63" width="1.02" height="1.02" fill="#0020ff"/><rect x="150" y="0" width="1.02" height="1.02" fill="#3000ff"/><rect x="150" y="1" width="1.02" height="1.02" fill="#0049ff"/><rect x="150" y="2" width="1.02" height="1.02" fill="#00a3ff"/><rect x="150" y="3" width="1.02" height="1.02" fill="#00f7ff"/><rect x="150" y="4" width="1.02" height="1.02" fill="#3d00ff"/><rect x="150" y="5" width="1.02" height="1.02" fill="#0004ff"/><rect x="150" y="6" width="1.02" height="1.02" fill="#4300ff"/><rect x="150" y="7" width="1.02" height="1.02" fill="#003bff"/><rect x="150" y="8" width="1.02" height="1.02" fill="#5100ff"/><rect x="150" y="9" width="1.02" height="1.02" fill="#0e00ff"/><rect x="150" y="10" width="1.02" height="1.02" fill="#003cff"/><rect x="150" y="11" width="1.02" height="1.02" fill="#5000ff"/><rect x="150" y="12" width="1.02" height="1.02" fill="#0041ff"/><rect x="150" y="13" width="1.02" height="1.02" fill="#001fff"/><rect x="150" y="14" width="1.02" height="1.02" fill="#009cff"/><rect x="150" y="15" width="1.02" height="1.02" fill="#0800ff"/><rect x="150" y="16" width="1.02" height="1.02" fill="#00ffc0"/><rect x="150" y="17" width="1.02" height="1.02" fill="#006fff"/><rect x="150" y="18" width="1.02" height="1.02" fill="#5600ff"/><rect x="150" y="19" width="1.02" height="1.02" fill="#0053ff"/><rect x="150" y="20" width="1.02" height="1.02" fill="#0077ff"/><rect x="150" y="21" width="1.02" height="1.02" fill="#1c00ff"/><rect x="150" y="22" width="1.02" height="1.02" fill="#003fff"/><rect x="150" y="23" width="1.02" height="1.02" fill="#0065ff"/><rect x="150" y="24" width="1.02" height="1.02" fill="#4600ff"/><rect x="150" y="25" width="1.02" height="1.02" fill="#009eff"/><rect x="150" y="26" width="1.02" height="1.02" fill="#0039ff"/><rect x="150" y="27" width="1.02" height="1.02" fill="#00ffd7"/><rect x="150" y="28" width="1.02" height="1.02" fill="#0016ff"/><rect x="150" y="29" width="1.02" height="1.02" fill="#000eff"/><rect x="150" y="30" width="1.02" height="1.02" fill="#0039ff"/><rect x="150" y="31" width="1.02" height="1.02" fill="#1800ff"/><rect x="150" y="32" width="1.02" height="1.02" fill="#007bff"/><rect x="150" y="33" width="1.02" height="1.02" fill="#0039ff"/><rect x="150" y="34" width="1.02" height="1.02" fill="#0029ff"/><rect x="150" y="36" width="1.02" height="1.02" fill="#006bff"/><rect x="150" y="37" width="1.02" height="1.02" fill="#004dff"/><rect x="150" y="38" width="1.02" height="1.02" fill="#0071ff"/><rect x="150" y="39" width="1.02" height="1.02" fill="#1700ff"/><rect x="150" y="40" width="1.02" height="1.02" fill="#5500ff"/><rect x="150" y="41" width="1.02" height="1.02" fill="#00c9ff"/><rect x="150" y="42" width="1.02" height="1.02" fill="#0083ff"/><rect x="150" y="43" width="1.02" height="1.02" fill="#004eff"/><rect x="150" y="44" width="1.02" height="1.02" fill="#0012ff"/><rect x="150" y="45" width="1.02" height="1.02" fill="#0039ff"/><rect x="150" y="46" width="1.02" height="1.02" fill="#000cff"/><rect x="150" y="47" width="1.02" height="1.02" fill="#004bff"/><rect x="150" y="48" width="1.02" height="1.02" fill="#00a9ff"/><rect x="150" y="49" width="1.02" height="1.02" fill="#007fff"/><rect x="150" y="50" width="1.02" height="1.02" fill="#0058ff"/><rect x="150" y="51" width="1.02" height="1.02" fill="#0b00ff"/><rect x="150" y="52" width="1.02" height="1.02" fill="#002bff"/><rect x="150" y="53" width="1.02" height="1.02" fill="#002eff"/><rect x="150" y="54" width="1.02" height="1.02" fill="#008cff"/><rect x="150" y="55" width="1.02" height="1.02" fill="#007dff"/><rect x="150" y="56" width="1.02" height="1.02" fill="#0003ff"/><rect x="150" y="57" width="1.02" height="1.02" fill="#0056ff"/><rect x="150" y="58" width="1.02" height="1.02" fill="#006bff"/><rect x="150" y="59" width="1.02" height="1.02" fill="#2700ff"/><rect x="150" y="60" width="1.02" height="1.02" fill="#0067ff"/><rect x="150" y="61" width="1.02" height="1.02" fill="#00e3ff"/><rect x="150" y="62" width="1.02" height="1.02" fill="#1e00ff"/><rect x="150" y="63" width="1.02" height="1.02" fill="#2000ff"/><rect x="151" y="0" width="1.02" height="1.02" fill="#0036ff"/><rect x="151" y="1" width="1.02" height="1.02" fill="#0020ff"/><rect x="151" y="2" width="1.02" height="1.02" fill="#00afff"/><rect x="151" y="3" width="1.02" height="1.02" fill="#00a3ff"/><rect x="151" y="4" width="1.02" height="1.02" fill="#5500ff"/><rect x="151" y="5" width="1.02" height="1.02" fill="#004fff"/><rect x="151" y="6" width="1.02" height="1.02" fill="#00a6ff"/><rect x="151" y="7" width="1.02" height="1.02" fill="#002eff"/><rect x="151" y="8" width="1.02" height="1.02" fill="#4e00ff"/><rect x="151" y="9" width="1.02" height="1.02" fill="#2500ff"/><rect x="151" y="10" width="1.02" height="1.02" fill="#1b00ff"/><rect x="151" y="11" width="1.02" height="1.02" fill="#0019ff"/><rect x="151" y="12" width="1.02" height="1.02" fill="#002fff"/><rect x="151" y="13" width="1.02" height="1.02" fill="#0b00ff"/><rect x="151" y="14" width="1.02" height="1.02" fill="#0200ff"/><rect x="151" y="15" width="1.02" height="1.02" fill="#0037ff"/><rect x="151" y="16" width="1.02" height="1.02" fill="#4500ff"/><rect x="151" y="17" width="1.02" height="1.02" fill="#0067ff"/><rect x="151" y="18" width="1.02" height="1.02" fill="#2e00ff"/><rect x="151" y="19" width="1.02" height="1.02" fill="#0014ff"/><rect x="151" y="20" width="1.02" height="1.02" fill="#009dff"/><rect x="151" y="21" width="1.02" height="1.02" fill="#0003ff"/><rect x="151" y="22" width="1.02" height="1.02" fill="#008aff"/><rect x="151" y="23" width="1.02" height="1.02" fill="#00ffd0"/><rect x="151" y="24" width="1.02" height="1.02" fill="#3100ff"/><rect x="151" y="25" width="1.02" height="1.02" fill="#0400ff"/><rect x="151" y="26" width="1.02" height="1.02" fill="#000eff"/><rect x="151" y="27" width="1.02" height="1.02" fill="#001eff"/><rect x="151" y="28" width="1.02" height="1.02" fill="#0087ff"/><rect x="151" y="29" width="1.02" height="1.02" fill="#0029ff"/><rect x="151" y="30" width="1.02" height="1.02" fill="#001cff"/><rect x="151" y="31" width="1.02" height="1.02" fill="#3800ff"/><rect x="151" y="32" width="1.02" height="1.02" fill="#0017ff"/><rect x="151" y="33" width="1.02" height="1.02" fill="#2b00ff"/><rect x="151" y="34" width="1.02" height="1.02" fill="#5100ff"/><rect x="151" y="35" width="1.02" height="1.02" fill="#0046ff"/><rect x="151" y="36" width="1.02" height="1.02" fill="#00b2ff"/><rect x="151" y="37" width="1.02" height="1.02" fill="#4000ff"/><rect x="151" y="38" width="1.02" height="1.02" fill="#5200ff"/><rect x="151" y="39" width="1.02" height="1.02" fill="#2400ff"/><rect x="151" y="40" width="1.02" height="1.02" fill="#0045ff"/><rect x="151" y="41" width="1.02" height="1.02" fill="#0064ff"/><rect x="151" y="42" width="1.02" height="1.02" fill="#1d00ff"/><rect x="151" y="43" width="1.02" height="1.02" fill="#0010ff"/><rect x="151" y="44" width="1.02" height="1.02" fill="#0900ff"/><rect x="151" y="45" width="1.02" height="1.02" fill="#0033ff"/><rect x="151" y="46" width="1.02" height="1.02" fill="#2600ff"/><rect x="151" y="47" width="1.02" height="1.02" fill="#009aff"/><rect x="151" y="48" width="1.02" height="1.02" fill="#00b8ff"/><rect x="151" y="49" width="1.02" height="1.02" fill="#0003ff"/><rect x="151" y="50" width="1.02" height="1.02" fill="#006dff"/><rect x="151" y="51" width="1.02" height="1.02" fill="#0016ff"/><rect x="151" y="52" width="1.02" height="1.02" fill="#0074ff"/><rect x="151" y="53" width="1.02" height="1.02" fill="#3000ff"/><rect x="151" y="54" width="1.02" height="1.02" fill="#3c00ff"/><rect x="151" y="55" width="1.02" height="1.02" fill="#0056ff"/><rect x="151" y="56" width="1.02" height="1.02" fill="#3100ff"/><rect x="151" y="57" width="1.02" height="1.02" fill="#002eff"/><rect x="151" y="58" width="1.02" height="1.02" fill="#0056ff"/><rect x="151" y="59" width="1.02" height="1.02" fill="#0020ff"/><rect x="151" y="60" width="1.02" height="1.02" fill="#2f00ff"/><rect x="151" y="61" width="1.02" height="1.02" fill="#0096ff"/><rect x="151" y="62" width="1.02" height="1.02" fill="#006eff"/><rect x="151" y="63" width="1.02" height="1.02" fill="#004dff"/><rect x="152" y="0" width="1.02" height="1.02" fill="#007bff"/><rect x="152" y="1" width="1.02" height="1.02" fill="#3400ff"/><rect x="152" y="2" width="1.02" height="1.02" fill="#4600ff"/><rect x="152" y="3" width="1.02" height="1.02" fill="#5400ff"/><rect x="152" y="4" width="1.02" height="1.02" fill="#001aff"/><rect x="152" y="5" width="1.02" height="1.02" fill="#4b00ff"/><rect x="152" y="6" width="1.02" height="1.02" fill="#3d00ff"/><rect x="152" y="7" width="1.02" height="1.02" fill="#2f00ff"/><rect x="152" y="8" width="1.02" height="1.02" fill="#0003ff"/><rect x="152" y="9" width="1.02" height="1.02" fill="#0026ff"/><rect x="152" y="10" width="1.02" height="1.02" fill="#0e00ff"/><rect x="152" y="11" width="1.02" height="1.02" fill="#004dff"/><rect x="152" y="12" width="1.02" height="1.02" fill="#4200ff"/><rect x="152" y="13" width="1.02" height="1.02" fill="#003aff"/><rect x="152" y="14" width="1.02" height="1.02" fill="#00a7ff"/><rect x="152" y="15" width="1.02" height="1.02" fill="#0047ff"/><rect x="152" y="16" width="1.02" height="1.02" fill="#00afff"/><rect x="152" y="17" width="1.02" height="1.02" fill="#000fff"/><rect x="152" y="18" width="1.02" height="1.02" fill="#4c00ff"/><rect x="152" y="19" width="1.02" height="1.02" fill="#2800ff"/><rect x="152" y="20" width="1.02" height="1.02" fill="#0050ff"/><rect x="152" y="21" width="1.02" height="1.02" fill="#00b5ff"/><rect x="152" y="22" width="1.02" height="1.02" fill="#4900ff"/><rect x="152" y="23" width="1.02" height="1.02" fill="#00ffe3"/><rect x="152" y="24" width="1.02" height="1.02" fill="#1000ff"/><rect x="152" y="25" width="1.02" height="1.02" fill="#008cff"/><rect x="152" y="26" width="1.02" height="1.02" fill="#00bfff"/><rect x="152" y="27" width="1.02" height="1.02" fill="#00a8ff"/><rect x="152" y="28" width="1.02" height="1.02" fill="#0091ff"/><rect x="152" y="29" width="1.02" height="1.02" fill="#2900ff"/><rect x="152" y="30" width="1.02" height="1.02" fill="#3a00ff"/><rect x="152" y="31" width="1.02" height="1.02" fill="#0005ff"/><rect x="152" y="32" width="1.02" height="1.02" fill="#006eff"/><rect x="152" y="33" width="1.02" height="1.02" fill="#0030ff"/><rect x="152" y="34" width="1.02" height="1.02" fill="#0a00ff"/><rect x="152" y="35" width="1.02" height="1.02" fill="#004cff"/><rect x="152" y="36" width="1.02" height="1.02" fill="#001eff"/><rect x="152" y="37" width="1.02" height="1.02" fill="#5200ff"/><rect x="152" y="38" width="1.02" height="1.02" fill="#009eff"/><rect x="152" y="39" width="1.02" height="1.02" fill="#0017ff"/><rect x="152" y="40" width="1.02" height="1.02" fill="#0012ff"/><rect x="152" y="41" width="1.02" height="1.02" fill="#1500ff"/><rect x="152" y="42" width="1.02" height="1.02" fill="#005dff"/><rect x="152" y="43" width="1.02" height="1.02" fill="#0085ff"/><rect x="152" y="44" width="1.02" height="1.02" fill="#2f00ff"/><rect x="152" y="45" width="1.02" height="1.02" fill="#1200ff"/><rect x="152" y="46" width="1.02" height="1.02" fill="#2500ff"/><rect x="152" y="47" width="1.02" height="1.02" fill="#003dff"/><rect x="152" y="48" width="1.02" height="1.02" fill="#00ffef"/><rect x="152" y="49" width="1.02" height="1.02" fill="#2600ff"/><rect x="152" y="50" width="1.02" height="1.02" fill="#0052ff"/><rect x="152" y="51" width="1.02" height="1.02" fill="#0090ff"/><rect x="152" y="52" width="1.02" height="1.02" fill="#5300ff"/><rect x="152" y="53" width="1.02" height="1.02" fill="#1700ff"/><rect x="152" y="54" width="1.02" height="1.02" fill="#4000ff"/><rect x="152" y="55" width="1.02" height="1.02" fill="#0022ff"/><rect x="152" y="56" width="1.02" height="1.02" fill="#4d00ff"/><rect x="152" y="57" width="1.02" height="1.02" fill="#003bff"/><rect x="152" y="58" width="1.02" height="1.02" fill="#002bff"/><rect x="152" y="59" width="1.02" height="1.02" fill="#1e00ff"/><rect x="152" y="60" width="1.02" height="1.02" fill="#3800ff"/><rect x="152" y="61" width="1.02" height="1.02" fill="#0039ff"/><rect x="152" y="62" width="1.02" height="1.02" fill="#0f00ff"/><rect x="152" y="63" width="1.02" height="1.02" fill="#3e00ff"/><rect x="153" y="0" width="1.02" height="1.02" fill="#0018ff"/><rect x="153" y="1" width="1.02" height="1.02" fill="#002aff"/><rect x="153" y="2" width="1.02" height="1.02" fill="#2d00ff"/><rect x="153" y="3" width="1.02" height="1.02" fill="#0044ff"/><rect x="153" y="4" width="1.02" height="1.02" fill="#2d00ff"/><rect x="153" y="5" width="1.02" height="1.02" fill="#0094ff"/><rect x="153" y="6" width="1.02" height="1.02" fill="#0081ff"/><rect x="153" y="7" width="1.02" height="1.02" fill="#00a8ff"/><rect x="153" y="8" width="1.02" height="1.02" fill="#1200ff"/><rect x="153" y="9" width="1.02" height="1.02" fill="#0040ff"/><rect x="153" y="10" width="1.02" height="1.02" fill="#00b7ff"/><rect x="153" y="11" width="1.02" height="1.02" fill="#0800ff"/><rect x="153" y="12" width="1.02" height="1.02" fill="#0092ff"/><rect x="153" y="13" width="1.02" height="1.02" fill="#0025ff"/><rect x="153" y="14" width="1.02" height="1.02" fill="#0058ff"/><rect x="153" y="15" width="1.02" height="1.02" fill="#4600ff"/><rect x="153" y="16" width="1.02" height="1.02" fill="#2100ff"/><rect x="153" y="17" width="1.02" height="1.02" fill="#3e00ff"/><rect x="153" y="18" width="1.02" height="1.02" fill="#00aaff"/><rect x="153" y="19" width="1.02" height="1.02" fill="#0085ff"/><rect x="153" y="20" width="1.02" height="1.02" fill="#2c00ff"/><rect x="153" y="21" width="1.02" height="1.02" fill="#1400ff"/><rect x="153" y="22" width="1.02" height="1.02" fill="#0024ff"/><rect x="153" y="23" width="1.02" height="1.02" fill="#0049ff"/><rect x="153" y="24" width="1.02" height="1.02" fill="#00ffc9"/><rect x="153" y="25" width="1.02" height="1.02" fill="#006dff"/><rect x="153" y="26" width="1.02" height="1.02" fill="#1c00ff"/><rect x="153" y="27" width="1.02" height="1.02" fill="#00d8ff"/><rect x="153" y="28" width="1.02" height="1.02" fill="#00acff"/><rect x="153" y="29" width="1.02" height="1.02" fill="#0087ff"/><rect x="153" y="30" width="1.02" height="1.02" fill="#00e1ff"/><rect x="153" y="31" width="1.02" height="1.02" fill="#008cff"/><rect x="153" y="32" width="1.02" height="1.02" fill="#00ff99"/><rect x="153" y="33" width="1.02" height="1.02" fill="#00b5ff"/><rect x="153" y="34" width="1.02" height="1.02" fill="#4000ff"/><rect x="153" y="35" width="1.02" height="1.02" fill="#00a4ff"/><rect x="153" y="36" width="1.02" height="1.02" fill="#0e00ff"/><rect x="153" y="37" width="1.02" height="1.02" fill="#0086ff"/><rect x="153" y="38" width="1.02" height="1.02" fill="#5300ff"/><rect x="153" y="39" width="1.02" height="1.02" fill="#0008ff"/><rect x="153" y="40" width="1.02" height="1.02" fill="#0001ff"/><rect x="153" y="41" width="1.02" height="1.02" fill="#0086ff"/><rect x="153" y="42" width="1.02" height="1.02" fill="#0057ff"/><rect x="153" y="43" width="1.02" height="1.02" fill="#3400ff"/><rect x="153" y="44" width="1.02" height="1.02" fill="#0085ff"/><rect x="153" y="45" width="1.02" height="1.02" fill="#009cff"/><rect x="153" y="46" width="1.02" height="1.02" fill="#0049ff"/><rect x="153" y="47" width="1.02" height="1.02" fill="#006bff"/><rect x="153" y="48" width="1.02" height="1.02" fill="#003aff"/><rect x="153" y="49" width="1.02" height="1.02" fill="#0077ff"/><rect x="153" y="50" width="1.02" height="1.02" fill="#1e00ff"/><rect x="153" y="51" width="1.02" height="1.02" fill="#0057ff"/><rect x="153" y="52" width="1.02" height="1.02" fill="#5100ff"/><rect x="153" y="53" width="1.02" height="1.02" fill="#0079ff"/><rect x="153" y="54" width="1.02" height="1.02" fill="#0016ff"/><rect x="153" y="55" width="1.02" height="1.02" fill="#005eff"/><rect x="153" y="56" width="1.02" height="1.02" fill="#3a00ff"/><rect x="153" y="57" width="1.02" height="1.02" fill="#2700ff"/><rect x="153" y="58" width="1.02" height="1.02" fill="#008dff"/><rect x="153" y="59" width="1.02" height="1.02" fill="#0039ff"/><rect x="153" y="60" width="1.02" height="1.02" fill="#5800ff"/><rect x="153" y="61" width="1.02" height="1.02" fill="#1e00ff"/><rect x="153" y="62" width="1.02" height="1.02" fill="#0053ff"/><rect x="153" y="63" width="1.02" height="1.02" fill="#00beff"/><rect x="154" y="0" width="1.02" height="1.02" fill="#0083ff"/><rect x="154" y="1" width="1.02" height="1.02" fill="#0043ff"/><rect x="154" y="2" width="1.02" height="1.02" fill="#00a4ff"/><rect x="154" y="3" width="1.02" height="1.02" fill="#0700ff"/><rect x="154" y="4" width="1.02" height="1.02" fill="#002fff"/><rect x="154" y="5" width="1.02" height="1.02" fill="#3500ff"/><rect x="154" y="6" width="1.02" height="1.02" fill="#0500ff"/><rect x="154" y="7" width="1.02" height="1.02" fill="#2400ff"/><rect x="154" y="8" width="1.02" height="1.02" fill="#0066ff"/><rect x="154" y="9" width="1.02" height="1.02" fill="#009aff"/><rect x="154" y="10" width="1.02" height="1.02" fill="#00b3ff"/><rect x="154" y="11" width="1.02" height="1.02" fill="#2800ff"/><rect x="154" y="12" width="1.02" height="1.02" fill="#0077ff"/><rect x="154" y="13" width="1.02" height="1.02" fill="#1f00ff"/><rect x="154" y="14" width="1.02" height="1.02" fill="#0061ff"/><rect x="154" y="15" width="1.02" height="1.02" fill="#2700ff"/><rect x="154" y="16" width="1.02" height="1.02" fill="#3700ff"/><rect x="154" y="17" width="1.02" height="1.02" fill="#002fff"/><rect x="154" y="18" width="1.02" height="1.02" fill="#0059ff"/><rect x="154" y="19" width="1.02" height="1.02" fill="#1b00ff"/><rect x="154" y="20" width="1.02" height="1.02" fill="#0020ff"/><rect x="154" y="21" width="1.02" height="1.02" fill="#0062ff"/><rect x="154" y="22" width="1.02" height="1.02" fill="#0050ff"/><rect x="154" y="23" width="1.02" height="1.02" fill="#0029ff"/><rect x="154" y="24" width="1.02" height="1.02" fill="#0026ff"/><rect x="154" y="25" width="1.02" height="1.02" fill="#0061ff"/><rect x="154" y="26" width="1.02" height="1.02" fill="#004fff"/><rect x="154" y="27" width="1.02" height="1.02" fill="#2800ff"/><rect x="154" y="28" width="1.02" height="1.02" fill="#0072ff"/><rect x="154" y="29" width="1.02" height="1.02" fill="#0051ff"/><rect x="154" y="30" width="1.02" height="1.02" fill="#4600ff"/><rect x="154" y="31" width="1.02" height="1.02" fill="#1b00ff"/><rect x="154" y="32" width="1.02" height="1.02" fill="#0059ff"/><rect x="154" y="33" width="1.02" height="1.02" fill="#002cff"/><rect x="154" y="34" width="1.02" height="1.02" fill="#2e00ff"/><rect x="154" y="35" width="1.02" height="1.02" fill="#00a0ff"/><rect x="154" y="36" width="1.02" height="1.02" fill="#2c00ff"/><rect x="154" y="37" width="1.02" height="1.02" fill="#0009ff"/><rect x="154" y="38" width="1.02" height="1.02" fill="#009cff"/><rect x="154" y="39" width="1.02" height="1.02" fill="#00a9ff"/><rect x="154" y="40" width="1.02" height="1.02" fill="#0011ff"/><rect x="154" y="41" width="1.02" height="1.02" fill="#4100ff"/><rect x="154" y="42" width="1.02" height="1.02" fill="#0000ff"/><rect x="154" y="43" width="1.02" height="1.02" fill="#3f00ff"/><rect x="154" y="44" width="1.02" height="1.02" fill="#0018ff"/><rect x="154" y="45" width="1.02" height="1.02" fill="#009cff"/><rect x="154" y="46" width="1.02" height="1.02" fill="#0050ff"/><rect x="154" y="47" width="1.02" height="1.02" fill="#001eff"/><rect x="154" y="48" width="1.02" height="1.02" fill="#1900ff"/><rect x="154" y="49" width="1.02" height="1.02" fill="#006bff"/><rect x="154" y="50" width="1.02" height="1.02" fill="#003fff"/><rect x="154" y="51" width="1.02" height="1.02" fill="#004fff"/><rect x="154" y="52" width="1.02" height="1.02" fill="#001eff"/><rect x="154" y="53" width="1.02" height="1.02" fill="#0033ff"/><rect x="154" y="54" width="1.02" height="1.02" fill="#0009ff"/><rect x="154" y="55" width="1.02" height="1.02" fill="#0009ff"/><rect x="154" y="56" width="1.02" height="1.02" fill="#3d00ff"/><rect x="154" y="57" width="1.02" height="1.02" fill="#005cff"/><rect x="154" y="58" width="1.02" height="1.02" fill="#0035ff"/><rect x="154" y="59" width="1.02" height="1.02" fill="#002dff"/><rect x="154" y="60" width="1.02" height="1.02" fill="#0075ff"/><rect x="154" y="61" width="1.02" height="1.02" fill="#0077ff"/><rect x="154" y="62" width="1.02" height="1.02" fill="#1c00ff"/><rect x="154" y="63" width="1.02" height="1.02" fill="#1500ff"/><rect x="155" y="0" width="1.02" height="1.02" fill="#007bff"/><rect x="155" y="1" width="1.02" height="1.02" fill="#006dff"/><rect x="155" y="2" width="1.02" height="1.02" fill="#006aff"/><rect x="155" y="3" width="1.02" height="1.02" fill="#0074ff"/><rect x="155" y="4" width="1.02" height="1.02" fill="#0003ff"/><rect x="155" y="5" width="1.02" height="1.02" fill="#2000ff"/><rect x="155" y="6" width="1.02" height="1.02" fill="#006bff"/><rect x="155" y="7" width="1.02" height="1.02" fill="#0077ff"/><rect x="155" y="8" width="1.02" height="1.02" fill="#5800ff"/><rect x="155" y="9" width="1.02" height="1.02" fill="#5000ff"/><rect x="155" y="10" width="1.02" height="1.02" fill="#0046ff"/><rect x="155" y="11" width="1.02" height="1.02" fill="#00f4ff"/><rect x="155" y="12" width="1.02" height="1.02" fill="#0004ff"/><rect x="155" y="13" width="1.02" height="1.02" fill="#00a2ff"/><rect x="155" y="14" width="1.02" height="1.02" fill="#00a4ff"/><rect x="155" y="15" width="1.02" height="1.02" fill="#0019ff"/><rect x="155" y="16" width="1.02" height="1.02" fill="#3100ff"/><rect x="155" y="17" width="1.02" height="1.02" fill="#008aff"/><rect x="155" y="18" width="1.02" height="1.02" fill="#0044ff"/><rect x="155" y="19" width="1.02" height="1.02" fill="#0037ff"/><rect x="155" y="20" width="1.02" height="1.02" fill="#00abff"/><rect x="155" y="21" width="1.02" height="1.02" fill="#0071ff"/><rect x="155" y="22" width="1.02" height="1.02" fill="#0077ff"/><rect x="155" y="23" width="1.02" height="1.02" fill="#0077ff"/><rect x="155" y="24" width="1.02" height="1.02" fill="#002bff"/><rect x="155" y="25" width="1.02" height="1.02" fill="#0045ff"/><rect x="155" y="26" width="1.02" height="1.02" fill="#0082ff"/><rect x="155" y="27" width="1.02" height="1.02" fill="#005cff"/><rect x="155" y="28" width="1.02" height="1.02" fill="#000fff"/><rect x="155" y="29" width="1.02" height="1.02" fill="#2c00ff"/><rect x="155" y="30" width="1.02" height="1.02" fill="#00b9ff"/><rect x="155" y="31" width="1.02" height="1.02" fill="#0c00ff"/><rect x="155" y="32" width="1.02" height="1.02" fill="#2300ff"/><rect x="155" y="33" width="1.02" height="1.02" fill="#5a00ff"/><rect x="155" y="34" width="1.02" height="1.02" fill="#1300ff"/><rect x="155" y="35" width="1.02" height="1.02" fill="#3f00ff"/><rect x="155" y="36" width="1.02" height="1.02" fill="#006aff"/><rect x="155" y="37" width="1.02" height="1.02" fill="#00adff"/><rect x="155" y="38" width="1.02" height="1.02" fill="#0049ff"/><rect x="155" y="39" width="1.02" height="1.02" fill="#002cff"/><rect x="155" y="40" width="1.02" height="1.02" fill="#008bff"/><rect x="155" y="41" width="1.02" height="1.02" fill="#00b0ff"/><rect x="155" y="42" width="1.02" height="1.02" fill="#008bff"/><rect x="155" y="43" width="1.02" height="1.02" fill="#005cff"/><rect x="155" y="44" width="1.02" height="1.02" fill="#00acff"/><rect x="155" y="45" width="1.02" height="1.02" fill="#0093ff"/><rect x="155" y="46" width="1.02" height="1.02" fill="#2700ff"/><rect x="155" y="47" width="1.02" height="1.02" fill="#0037ff"/><rect x="155" y="48" width="1.02" height="1.02" fill="#0004ff"/><rect x="155" y="49" width="1.02" height="1.02" fill="#2c00ff"/><rect x="155" y="50" width="1.02" height="1.02" fill="#4900ff"/><rect x="155" y="51" width="1.02" height="1.02" fill="#005eff"/><rect x="155" y="52" width="1.02" height="1.02" fill="#4e00ff"/><rect x="155" y="53" width="1.02" height="1.02" fill="#004fff"/><rect x="155" y="54" width="1.02" height="1.02" fill="#0800ff"/><rect x="155" y="55" width="1.02" height="1.02" fill="#1b00ff"/><rect x="155" y="56" width="1.02" height="1.02" fill="#3400ff"/><rect x="155" y="57" width="1.02" height="1.02" fill="#2200ff"/><rect x="155" y="58" width="1.02" height="1.02" fill="#0001ff"/><rect x="155" y="59" width="1.02" height="1.02" fill="#0600ff"/><rect x="155" y="60" width="1.02" height="1.02" fill="#008cff"/><rect x="155" y="61" width="1.02" height="1.02" fill="#0056ff"/><rect x="155" y="62" width="1.02" height="1.02" fill="#0011ff"/><rect x="155" y="63" width="1.02" height="1.02" fill="#0048ff"/><rect x="156" y="0" width="1.02" height="1.02" fill="#1100ff"/><rect x="156" y="1" width="1.02" height="1.02" fill="#0046ff"/><rect x="156" y="2" width="1.02" height="1.02" fill="#0077ff"/><rect x="156" y="3" width="1.02" height="1.02" fill="#0600ff"/><rect x="156" y="4" width="1.02" height="1.02" fill="#0085ff"/><rect x="156" y="5" width="1.02" height="1.02" fill="#1f00ff"/><rect x="156" y="6" width="1.02" height="1.02" fill="#1000ff"/><rect x="156" y="7" width="1.02" height="1.02" fill="#1600ff"/><rect x="156" y="8" width="1.02" height="1.02" fill="#5800ff"/><rect x="156" y="9" width="1.02" height="1.02" fill="#1300ff"/><rect x="156" y="10" width="1.02" height="1.02" fill="#0037ff"/><rect x="156" y="11" width="1.02" height="1.02" fill="#000eff"/><rect x="156" y="12" width="1.02" height="1.02" fill="#0062ff"/><rect x="156" y="13" width="1.02" height="1.02" fill="#2900ff"/><rect x="156" y="14" width="1.02" height="1.02" fill="#2500ff"/><rect x="156" y="15" width="1.02" height="1.02" fill="#008dff"/><rect x="156" y="16" width="1.02" height="1.02" fill="#0033ff"/><rect x="156" y="17" width="1.02" height="1.02" fill="#4800ff"/><rect x="156" y="18" width="1.02" height="1.02" fill="#0001ff"/><rect x="156" y="19" width="1.02" height="1.02" fill="#001fff"/><rect x="156" y="20" width="1.02" height="1.02" fill="#000bff"/><rect x="156" y="21" width="1.02" height="1.02" fill="#001cff"/><rect x="156" y="22" width="1.02" height="1.02" fill="#0037ff"/><rect x="156" y="23" width="1.02" height="1.02" fill="#003eff"/><rect x="156" y="24" width="1.02" height="1.02" fill="#006fff"/><rect x="156" y="25" width="1.02" height="1.02" fill="#004cff"/><rect x="156" y="26" width="1.02" height="1.02" fill="#0074ff"/><rect x="156" y="27" width="1.02" height="1.02" fill="#3300ff"/><rect x="156" y="28" width="1.02" height="1.02" fill="#00b4ff"/><rect x="156" y="29" width="1.02" height="1.02" fill="#0700ff"/><rect x="156" y="30" width="1.02" height="1.02" fill="#0011ff"/><rect x="156" y="31" width="1.02" height="1.02" fill="#2f00ff"/><rect x="156" y="32" width="1.02" height="1.02" fill="#007eff"/><rect x="156" y="33" width="1.02" height="1.02" fill="#0081ff"/><rect x="156" y="34" width="1.02" height="1.02" fill="#3800ff"/><rect x="156" y="35" width="1.02" height="1.02" fill="#0001ff"/><rect x="156" y="36" width="1.02" height="1.02" fill="#1400ff"/><rect x="156" y="37" width="1.02" height="1.02" fill="#5000ff"/><rect x="156" y="38" width="1.02" height="1.02" fill="#0087ff"/><rect x="156" y="39" width="1.02" height="1.02" fill="#2700ff"/><rect x="156" y="40" width="1.02" height="1.02" fill="#004cff"/><rect x="156" y="41" width="1.02" height="1.02" fill="#0300ff"/><rect x="156" y="42" width="1.02" height="1.02" fill="#1700ff"/><rect x="156" y="43" width="1.02" height="1.02" fill="#0500ff"/><rect x="156" y="44" width="1.02" height="1.02" fill="#3a00ff"/><rect x="156" y="45" width="1.02" height="1.02" fill="#4400ff"/><rect x="156" y="46" width="1.02" height="1.02" fill="#0068ff"/><rect x="156" y="47" width="1.02" height="1.02" fill="#002eff"/><rect x="156" y="48" width="1.02" height="1.02" fill="#007dff"/><rect x="156" y="49" width="1.02" height="1.02" fill="#002dff"/><rect x="156" y="50" width="1.02" height="1.02" fill="#000fff"/><rect x="156" y="51" width="1.02" height="1.02" fill="#0100ff"/><rect x="156" y="52" width="1.02" height="1.02" fill="#0700ff"/><rect x="156" y="53" width="1.02" height="1.02" fill="#0058ff"/><rect x="156" y="54" width="1.02" height="1.02" fill="#00ffd8"/><rect x="156" y="55" width="1.02" height="1.02" fill="#007cff"/><rect x="156" y="56" width="1.02" height="1.02" fill="#0086ff"/><rect x="156" y="57" width="1.02" height="1.02" fill="#1500ff"/><rect x="156" y="58" width="1.02" height="1.02" fill="#0016ff"/><rect x="156" y="59" width="1.02" height="1.02" fill="#3700ff"/><rect x="156" y="60" width="1.02" height="1.02" fill="#002eff"/><rect x="156" y="61" width="1.02" height="1.02" fill="#0e00ff"/><rect x="156" y="62" width="1.02" height="1.02" fill="#0037ff"/><rect x="157" y="0" width="1.02" height="1.02" fill="#003dff"/><rect x="157" y="1" width="1.02" height="1.02" fill="#0024ff"/><rect x="157" y="2" width="1.02" height="1.02" fill="#002dff"/><rect x="157" y="3" width="1.02" height="1.02" fill="#000aff"/><rect x="157" y="4" width="1.02" height="1.02" fill="#0028ff"/><rect x="157" y="5" width="1.02" height="1.02" fill="#003fff"/><rect x="157" y="6" width="1.02" height="1.02" fill="#001aff"/><rect x="157" y="7" width="1.02" height="1.02" fill="#0000ff"/><rect x="157" y="8" width="1.02" height="1.02" fill="#0c00ff"/><rect x="157" y="9" width="1.02" height="1.02" fill="#1b00ff"/><rect x="157" y="10" width="1.02" height="1.02" fill="#3900ff"/><rect x="157" y="11" width="1.02" height="1.02" fill="#004aff"/><rect x="157" y="12" width="1.02" height="1.02" fill="#2d00ff"/><rect x="157" y="13" width="1.02" height="1.02" fill="#0052ff"/><rect x="157" y="14" width="1.02" height="1.02" fill="#003aff"/><rect x="157" y="15" width="1.02" height="1.02" fill="#0028ff"/><rect x="157" y="17" width="1.02" height="1.02" fill="#0009ff"/><rect x="157" y="19" width="1.02" height="1.02" fill="#4c00ff"/><rect x="157" y="20" width="1.02" height="1.02" fill="#3a00ff"/><rect x="157" y="21" width="1.02" height="1.02" fill="#2700ff"/><rect x="157" y="22" width="1.02" height="1.02" fill="#2600ff"/><rect x="157" y="23" width="1.02" height="1.02" fill="#0041ff"/><rect x="157" y="24" width="1.02" height="1.02" fill="#000aff"/><rect x="157" y="25" width="1.02" height="1.02" fill="#0c00ff"/><rect x="157" y="26" width="1.02" height="1.02" fill="#0003ff"/><rect x="157" y="27" width="1.02" height="1.02" fill="#2900ff"/><rect x="157" y="28" width="1.02" height="1.02" fill="#5600ff"/><rect x="157" y="29" width="1.02" height="1.02" fill="#0087ff"/><rect x="157" y="30" width="1.02" height="1.02" fill="#0045ff"/><rect x="157" y="31" width="1.02" height="1.02" fill="#0079ff"/><rect x="157" y="32" width="1.02" height="1.02" fill="#2000ff"/><rect x="157" y="33" width="1.02" height="1.02" fill="#00c9ff"/><rect x="157" y="34" width="1.02" height="1.02" fill="#2500ff"/><rect x="157" y="36" width="1.02" height="1.02" fill="#3b00ff"/><rect x="157" y="37" width="1.02" height="1.02" fill="#5800ff"/><rect x="157" y="38" width="1.02" height="1.02" fill="#2800ff"/><rect x="157" y="39" width="1.02" height="1.02" fill="#2200ff"/><rect x="157" y="40" width="1.02" height="1.02" fill="#2e00ff"/><rect x="157" y="41" width="1.02" height="1.02" fill="#5500ff"/><rect x="157" y="42" width="1.02" height="1.02" fill="#3000ff"/><rect x="157" y="43" width="1.02" height="1.02" fill="#0013ff"/><rect x="157" y="44" width="1.02" height="1.02" fill="#2100ff"/><rect x="157" y="45" width="1.02" height="1.02" fill="#0014ff"/><rect x="157" y="46" width="1.02" height="1.02" fill="#4d00ff"/><rect x="157" y="47" width="1.02" height="1.02" fill="#0036ff"/><rect x="157" y="49" width="1.02" height="1.02" fill="#2600ff"/><rect x="157" y="50" width="1.02" height="1.02" fill="#0028ff"/><rect x="157" y="51" width="1.02" height="1.02" fill="#3400ff"/><rect x="157" y="52" width="1.02" height="1.02" fill="#3200ff"/><rect x="157" y="53" width="1.02" height="1.02" fill="#4a00ff"/><rect x="157" y="54" width="1.02" height="1.02" fill="#4100ff"/><rect x="157" y="55" width="1.02" height="1.02" fill="#001aff"/><rect x="157" y="56" width="1.02" height="1.02" fill="#003cff"/><rect x="157" y="57" width="1.02" height="1.02" fill="#0035ff"/><rect x="157" y="58" width="1.02" height="1.02" fill="#2a00ff"/><rect x="157" y="59" width="1.02" height="1.02" fill="#0700ff"/><rect x="157" y="60" width="1.02" height="1.02" fill="#0053ff"/><rect x="157" y="61" width="1.02" height="1.02" fill="#0029ff"/><rect x="157" y="62" width="1.02" height="1.02" fill="#0300ff"/><rect x="157" y="63" width="1.02" height="1.02" fill="#0009ff"/><rect x="158" y="0" width="1.02" height="1.02" fill="#4d00ff"/><rect x="158" y="1" width="1.02" height="1.02" fill="#2400ff"/><rect x="158" y="3" width="1.02" height="1.02" fill="#0f00ff"/><rect x="158" y="4" width="1.02" height="1.02" fill="#1700ff"/><rect x="158" y="5" width="1.02" height="1.02" fill="#1600ff"/><rect x="158" y="6" width="1.02" height="1.02" fill="#3800ff"/><rect x="158" y="7" width="1.02" height="1.02" fill="#1c00ff"/><rect x="158" y="8" width="1.02" height="1.02" fill="#0c00ff"/><rect x="158" y="9" width="1.02" height="1.02" fill="#3f00ff"/><rect x="158" y="10" width="1.02" height="1.02" fill="#4f00ff"/><rect x="158" y="11" width="1.02" height="1.02" fill="#2300ff"/><rect x="158" y="12" width="1.02" height="1.02" fill="#4100ff"/><rect x="158" y="13" width="1.02" height="1.02" fill="#2200ff"/><rect x="158" y="14" width="1.02" height="1.02" fill="#5000ff"/><rect x="158" y="15" width="1.02" height="1.02" fill="#5000ff"/><rect x="158" y="16" width="1.02" height="1.02" fill="#0900ff"/><rect x="158" y="18" width="1.02" height="1.02" fill="#2f00ff"/><rect x="158" y="20" width="1.02" height="1.02" fill="#1300ff"/><rect x="158" y="21" width="1.02" height="1.02" fill="#4100ff"/><rect x="158" y="22" width="1.02" height="1.02" fill="#3700ff"/><rect x="158" y="23" width="1.02" height="1.02" fill="#1c00ff"/><rect x="158" y="24" width="1.02" height="1.02" fill="#3300ff"/><rect x="158" y="25" width="1.02" height="1.02" fill="#1200ff"/><rect x="158" y="26" width="1.02" height="1.02" fill="#4400ff"/><rect x="158" y="27" width="1.02" height="1.02" fill="#0900ff"/><rect x="158" y="28" width="1.02" height="1.02" fill="#1900ff"/><rect x="158" y="29" width="1.02" height="1.02" fill="#2400ff"/><rect x="158" y="30" width="1.02" height="1.02" fill="#2400ff"/><rect x="158" y="32" width="1.02" height="1.02" fill="#4400ff"/><rect x="158" y="33" width="1.02" height="1.02" fill="#1f00ff"/><rect x="158" y="34" width="1.02" height="1.02" fill="#4900ff"/><rect x="158" y="35" width="1.02" height="1.02" fill="#5600ff"/><rect x="158" y="36" width="1.02" height="1.02" fill="#2200ff"/><rect x="158" y="38" width="1.02" height="1.02" fill="#3100ff"/><rect x="158" y="39" width="1.02" height="1.02" fill="#1b00ff"/><rect x="158" y="40" width="1.02" height="1.02" fill="#0019ff"/><rect x="158" y="41" width="1.02" height="1.02" fill="#5300ff"/><rect x="158" y="43" width="1.02" height="1.02" fill="#1600ff"/><rect x="158" y="44" width="1.02" height="1.02" fill="#2800ff"/><rect x="158" y="45" width="1.02" height="1.02" fill="#3e00ff"/><rect x="158" y="46" width="1.02" height="1.02" fill="#1600ff"/><rect x="158" y="49" width="1.02" height="1.02" fill="#2b00ff"/><rect x="158" y="51" width="1.02" height="1.02" fill="#5600ff"/><rect x="158" y="52" width="1.02" height="1.02" fill="#3d00ff"/><rect x="158" y="53" width="1.02" height="1.02" fill="#4b00ff"/><rect x="158" y="54" width="1.02" height="1.02" fill="#4400ff"/><rect x="158" y="55" width="1.02" height="1.02" fill="#3000ff"/><rect x="158" y="58" width="1.02" height="1.02" fill="#2000ff"/><rect x="158" y="59" width="1.02" height="1.02" fill="#3700ff"/><rect x="158" y="60" width="1.02" height="1.02" fill="#0007ff"/><rect x="158" y="61" width="1.02" height="1.02" fill="#3500ff"/><rect x="158" y="62" width="1.02" height="1.02" fill="#2f00ff"/><rect x="158" y="63" width="1.02" height="1.02" fill="#3a00ff"/><rect x="159" y="1" width="1.02" height="1.02" fill="#4d00ff"/><rect x="159" y="2" width="1.02" height="1.02" fill="#5200ff"/><rect x="159" y="3" width="1.02" height="1.02" fill="#5a00ff"/><rect x="159" y="6" width="1.02" height="1.02" fill="#5500ff"/><rect x="159" y="7" width="1.02" height="1.02" fill="#5000ff"/><rect x="159" y="9" width="1.02" height="1.02" fill="#5900ff"/><rect x="159" y="10" width="1.02" height="1.02" fill="#5700ff"/><rect x="159" y="12" width="1.02" height="1.02" fill="#5a00ff"/><rect x="159" y="13" width="1.02" height="1.02" fill="#4d00ff"/><rect x="159" y="15" width="1.02" height="1.02" fill="#5200ff"/><rect x="159" y="17" width="1.02" height="1.02" fill="#5100ff"/><rect x="159" y="24" width="1.02" height="1.02" fill="#0014ff"/><rect x="159" y="26" width="1.02" height="1.02" fill="#4200ff"/><rect x="159" y="28" width="1.02" height="1.02" fill="#5100ff"/><rect x="159" y="29" width="1.02" height="1.02" fill="#0500ff"/><rect x="159" y="31" width="1.02" height="1.02" fill="#5a00ff"/><rect x="159" y="34" width="1.02" height="1.02" fill="#5200ff"/><rect x="159" y="35" width="1.02" height="1.02" fill="#4d00ff"/><rect x="159" y="37" width="1.02" height="1.02" fill="#5300ff"/><rect x="159" y="41" width="1.02" height="1.02" fill="#4e00ff"/><rect x="159" y="42" width="1.02" height="1.02" fill="#5900ff"/><rect x="159" y="45" width="1.02" height="1.02" fill="#5200ff"/><rect x="159" y="46" width="1.02" height="1.02" fill="#1c00ff"/><rect x="159" y="47" width="1.02" height="1.02" fill="#4c00ff"/><rect x="159" y="50" width="1.02" height="1.02" fill="#4e00ff"/><rect x="159" y="51" width="1.02" height="1.02" fill="#4d00ff"/><rect x="159" y="55" width="1.02" height="1.02" fill="#5800ff"/><rect x="159" y="56" width="1.02" height="1.02" fill="#4f00ff"/><rect x="159" y="60" width="1.02" height="1.02" fill="#0010ff"/><rect x="159" y="61" width="1.02" height="1.02" fill="#5900ff"/><rect x="160" y="11" width="1.02" height="1.02" fill="#2200ff"/><rect x="160" y="31" width="1.02" height="1.02" fill="#1700ff"/><rect x="160" y="37" width="1.02" height="1.02" fill="#0a00ff"/><rect x="160" y="60" width="1.02" height="1.02" fill="#3000ff"/><rect x="161" y="3" width="1.02" height="1.02" fill="#2000ff"/><rect x="161" y="37" width="1.02" height="1.02" fill="#4f00ff"/><rect x="162" y="1" width="1.02" height="1.02" fill="#3a00ff"/><rect x="162" y="17" width="1.02" height="1.02" fill="#5900ff"/><rect x="162" y="46" width="1.02" height="1.02" fill="#4800ff"/><rect x="162" y="47" width="1.02" height="1.02" fill="#5600ff"/><rect x="162" y="57" width="1.02" height="1.02" fill="#4700ff"/><rect x="163" y="48" width="1.02" height="1.02" fill="#3000ff"/><rect x="163" y="51" width="1.02" height="1.02" fill="#5600ff"/><rect x="163" y="54" width="1.02" height="1.02" fill="#1b00ff"/><rect x="163" y="62" width="1.02" height="1.02" fill="#5100ff"/><rect x="165" y="33" width="1.02" height="1.02" fill="#3800ff"/><rect x="165" y="60" width="1.02" height="1.02" fill="#4000ff"/><rect x="167" y="14" width="1.02" height="1.02" fill="#5700ff"/><rect x="167" y="40" width="1.02" height="1.02" fill="#5600ff"/><rect x="167" y="53" width="1.02" height="1.02" fill="#3c00ff"/><rect x="168" y="37" width="1.02" height="1.02" fill="#4000ff"/><rect x="169" y="25" width="1.02" height="1.02" fill="#1c00ff"/><rect x="170" y="19" width="1.02" height="1.02" fill="#3100ff"/><rect x="170" y="44" width="1.02" height="1.02" fill="#2f00ff"/><rect x="171" y="19" width="1.02" height="1.02" fill="#5a00ff"/><rect x="171" y="37" width="1.02" height="1.02" fill="#4100ff"/><rect x="171" y="44" width="1.02" height="1.02" fill="#2c00ff"/><rect x="172" y="41" width="1.02" height="1.02" fill="#1f00ff"/><rect x="172" y="45" width="1.02" height="1.02" fill="#4600ff"/><rect x="173" y="9" width="1.02" height="1.02" fill="#3400ff"/><rect x="174" y="41" width="1.02" height="1.02" fill="#3f00ff"/><rect x="175" y="4" width="1.02" height="1.02" fill="#3300ff"/><rect x="177" y="5" width="1.02" height="1.02" fill="#5700ff"/><rect x="177" y="7" width="1.02" height="1.02" fill="#1500ff"/><rect x="177" y="45" width="1.02" height="1.02" fill="#1400ff"/><rect x="177" y="61" width="1.02" height="1.02" fill="#5100ff"/><rect x="178" y="6" width="1.02" height="1.02" fill="#5700ff"/><rect x="178" y="49" width="1.02" height="1.02" fill="#5600ff"/><rect x="179" y="11" width="1.02" height="1.02" fill="#5200ff"/><rect x="182" y="2" width="1.02" height="1.02" fill="#4c00ff"/><rect x="182" y="7" width="1.02" height="1.02" fill="#4a00ff"/><rect x="182" y="20" width="1.02" height="1.02" fill="#2800ff"/><rect x="182" y="50" width="1.02" height="1.02" fill="#3000ff"/><rect x="183" y="18" width="1.02" height="1.02" fill="#3200ff"/><rect x="183" y="49" width="1.02" height="1.02" fill="#2500ff"/><rect x="186" y="13" width="1.02" height="1.02" fill="#1400ff"/><rect x="189" y="19" width="1.02" height="1.02" fill="#5400ff"/><rect x="190" y="34" width="1.02" height="1.02" fill="#2400ff"/><rect x="192" y="17" width="1.02" height="1.02" fill="#3c00ff"/><rect x="192" y="41" width="1.02" height="1.02" fill="#4500ff"/><rect x="195" y="56" width="1.02" height="1.02" fill="#1900ff"/><rect x="196" y="5" width="1.02" height="1.02" fill="#4800ff"/><rect x="196" y="32" width="1.02" height="1.02" fill="#2100ff"/><rect x="197" y="42" width="1.02" height="1.02" fill="#2400ff"/><rect x="200" y="43" width="1.02" height="1.02" fill="#3400ff"/><rect x="200" y="60" width="1.02" height="1.02" fill="#3e00ff"/><rect x="204" y="58" width="1.02" height="1.02" fill="#5600ff"/><rect x="205" y="4" width="1.02" height="1.02" fill="#3000ff"/><rect x="207" y="38" width="1.02" height="1.02" fill="#5100ff"/><rect x="207" y="61" width="1.02" height="1.02" fill="#4700ff"/><rect x="208" y="3" width="1.02" height="1.02" fill="#4c00ff"/><rect x="208" y="63" width="1.02" height="1.02" fill="#4500ff"/><rect x="209" y="34" width="1.02" height="1.02" fill="#3800ff"/><rect x="212" y="8" width="1.02" height="1.02" fill="#4c00ff"/><rect x="212" y="9" width="1.02" height="1.02" fill="#2500ff"/><rect x="213" y="28" width="1.02" height="1.02" fill="#4f00ff"/><rect x="215" y="6" width="1.02" height="1.02" fill="#2600ff"/><rect x="215" y="40" width="1.02" height="1.02" fill="#3c00ff"/><rect x="218" y="35" width="1.02" height="1.02" fill="#4600ff"/><rect x="218" y="63" width="1.02" height="1.02" fill="#2b00ff"/><rect x="221" y="55" width="1.02" height="1.02" fill="#5800ff"/><rect x="221" y="60" width="1.02" height="1.02" fill="#3a00ff"/><rect x="225" y="45" width="1.02" height="1.02" fill="#4100ff"/><rect x="226" y="53" width="1.02" height="1.02" fill="#2a00ff"/><rect x="228" y="50" width="1.02" height="1.02" fill="#2000ff"/><rect x="229" y="2" width="1.02" height="1.02" fill="#2d00ff"/><rect x="230" y="7" width="1.02" height="1.02" fill="#2f00ff"/><rect x="231" y="44" width="1.02" height="1.02" fill="#4a00ff"/><rect x="231" y="54" width="1.02" height="1.02" fill="#3d00ff"/><rect x="231" y="59" width="1.02" height="1.02" fill="#1400ff"/><rect x="236" y="22" width="1.02" height="1.02" fill="#3f00ff"/><rect x="236" y="45" width="1.02" height="1.02" fill="#4300ff"/><rect x="236" y="54" width="1.02" height="1.02" fill="#2200ff"/><rect x="237" y="6" width="1.02" height="1.02" fill="#2b00ff"/><rect x="237" y="23" width="1.02" height="1.02" fill="#1200ff"/><rect x="238" y="14" width="1.02" height="1.02" fill="#5400ff"/><rect x="239" y="9" width="1.02" height="1.02" fill="#2c00ff"/><rect x="242" y="5" width="1.02" height="1.02" fill="#1600ff"/><rect x="244" y="55" width="1.02" height="1.02" fill="#3e00ff"/><rect x="245" y="56" width="1.02" height="1.02" fill="#4500ff"/><rect x="247" y="35" width="1.02" height="1.02" fill="#4e00ff"/><rect x="73.26" y="0" width="0.733" height="64" fill="#c47a9a"/></svg><div style="right:662.5px;top:244.50px;font-size:6px;line-height:7.80px;color:#10102a;white-space:nowrap;-webkit-text-stroke:0.06px #10102a;">0</div><div style="left:38.5px;top:246.9px;width:3.0px;height:1.0px;background:#5a5a5a;"></div><div style="right:662.5px;top:265.31px;font-size:6px;line-height:7.80px;color:#10102a;white-space:nowrap;-webkit-text-stroke:0.06px #10102a;">10</div><div style="left:38.5px;top:267.71250000000003px;width:3.0px;height:1.0px;background:#5a5a5a;"></div><div style="right:662.5px;top:286.13px;font-size:6px;line-height:7.80px;color:#10102a;white-space:nowrap;-webkit-text-stroke:0.06px #10102a;">20</div><div style="left:38.5px;top:288.52500000000003px;width:3.0px;height:1.0px;background:#5a5a5a;"></div><div style="right:662.5px;top:306.94px;font-size:6px;line-height:7.80px;color:#10102a;white-space:nowrap;-webkit-text-stroke:0.06px #10102a;">30</div><div style="left:38.5px;top:309.33750000000003px;width:3.0px;height:1.0px;background:#5a5a5a;"></div><div style="right:662.5px;top:327.75px;font-size:6px;line-height:7.80px;color:#10102a;white-space:nowrap;-webkit-text-stroke:0.06px #10102a;">40</div><div style="left:38.5px;top:330.15000000000003px;width:3.0px;height:1.0px;background:#5a5a5a;"></div><div style="right:662.5px;top:348.56px;font-size:6px;line-height:7.80px;color:#10102a;white-space:nowrap;-webkit-text-stroke:0.06px #10102a;">50</div><div style="left:38.5px;top:350.96250000000003px;width:3.0px;height:1.0px;background:#5a5a5a;"></div><div style="right:662.5px;top:369.38px;font-size:6px;line-height:7.80px;color:#10102a;white-space:nowrap;-webkit-text-stroke:0.06px #10102a;">60</div><div style="left:38.5px;top:371.77500000000003px;width:3.0px;height:1.0px;background:#5a5a5a;"></div><div style="right:662.5px;top:377.70px;font-size:6px;line-height:7.80px;color:#10102a;white-space:nowrap;-webkit-text-stroke:0.06px #10102a;">64</div><div style="left:38.5px;top:380.1px;width:3.0px;height:1.0px;background:#5a5a5a;"></div><div style="left:-157.0px;width:400px;text-align:center;top:386.30px;font-size:6px;line-height:7.80px;color:#10102a;white-space:nowrap;-webkit-text-stroke:0.06px #10102a;">0</div><div style="left:42.5px;top:381.5px;width:1.0px;height:2.0px;background:#5a5a5a;"></div><div style="left:-138.8359375px;width:400px;text-align:center;top:386.30px;font-size:6px;line-height:7.80px;color:#10102a;white-space:nowrap;-webkit-text-stroke:0.06px #10102a;">100</div><div style="left:60.6640625px;top:381.5px;width:1.0px;height:2.0px;background:#5a5a5a;"></div><div style="left:-120.671875px;width:400px;text-align:center;top:386.30px;font-size:6px;line-height:7.80px;color:#10102a;white-space:nowrap;-webkit-text-stroke:0.06px #10102a;">200</div><div style="left:78.828125px;top:381.5px;width:1.0px;height:2.0px;background:#5a5a5a;"></div><div style="left:-102.5078125px;width:400px;text-align:center;top:386.30px;font-size:6px;line-height:7.80px;color:#10102a;white-space:nowrap;-webkit-text-stroke:0.06px #10102a;">300</div><div style="left:96.9921875px;top:381.5px;width:1.0px;height:2.0px;background:#5a5a5a;"></div><div style="left:-84.34375px;width:400px;text-align:center;top:386.30px;font-size:6px;line-height:7.80px;color:#10102a;white-space:nowrap;-webkit-text-stroke:0.06px #10102a;">400</div><div style="left:115.15625px;top:381.5px;width:1.0px;height:2.0px;background:#5a5a5a;"></div><div style="left:-66.1796875px;width:400px;text-align:center;top:386.30px;font-size:6px;line-height:7.80px;color:#10102a;white-space:nowrap;-webkit-text-stroke:0.06px #10102a;">500</div><div style="left:133.3203125px;top:381.5px;width:1.0px;height:2.0px;background:#5a5a5a;"></div><div style="left:-48.015625px;width:400px;text-align:center;top:386.30px;font-size:6px;line-height:7.80px;color:#10102a;white-space:nowrap;-webkit-text-stroke:0.06px #10102a;">600</div><div style="left:151.484375px;top:381.5px;width:1.0px;height:2.0px;background:#5a5a5a;"></div><div style="left:-29.8515625px;width:400px;text-align:center;top:386.30px;font-size:6px;line-height:7.80px;color:#10102a;white-space:nowrap;-webkit-text-stroke:0.06px #10102a;">700</div><div style="left:169.6484375px;top:381.5px;width:1.0px;height:2.0px;background:#5a5a5a;"></div><div style="left:-11.6875px;width:400px;text-align:center;top:386.30px;font-size:6px;line-height:7.80px;color:#10102a;white-space:nowrap;-webkit-text-stroke:0.06px #10102a;">800</div><div style="left:187.8125px;top:381.5px;width:1.0px;height:2.0px;background:#5a5a5a;"></div><div style="left:6.4765625px;width:400px;text-align:center;top:386.30px;font-size:6px;line-height:7.80px;color:#10102a;white-space:nowrap;-webkit-text-stroke:0.06px #10102a;">900</div><div style="left:205.9765625px;top:381.5px;width:1.0px;height:2.0px;background:#5a5a5a;"></div><div style="left:24.640625px;width:400px;text-align:center;top:386.30px;font-size:6px;line-height:7.80px;color:#10102a;white-space:nowrap;-webkit-text-stroke:0.06px #10102a;">1000</div><div style="left:224.140625px;top:381.5px;width:1.0px;height:2.0px;background:#5a5a5a;"></div><div style="left:42.8046875px;width:400px;text-align:center;top:386.30px;font-size:6px;line-height:7.80px;color:#10102a;white-space:nowrap;-webkit-text-stroke:0.06px #10102a;">1100</div><div style="left:242.3046875px;top:381.5px;width:1.0px;height:2.0px;background:#5a5a5a;"></div><div style="left:60.96875px;width:400px;text-align:center;top:386.30px;font-size:6px;line-height:7.80px;color:#10102a;white-space:nowrap;-webkit-text-stroke:0.06px #10102a;">1200</div><div style="left:260.46875px;top:381.5px;width:1.0px;height:2.0px;background:#5a5a5a;"></div><div style="left:79.1328125px;width:400px;text-align:center;top:386.30px;font-size:6px;line-height:7.80px;color:#10102a;white-space:nowrap;-webkit-text-stroke:0.06px #10102a;">1300</div><div style="left:278.6328125px;top:381.5px;width:1.0px;height:2.0px;background:#5a5a5a;"></div><div style="left:97.296875px;width:400px;text-align:center;top:386.30px;font-size:6px;line-height:7.80px;color:#10102a;white-space:nowrap;-webkit-text-stroke:0.06px #10102a;">1400</div><div style="left:296.796875px;top:381.5px;width:1.0px;height:2.0px;background:#5a5a5a;"></div><div style="left:115.4609375px;width:400px;text-align:center;top:386.30px;font-size:6px;line-height:7.80px;color:#10102a;white-space:nowrap;-webkit-text-stroke:0.06px #10102a;">1500</div><div style="left:314.9609375px;top:381.5px;width:1.0px;height:2.0px;background:#5a5a5a;"></div><div style="left:133.625px;width:400px;text-align:center;top:386.30px;font-size:6px;line-height:7.80px;color:#10102a;white-space:nowrap;-webkit-text-stroke:0.06px #10102a;">1600</div><div style="left:333.125px;top:381.5px;width:1.0px;height:2.0px;background:#5a5a5a;"></div><div style="left:151.7890625px;width:400px;text-align:center;top:386.30px;font-size:6px;line-height:7.80px;color:#10102a;white-space:nowrap;-webkit-text-stroke:0.06px #10102a;">1700</div><div style="left:351.2890625px;top:381.5px;width:1.0px;height:2.0px;background:#5a5a5a;"></div><div style="left:169.953125px;width:400px;text-align:center;top:386.30px;font-size:6px;line-height:7.80px;color:#10102a;white-space:nowrap;-webkit-text-stroke:0.06px #10102a;">1800</div><div style="left:369.453125px;top:381.5px;width:1.0px;height:2.0px;background:#5a5a5a;"></div><div style="left:188.1171875px;width:400px;text-align:center;top:386.30px;font-size:6px;line-height:7.80px;color:#10102a;white-space:nowrap;-webkit-text-stroke:0.06px #10102a;">1900</div><div style="left:387.6171875px;top:381.5px;width:1.0px;height:2.0px;background:#5a5a5a;"></div><div style="left:405.78125px;top:381.5px;width:1.0px;height:2.0px;background:#5a5a5a;"></div><div style="left:215px;width:400px;text-align:center;top:386.30px;font-size:6px;line-height:7.80px;color:#10102a;white-space:nowrap;-webkit-text-stroke:0.06px #10102a;">2048</div><div style="left:414.5px;top:381.5px;width:1.0px;height:2.0px;background:#5a5a5a;"></div><div style="left:28px;width:400px;text-align:center;top:393.10px;font-size:6px;line-height:7.80px;color:#10102a;white-space:nowrap;-webkit-text-stroke:0.06px #10102a;">X</div><div style="left:20px;top:311.3px;width:10px;height:8px;font-size:6px;line-height:8px;text-align:center;color:#25253a;transform:rotate(-90deg);">Y</div><div style="left:429px;top:241.5px;width:11.5px;height:148.0px;background:linear-gradient(#ffffff 0px,#ffffff 2px,#ff0000 2.5px,#ff8000 16px,#ffff00 34px,#00ff00 66px,#00ff80 83px,#00ffff 95px,#0000ff 125px,#7f00ff 142px,#000 145px,#000);border:1px solid #555;box-sizing:border-box;"></div><div style="left:442px;top:244.5px;width:2px;height:1.0px;background:#333;"></div><div style="left:444.5px;top:242.10px;font-size:6px;line-height:7.80px;color:#10102a;white-space:nowrap;-webkit-text-stroke:0.06px #10102a;">1032</div><div style="left:442px;top:383.60px;font-size:6px;line-height:7.80px;color:#10102a;white-space:nowrap;-webkit-text-stroke:0.06px #10102a;">-0</div><div style="left:441.5px;top:343.50px;font-size:6px;line-height:7.80px;color:#10102a;white-space:nowrap;-webkit-text-stroke:0.06px #10102a;">&#8801;289</div><div style="right:224px;top:242.10px;font-size:6px;line-height:7.80px;color:#10102a;white-space:nowrap;-webkit-text-stroke:0.06px #10102a;">1032</div><div style="right:224px;top:260.20px;font-size:6px;line-height:7.80px;color:#10102a;white-space:nowrap;-webkit-text-stroke:0.06px #10102a;">900</div><div style="right:224px;top:273.91px;font-size:6px;line-height:7.80px;color:#10102a;white-space:nowrap;-webkit-text-stroke:0.06px #10102a;">800</div><div style="right:224px;top:287.62px;font-size:6px;line-height:7.80px;color:#10102a;white-space:nowrap;-webkit-text-stroke:0.06px #10102a;">700</div><div style="right:224px;top:301.33px;font-size:6px;line-height:7.80px;color:#10102a;white-space:nowrap;-webkit-text-stroke:0.06px #10102a;">600</div><div style="right:224px;top:315.04px;font-size:6px;line-height:7.80px;color:#10102a;white-space:nowrap;-webkit-text-stroke:0.06px #10102a;">500</div><div style="right:224px;top:328.76px;font-size:6px;line-height:7.80px;color:#10102a;white-space:nowrap;-webkit-text-stroke:0.06px #10102a;">400</div><div style="right:224px;top:342.47px;font-size:6px;line-height:7.80px;color:#10102a;white-space:nowrap;-webkit-text-stroke:0.06px #10102a;">300</div><div style="right:224px;top:356.18px;font-size:6px;line-height:7.80px;color:#10102a;white-space:nowrap;-webkit-text-stroke:0.06px #10102a;">200</div><div style="right:224px;top:369.89px;font-size:6px;line-height:7.80px;color:#10102a;white-space:nowrap;-webkit-text-stroke:0.06px #10102a;">100</div><div style="right:224px;top:383.60px;font-size:6px;line-height:7.80px;color:#10102a;white-space:nowrap;-webkit-text-stroke:0.06px #10102a;">0</div><svg style="left:477px;top:243px" width="5" height="146"><rect x="1" y="0.00" width="2.2" height="0.9" fill="#222"/><rect x="1" y="2.37" width="1.6" height="0.9" fill="#222"/><rect x="1" y="4.73" width="1.6" height="0.9" fill="#222"/><rect x="1" y="7.10" width="1.6" height="0.9" fill="#222"/><rect x="1" y="9.47" width="1.6" height="0.9" fill="#222"/><rect x="1" y="11.83" width="2.2" height="0.9" fill="#222"/><rect x="1" y="14.20" width="1.6" height="0.9" fill="#222"/><rect x="1" y="16.57" width="1.6" height="0.9" fill="#222"/><rect x="1" y="18.93" width="1.6" height="0.9" fill="#222"/><rect x="1" y="21.30" width="1.6" height="0.9" fill="#222"/><rect x="1" y="23.67" width="2.2" height="0.9" fill="#222"/><rect x="1" y="26.03" width="1.6" height="0.9" fill="#222"/><rect x="1" y="28.40" width="1.6" height="0.9" fill="#222"/><rect x="1" y="30.77" width="1.6" height="0.9" fill="#222"/><rect x="1" y="33.13" width="1.6" height="0.9" fill="#222"/><rect x="1" y="35.50" width="2.2" height="0.9" fill="#222"/><rect x="1" y="37.87" width="1.6" height="0.9" fill="#222"/><rect x="1" y="40.23" width="1.6" height="0.9" fill="#222"/><rect x="1" y="42.60" width="1.6" height="0.9" fill="#222"/><rect x="1" y="44.97" width="1.6" height="0.9" fill="#222"/><rect x="1" y="47.33" width="2.2" height="0.9" fill="#222"/><rect x="1" y="49.70" width="1.6" height="0.9" fill="#222"/><rect x="1" y="52.07" width="1.6" height="0.9" fill="#222"/><rect x="1" y="54.43" width="1.6" height="0.9" fill="#222"/><rect x="1" y="56.80" width="1.6" height="0.9" fill="#222"/><rect x="1" y="59.17" width="2.2" height="0.9" fill="#222"/><rect x="1" y="61.53" width="1.6" height="0.9" fill="#222"/><rect x="1" y="63.90" width="1.6" height="0.9" fill="#222"/><rect x="1" y="66.27" width="1.6" height="0.9" fill="#222"/><rect x="1" y="68.63" width="1.6" height="0.9" fill="#222"/><rect x="1" y="71.00" width="2.2" height="0.9" fill="#222"/><rect x="1" y="73.37" width="1.6" height="0.9" fill="#222"/><rect x="1" y="75.73" width="1.6" height="0.9" fill="#222"/><rect x="1" y="78.10" width="1.6" height="0.9" fill="#222"/><rect x="1" y="80.47" width="1.6" height="0.9" fill="#222"/><rect x="1" y="82.83" width="2.2" height="0.9" fill="#222"/><rect x="1" y="85.20" width="1.6" height="0.9" fill="#222"/><rect x="1" y="87.57" width="1.6" height="0.9" fill="#222"/><rect x="1" y="89.93" width="1.6" height="0.9" fill="#222"/><rect x="1" y="92.30" width="1.6" height="0.9" fill="#222"/><rect x="1" y="94.67" width="2.2" height="0.9" fill="#222"/><rect x="1" y="97.03" width="1.6" height="0.9" fill="#222"/><rect x="1" y="99.40" width="1.6" height="0.9" fill="#222"/><rect x="1" y="101.77" width="1.6" height="0.9" fill="#222"/><rect x="1" y="104.13" width="1.6" height="0.9" fill="#222"/><rect x="1" y="106.50" width="2.2" height="0.9" fill="#222"/><rect x="1" y="108.87" width="1.6" height="0.9" fill="#222"/><rect x="1" y="111.23" width="1.6" height="0.9" fill="#222"/><rect x="1" y="113.60" width="1.6" height="0.9" fill="#222"/><rect x="1" y="115.97" width="1.6" height="0.9" fill="#222"/><rect x="1" y="118.33" width="2.2" height="0.9" fill="#222"/><rect x="1" y="120.70" width="1.6" height="0.9" fill="#222"/><rect x="1" y="123.07" width="1.6" height="0.9" fill="#222"/><rect x="1" y="125.43" width="1.6" height="0.9" fill="#222"/><rect x="1" y="127.80" width="1.6" height="0.9" fill="#222"/><rect x="1" y="130.17" width="2.2" height="0.9" fill="#222"/><rect x="1" y="132.53" width="1.6" height="0.9" fill="#222"/><rect x="1" y="134.90" width="1.6" height="0.9" fill="#222"/><rect x="1" y="137.27" width="1.6" height="0.9" fill="#222"/><rect x="1" y="139.63" width="1.6" height="0.9" fill="#222"/><rect x="1" y="142.00" width="2.2" height="0.9" fill="#222"/></svg><div style="left:482px;top:246px;width:6px;height:142px;background:linear-gradient(90deg,#1a3fd8,#2f5cf0,#1a3fd8);"></div><svg style="left:481px;top:241px" width="12" height="9"><path d="M1 4.5 Q2 1 6 1 L11 1 L11 8 L6 8 Q2 8 1 4.5Z" fill="#fafafa" stroke="#9aa" stroke-width="0.5"/></svg><svg style="left:481px;top:382px" width="12" height="9"><path d="M1 4.5 Q2 1 6 1 L11 1 L11 8 L6 8 Q2 8 1 4.5Z" fill="#fafafa" stroke="#9aa" stroke-width="0.5"/></svg><div style="left:432px;top:392px;width:7px;height:7px;background:#f4f4f4;border:1px solid #a0a0a0;box-sizing:border-box;"></div><svg style="left:432px;top:392px" width="7" height="7"><path d="M1.6 3.6L3 5.6L5.4 1.6" stroke="#4a5aa8" stroke-width="1.3" fill="none" stroke-linecap="round"/></svg><div style="left:440px;top:391.40px;font-size:6px;line-height:7.80px;color:#1a1a2e;white-space:nowrap;-webkit-text-stroke:0.06px #1a1a2e;">Autoscale</div><div style="left:472px;top:392px;width:7px;height:7px;background:#f4f4f4;border:1px solid #a0a0a0;box-sizing:border-box;"></div><svg style="left:472px;top:392px" width="7" height="7"><path d="M1.6 3.6L3 5.6L5.4 1.6" stroke="#4a5aa8" stroke-width="1.3" fill="none" stroke-linecap="round"/></svg><div style="left:480px;top:391.40px;font-size:6px;line-height:7.80px;color:#1a1a2e;white-space:nowrap;-webkit-text-stroke:0.06px #1a1a2e;">Autoadjust</div><div style="left:94.5px;top:38.5px;width:7.0px;height:7.0px;background:#ececec;border:1px solid #505050;box-sizing:border-box;"></div><svg style="left:94.5px;top:38.5px" width="7" height="7"><path d="M1.5 1.5L5.5 5.5M5.5 1.5L1.5 5.5" stroke="#333" stroke-width="0.9"/></svg><div style="left:103px;top:39.23px;font-size:5.8px;line-height:7.54px;color:#0a0a20;white-space:nowrap;-webkit-text-stroke:0.06px #0a0a20;">Show Vertical Sum Line</div><div style="left:96px;top:50.45px;font-size:7px;line-height:9.10px;font-weight:bold;color:#0a0a20;white-space:nowrap;-webkit-text-stroke:0.06px #0a0a20;">Curvature (mpx/px)</div><div style="left:96px;top:59px;width:7px;height:13px;background:linear-gradient(90deg,#b0b0b0,#e8e8e8 45%,#b8b8b8);border:1px solid #8a8a8a;border-radius:3.5px/5px;box-sizing:border-box;"></div><svg style="left:96px;top:59px" width="7" height="13"><path d="M1.90 5.50L3.50 3.00L5.10 5.50M1.90 7.50L3.50 10.00L5.10 7.50M1 6.50H6" fill="none" stroke="#707070" stroke-width="0.6"/></svg><div style="left:103px;top:60px;width:27px;height:11px;background:#ffffff;border-top:1px solid #8c8c8c;border-left:1px solid #8c8c8c;border-bottom:1px solid #e2e2e2;border-right:1px solid #e2e2e2;box-sizing:border-box;"></div><div style="left:105px;top:62.60px;font-size:6px;line-height:7.80px;color:#0a0a20;white-space:nowrap;-webkit-text-stroke:0.06px #0a0a20;">0</div><div style="left:137.5px;top:62px;width:7.0px;height:7px;background:#ececec;border:1px solid #505050;box-sizing:border-box;"></div><svg style="left:137.5px;top:62px" width="7" height="7"><path d="M1.5 1.5L5.5 5.5M5.5 1.5L1.5 5.5" stroke="#333" stroke-width="0.9"/></svg><div style="left:146.5px;top:62.73px;font-size:5.8px;line-height:7.54px;color:#0a0a20;white-space:nowrap;-webkit-text-stroke:0.06px #0a0a20;">Apply Cosmic Ray Filter</div><div style="left:133px;top:58px;width:83px;height:14px;border:2px solid #f5b400;box-sizing:border-box;"></div><div style="left:48.5px;top:25px;width:59.0px;height:14px;background:#f5b400;"></div><div style="left:51px;top:27.5px;width:54px;height:9.0px;background:#3399ff;"></div><div style="left:-122px;width:400px;text-align:center;top:27.91px;font-size:6.3px;line-height:8.19px;color:#ffffff;white-space:nowrap;-webkit-text-stroke:0.06px #ffffff;">Scan Setup</div><div style="left:218px;top:32px;width:124px;height:57px;background:linear-gradient(90deg,#c0c0c0,#d0d0d0 6px,#c8c8c8 calc(100% - 10px),#a0a0a0 calc(100% - 2px),#808080);border-top:1px solid #e0e0e0;border-bottom:1px solid #8a8a8a;box-sizing:border-box;"></div><div style="left:221px;top:38px;width:113px;height:45px;background:#ffffff;border:1px solid #8a8a8a;box-sizing:border-box;"></div><div style="left:222px;top:39px;width:111px;height:8px;background:linear-gradient(#eeeeee,#cfcfcf);"></div><div style="left:275.5px;top:39px;width:1.0px;height:44px;background:#c8c8c8;"></div><div style="left:299.5px;top:39px;width:1.0px;height:44px;background:#c8c8c8;"></div><div style="left:274px;top:39px;width:1.5px;height:8px;background:#9a9a9a;"></div><div style="left:298px;top:39px;width:1.5px;height:8px;background:#9a9a9a;"></div><div style="left:330px;top:39px;width:1.5px;height:8px;background:#9a9a9a;"></div><div style="left:223.5px;top:38.71px;font-size:6.6px;line-height:8.58px;font-weight:bold;color:#0a0a20;white-space:nowrap;-webkit-text-stroke:0.06px #0a0a20;">Cursors:</div><div style="left:279px;top:38.71px;font-size:6.6px;line-height:8.58px;font-weight:bold;color:#0a0a20;white-space:nowrap;-webkit-text-stroke:0.06px #0a0a20;">X</div><div style="left:302px;top:38.71px;font-size:6.6px;line-height:8.58px;font-weight:bold;color:#0a0a20;white-space:nowrap;-webkit-text-stroke:0.06px #0a0a20;">Y</div><div style="left:224px;top:48.5px;width:5px;height:5.0px;background:#fafafa;border:1px solid #aaa;box-sizing:border-box;"></div><div style="left:225.5px;top:50.5px;width:2.0px;height:1.0px;background:#555;"></div><svg style="left:231px;top:47px" width="9" height="8"><rect width="9" height="8" fill="#000"/><path d="M0 4H9M4.5 0V8" stroke="#e00000" stroke-width="0.9"/><circle cx="4.5" cy="4" r="2" fill="none" stroke="#e00000" stroke-width="0.9"/></svg><div style="left:241px;top:48.10px;font-size:6px;line-height:7.80px;color:#0a0a20;white-space:nowrap;-webkit-text-stroke:0.06px #0a0a20;">Cursor 0</div><div style="left:236px;top:55px;width:1px;height:5px;background:#c4c4c4;"></div><div style="left:236px;top:60px;width:11px;height:1px;background:#c4c4c4;"></div><div style="left:250px;top:57.10px;font-size:6px;line-height:7.80px;color:#0a0a20;white-space:nowrap;-webkit-text-stroke:0.06px #0a0a20;">none</div><div style="left:279px;top:57.10px;font-size:6px;line-height:7.80px;color:#0a0a20;white-space:nowrap;-webkit-text-stroke:0.06px #0a0a20;">956</div><div style="left:303px;top:57.10px;font-size:6px;line-height:7.80px;color:#0a0a20;white-space:nowrap;-webkit-text-stroke:0.06px #0a0a20;">75</div><div style="left:224px;top:66.5px;width:5px;height:5.0px;background:#fafafa;border:1px solid #aaa;box-sizing:border-box;"></div><div style="left:225.5px;top:68.5px;width:2.0px;height:1.0px;background:#555;"></div><svg style="left:231px;top:65px" width="9" height="8"><rect width="9" height="8" fill="#000"/><path d="M0 4H9M4.5 0V8" stroke="#00c000" stroke-width="0.9"/><circle cx="4.5" cy="4" r="2" fill="none" stroke="#00c000" stroke-width="0.9"/></svg><div style="left:241px;top:66.10px;font-size:6px;line-height:7.80px;color:#0a0a20;white-space:nowrap;-webkit-text-stroke:0.06px #0a0a20;">Cursor 1</div><div style="left:236px;top:73px;width:1px;height:5px;background:#c4c4c4;"></div><div style="left:236px;top:78px;width:11px;height:1px;background:#c4c4c4;"></div><div style="left:250px;top:75.10px;font-size:6px;line-height:7.80px;color:#0a0a20;white-space:nowrap;-webkit-text-stroke:0.06px #0a0a20;">none</div><div style="left:279px;top:75.10px;font-size:6px;line-height:7.80px;color:#0a0a20;white-space:nowrap;-webkit-text-stroke:0.06px #0a0a20;">960</div><div style="left:303px;top:75.10px;font-size:6px;line-height:7.80px;color:#0a0a20;white-space:nowrap;-webkit-text-stroke:0.06px #0a0a20;">43</div><div style="left:226px;top:55px;width:1px;height:12px;background:#c4c4c4;"></div><div style="left:72px;top:76px;width:50px;height:13.5px;background:linear-gradient(90deg,#d4d4d4,#d8d8d8 15%,#cdcdcd 75%,#b0b0b0 88%,#8c8c8c);border-top:1px solid #e6e6e6;border-bottom:1px solid #9a9a9a;box-sizing:border-box;"></div><div style="left:79px;top:78px;width:10.5px;height:9.0px;background:linear-gradient(#8a8a8a,#6e6e6e);border:1px solid #5a5a5a;box-sizing:border-box;"></div><div style="left:80px;top:82.5px;width:8.5px;height:1.0999999999999943px;background:#0a0a0a;"></div><div style="left:84.0px;top:79px;width:1.0999999999999943px;height:7.0px;background:#0a0a0a;"></div><div style="left:80.3px;top:79.2px;width:2.2px;height:2.2px;border-radius:50%;background:#40ff40;"></div><svg style="left:92px;top:78px" width="10" height="9.0"><circle cx="6" cy="4.0" r="2.8" fill="#b8b8e8" stroke="#202020" stroke-width="1"/><path d="M4 6.0 L1.2 8.2" stroke="#111" stroke-width="1.3"/><rect x="4.8" y="3.5" width="2.4" height="1" fill="#333"/><circle cx="1.6" cy="1.6" r="1" fill="#40e040"/><rect x="6.5" y="7.4" width="2" height="1.4" fill="#111"/></svg><svg style="left:103px;top:78px" width="11" height="9.0"><path d="M2.5 4.5 q0.5 -3.8 3.5 -4 q3.5 0.2 3.5 3.5 l0 2 q-0.5 3 -3.5 3.5 q-3 -0.5 -3.5 -3z" fill="#b4b4b4" stroke="#2a2a2a" stroke-width="0.9"/><path d="M4.5 2 V4.5 M6.3 1.8 V4.5 M8 2.4 V4.5" stroke="#555" stroke-width="0.5"/><circle cx="1.6" cy="1.6" r="1" fill="#40e040"/></svg><div style="left:428.5px;top:229px;width:50.0px;height:12px;background:linear-gradient(90deg,#d4d4d4,#d8d8d8 15%,#cdcdcd 75%,#b0b0b0 88%,#8c8c8c);border-top:1px solid #e6e6e6;border-bottom:1px solid #9a9a9a;box-sizing:border-box;"></div><div style="left:436.5px;top:231px;width:10.5px;height:7.5px;background:linear-gradient(#8a8a8a,#6e6e6e);border:1px solid #5a5a5a;box-sizing:border-box;"></div><div style="left:437.5px;top:234.75px;width:8.5px;height:1.0999999999999943px;background:#0a0a0a;"></div><div style="left:441.5px;top:232px;width:1.1000000000000227px;height:5.5px;background:#0a0a0a;"></div><div style="left:437.8px;top:232.2px;width:2.2px;height:2.2px;border-radius:50%;background:#40ff40;"></div><svg style="left:449.5px;top:231px" width="10" height="7.5"><circle cx="6" cy="3.25" r="2.8" fill="#b8b8e8" stroke="#202020" stroke-width="1"/><path d="M4 5.25 L1.2 6.7" stroke="#111" stroke-width="1.3"/><rect x="4.8" y="2.75" width="2.4" height="1" fill="#333"/><circle cx="1.6" cy="1.6" r="1" fill="#40e040"/><rect x="6.5" y="5.9" width="2" height="1.4" fill="#111"/></svg><svg style="left:460.5px;top:231px" width="11" height="7.5"><path d="M2.5 3.75 q0.5 -3.8 3.5 -4 q3.5 0.2 3.5 3.5 l0 2 q-0.5 3 -3.5 3.5 q-3 -0.5 -3.5 -3z" fill="#b4b4b4" stroke="#2a2a2a" stroke-width="0.9"/><path d="M4.5 2 V3.75 M6.3 1.8 V3.75 M8 2.4 V3.75" stroke="#555" stroke-width="0.5"/><circle cx="1.6" cy="1.6" r="1" fill="#40e040"/></svg><div style="left:634px;top:399px;width:50px;height:13.399999999999977px;background:linear-gradient(90deg,#d4d4d4,#d8d8d8 15%,#cdcdcd 75%,#b0b0b0 88%,#8c8c8c);border-top:1px solid #e6e6e6;border-bottom:1px solid #9a9a9a;box-sizing:border-box;"></div><div style="left:641px;top:401px;width:10.5px;height:8.899999999999977px;background:linear-gradient(#8a8a8a,#6e6e6e);border:1px solid #5a5a5a;box-sizing:border-box;"></div><div style="left:642px;top:405.45px;width:8.5px;height:1.1000000000000227px;background:#0a0a0a;"></div><div style="left:646.0px;top:402px;width:1.1000000000000227px;height:6.899999999999977px;background:#0a0a0a;"></div><div style="left:642.3px;top:402.2px;width:2.2px;height:2.2px;border-radius:50%;background:#40ff40;"></div><svg style="left:654px;top:401px" width="10" height="8.899999999999977"><circle cx="6" cy="3.9499999999999886" r="2.8" fill="#b8b8e8" stroke="#202020" stroke-width="1"/><path d="M4 5.949999999999989 L1.2 8.099999999999977" stroke="#111" stroke-width="1.3"/><rect x="4.8" y="3.4499999999999886" width="2.4" height="1" fill="#333"/><circle cx="1.6" cy="1.6" r="1" fill="#40e040"/><rect x="6.5" y="7.299999999999978" width="2" height="1.4" fill="#111"/></svg><svg style="left:665px;top:401px" width="11" height="8.899999999999977"><path d="M2.5 4.449999999999989 q0.5 -3.8 3.5 -4 q3.5 0.2 3.5 3.5 l0 2 q-0.5 3 -3.5 3.5 q-3 -0.5 -3.5 -3z" fill="#b4b4b4" stroke="#2a2a2a" stroke-width="0.9"/><path d="M4.5 2 V4.449999999999989 M6.3 1.8 V4.449999999999989 M8 2.4 V4.449999999999989" stroke="#555" stroke-width="0.5"/><circle cx="1.6" cy="1.6" r="1" fill="#40e040"/></svg><div style="left:344.5px;top:69.5px;width:32.0px;height:19.5px;background:linear-gradient(90deg,#d8d8d8,#cccccc 20%,#c4c4c4 80%,#a0a0a0);border-right:1px solid #6a6a6a;box-sizing:border-box;"></div><svg style="left:351px;top:70px" width="19" height="19"><path d="M9.5 1L18 9.5L9.5 18L1 9.5Z M5.25 5.25L13.75 13.75 M13.75 5.25L5.25 13.75" fill="none" stroke="#333" stroke-width="0.9"/></svg><div style="left:380px;top:76px;width:48px;height:12.5px;background:linear-gradient(90deg,#dadada,#d0d0d0 70%,#a8a8a8);border-right:1px solid #6a6a6a;border-bottom:1px solid #9a9a9a;box-sizing:border-box;"></div><div style="left:388px;top:79.10px;font-size:6px;line-height:7.80px;color:#0a0a20;white-space:nowrap;-webkit-text-stroke:0.06px #0a0a20;">Cut</div><div style="left:404px;top:78px;width:16px;height:8px;background:#000;border:1px solid #777;box-sizing:border-box;"></div><svg style="left:404px;top:78px" width="16" height="8"><path d="M1.5 6.5L5.5 2L10 6L14.5 1.5" fill="none" stroke="#ddd" stroke-width="0.8"/></svg><div style="left:12px;top:81.10px;font-size:6px;line-height:7.80px;color:#0a0a20;white-space:nowrap;-webkit-text-stroke:0.06px #0a0a20;">Vertical Sum Line</div><svg style="left:0px;top:0px" width="700" height="593"><path d="M132 31.8L107.5 31.8M114.09 37.93L107.5 31.8L114.09 25.67" stroke="#ffffff" stroke-width="2.3" fill="none" stroke-linecap="round" stroke-linejoin="round"/></svg><svg style="left:0px;top:0px" width="700" height="593"><path d="M196 81.5L175.5 71.5M178.73 79.90L175.5 71.5L184.11 68.87" stroke="#ffffff" stroke-width="2.3" fill="none" stroke-linecap="round" stroke-linejoin="round"/></svg><svg style="left:0px;top:0px" width="700" height="593"><path d="M153 559L131.5 539M132.14 547.98L131.5 539L140.50 538.99" stroke="#ffffff" stroke-width="2.3" fill="none" stroke-linecap="round" stroke-linejoin="round"/></svg><div style="left:139.5px;top:24.16px;font-size:11.6px;line-height:15.08px;font-weight:bold;font-style:italic;color:#c80c14;white-space:nowrap;-webkit-text-stroke:0.06px #c80c14;">Protocol 6.6</div><div style="left:168px;top:80.36px;font-size:11.6px;line-height:15.08px;font-weight:bold;font-style:italic;color:#c80c14;white-space:nowrap;-webkit-text-stroke:0.06px #c80c14;">Protocol 6.7</div><div style="left:119px;top:563.26px;font-size:11.6px;line-height:15.08px;font-weight:bold;font-style:italic;color:#c80c14;white-space:nowrap;-webkit-text-stroke:0.06px #c80c14;">Protocol 6.8</div><div style="left:520px;top:32.10px;font-size:6px;line-height:7.80px;color:#0a0a20;white-space:nowrap;-webkit-text-stroke:0.06px #0a0a20;">Data directory</div><div style="left:520px;top:40px;width:146px;height:18px;background:#ffffff;border-top:1px solid #7a7a7a;border-left:1px solid #7a7a7a;border-bottom:1px solid #e4e4e4;border-right:1px solid #e4e4e4;box-sizing:border-box;"></div><div style="left:521px;top:41px;width:5px;height:16px;background:#c4c4c4;"></div><div style="left:520.5px;top:47.60px;font-size:6px;line-height:7.80px;color:#0a0a20;white-space:nowrap;-webkit-text-stroke:0.06px #0a0a20;">&#167;</div><div style="left:527px;top:41.66px;font-size:5.9px;line-height:7.67px;color:#0a0a20;white-space:nowrap;-webkit-text-stroke:0.06px #0a0a20;">C:\Beamline Controls\BCS Setup Data\CCD Files</div><div style="left:669px;top:39px;width:16px;height:10px;background:linear-gradient(#e8e8e8,#c8c8c8);border:1px solid #7a7a7a;box-sizing:border-box;"></div><svg style="left:672px;top:40px" width="11" height="8"><path d="M1 2H4L5 3H9V7H1Z" fill="#ddd000" stroke="#333" stroke-width="0.8"/><path d="M2.5 4H10L9 7H1Z" fill="#f0e020" stroke="#333" stroke-width="0.7"/></svg><div style="left:520px;top:64.10px;font-size:6px;line-height:7.80px;color:#0a0a20;white-space:nowrap;-webkit-text-stroke:0.06px #0a0a20;">Base file name</div><div style="left:520px;top:73px;width:92px;height:13px;background:#ffffff;border-top:1px solid #8c8c8c;border-left:1px solid #8c8c8c;border-bottom:1px solid #e2e2e2;border-right:1px solid #e2e2e2;box-sizing:border-box;"></div><div style="left:522px;top:76.60px;font-size:6px;line-height:7.80px;color:#0a0a20;white-space:nowrap;-webkit-text-stroke:0.06px #0a0a20;">NLMO-Mn</div><div style="left:616px;top:61.5px;width:7px;height:7.0px;background:#ececec;border:1px solid #505050;box-sizing:border-box;"></div><svg style="left:616px;top:61.5px" width="7" height="7"><path d="M1.5 1.5L5.5 5.5M5.5 1.5L1.5 5.5" stroke="#333" stroke-width="0.9"/></svg><div style="left:624px;top:62.10px;font-size:6px;line-height:7.80px;color:#0a0a20;white-space:nowrap;-webkit-text-stroke:0.06px #0a0a20;">Use Sequence #</div><div style="left:616px;top:72.5px;width:7px;height:7.0px;background:#ececec;border:1px solid #505050;box-sizing:border-box;"></div><svg style="left:616px;top:72.5px" width="7" height="7"><path d="M1.5 1.5L5.5 5.5M5.5 1.5L1.5 5.5" stroke="#333" stroke-width="0.9"/></svg><div style="left:624px;top:73.10px;font-size:6px;line-height:7.80px;color:#0a0a20;white-space:nowrap;-webkit-text-stroke:0.06px #0a0a20;">Create Date Subdir</div><div style="left:616px;top:82.5px;width:7px;height:7.0px;background:#ececec;border:1px solid #505050;box-sizing:border-box;"></div><svg style="left:616px;top:82.5px" width="7" height="7"><path d="M1.5 1.5L5.5 5.5M5.5 1.5L1.5 5.5" stroke="#333" stroke-width="0.9"/></svg><div style="left:624px;top:83.10px;font-size:6px;line-height:7.80px;color:#0a0a20;white-space:nowrap;-webkit-text-stroke:0.06px #0a0a20;">Create Each Subdir</div><div style="left:519.5px;top:94.47px;font-size:6.05px;line-height:7.87px;color:#0a0a20;white-space:nowrap;-webkit-text-stroke:0.06px #0a0a20;">Files are named with the base file name with the</div><div style="left:519.5px;top:101.67px;font-size:6.05px;line-height:7.87px;color:#0a0a20;white-space:nowrap;-webkit-text-stroke:0.06px #0a0a20;">frame number (starting at zero) attached</div><div style="left:631px;top:110px;width:25.5px;height:10.5px;background:linear-gradient(#d4d4d4,#c4c4c4);border:1px solid #a8a8a8;box-sizing:border-box;"></div><div style="left:443.75px;width:400px;text-align:center;top:112.53px;font-size:5.8px;line-height:7.54px;color:#9a9a9a;white-space:nowrap;-webkit-text-stroke:0.06px #9a9a9a;">Prev file</div><div style="left:659px;top:110px;width:24px;height:10.5px;background:linear-gradient(#d4d4d4,#c4c4c4);border:1px solid #a8a8a8;box-sizing:border-box;"></div><div style="left:471.0px;width:400px;text-align:center;top:112.53px;font-size:5.8px;line-height:7.54px;color:#9a9a9a;white-space:nowrap;-webkit-text-stroke:0.06px #9a9a9a;">Next file</div><div style="left:520px;top:111.64px;font-size:6.1px;line-height:7.93px;color:#0a0a20;white-space:nowrap;-webkit-text-stroke:0.06px #0a0a20;">Last <b>Image</b> file written</div><div style="left:520px;top:119.3px;width:163px;height:17.500000000000014px;background:#d6d6d6;border-top:1px solid #8c8c8c;border-left:1px solid #8c8c8c;border-bottom:1px solid #e2e2e2;border-right:1px solid #e2e2e2;box-sizing:border-box;"></div><div style="left:522.5px;top:121.86px;font-size:5.6px;line-height:7.28px;color:#0a0a20;white-space:nowrap;-webkit-text-stroke:0.06px #0a0a20;">C:\Beamline Controls\BCS Setup Data\CCD Files\2017 12 02\</div><div style="left:522.5px;top:129.16px;font-size:5.6px;line-height:7.28px;color:#0a0a20;white-space:nowrap;-webkit-text-stroke:0.06px #0a0a20;">CCD Scan 9047\NLMO-Mn9047-00041</div><div style="right:191.5px;top:123.3px;font-size:6px;line-height:8px;color:#0a0a20;white-space:nowrap">Write</div><div style="left:510px;top:123.5px;width:7px;height:7.0px;background:#ececec;border:1px solid #505050;box-sizing:border-box;"></div><svg style="left:510px;top:123.5px" width="7" height="7"><path d="M1.5 1.5L5.5 5.5M5.5 1.5L1.5 5.5" stroke="#333" stroke-width="0.9"/></svg><div style="left:520px;top:138.53px;font-size:6.1px;line-height:7.93px;color:#0a0a20;white-space:nowrap;-webkit-text-stroke:0.06px #0a0a20;">Last <b>FITS</b> file written</div><div style="left:520px;top:147px;width:163px;height:17.5px;background:#d6d6d6;border-top:1px solid #8c8c8c;border-left:1px solid #8c8c8c;border-bottom:1px solid #e2e2e2;border-right:1px solid #e2e2e2;box-sizing:border-box;"></div><div style="right:191.5px;top:151.70000000000002px;font-size:6px;line-height:8px;color:#0a0a20;white-space:nowrap">Write</div><div style="left:510px;top:151.9px;width:7px;height:7.0px;background:#ececec;border:1px solid #505050;box-sizing:border-box;"></div><div style="left:520px;top:166.53px;font-size:6.1px;line-height:7.93px;color:#0a0a20;white-space:nowrap;-webkit-text-stroke:0.06px #0a0a20;">Last <b>TIFF</b> file written</div><div style="left:520px;top:174.5px;width:163px;height:17.5px;background:#d6d6d6;border-top:1px solid #8c8c8c;border-left:1px solid #8c8c8c;border-bottom:1px solid #e2e2e2;border-right:1px solid #e2e2e2;box-sizing:border-box;"></div><div style="left:522.5px;top:177.06px;font-size:5.6px;line-height:7.28px;color:#0a0a20;white-space:nowrap;-webkit-text-stroke:0.06px #0a0a20;">C:\Beamline Controls\BCS Setup Data\CCD Files\2017 12 02\</div><div style="left:522.5px;top:184.36px;font-size:5.6px;line-height:7.28px;color:#0a0a20;white-space:nowrap;-webkit-text-stroke:0.06px #0a0a20;">CCD Scan 9047\NLMO-Mn9047-00041</div><div style="right:191.5px;top:179.8px;font-size:6px;line-height:8px;color:#0a0a20;white-space:nowrap">Write</div><div style="left:510px;top:180.0px;width:7px;height:7.0px;background:#ececec;border:1px solid #505050;box-sizing:border-box;"></div><svg style="left:510px;top:180.0px" width="7" height="7"><path d="M1.5 1.5L5.5 5.5M5.5 1.5L1.5 5.5" stroke="#333" stroke-width="0.9"/></svg><div style="left:520px;top:194.83px;font-size:6.1px;line-height:7.93px;color:#0a0a20;white-space:nowrap;-webkit-text-stroke:0.06px #0a0a20;">Last 1D <b>Spectrum</b> file written</div><div style="left:520px;top:203.1px;width:163px;height:17.5px;background:#d6d6d6;border-top:1px solid #8c8c8c;border-left:1px solid #8c8c8c;border-bottom:1px solid #e2e2e2;border-right:1px solid #e2e2e2;box-sizing:border-box;"></div><div style="left:522.5px;top:205.66px;font-size:5.6px;line-height:7.28px;color:#0a0a20;white-space:nowrap;-webkit-text-stroke:0.06px #0a0a20;">C:\Beamline Controls\BCS Setup Data\CCD Files\2017 12 02\</div><div style="left:522.5px;top:212.96px;font-size:5.6px;line-height:7.28px;color:#0a0a20;white-space:nowrap;-webkit-text-stroke:0.06px #0a0a20;">CCD Scan 9047\NLMO-Mn9047-00041-1D</div><div style="right:191.5px;top:208.60000000000002px;font-size:6px;line-height:8px;color:#0a0a20;white-space:nowrap">1D</div><div style="left:510px;top:208.8px;width:7px;height:7.0px;background:#ececec;border:1px solid #505050;box-sizing:border-box;"></div><svg style="left:510px;top:208.8px" width="7" height="7"><path d="M1.5 1.5L5.5 5.5M5.5 1.5L1.5 5.5" stroke="#333" stroke-width="0.9"/></svg><div style="left:520px;top:222.63px;font-size:6.1px;line-height:7.93px;color:#0a0a20;white-space:nowrap;-webkit-text-stroke:0.06px #0a0a20;">Last 2D <b>Spectrum</b> file written</div><div style="left:520px;top:231.4px;width:163px;height:17.5px;background:#d6d6d6;border-top:1px solid #8c8c8c;border-left:1px solid #8c8c8c;border-bottom:1px solid #e2e2e2;border-right:1px solid #e2e2e2;box-sizing:border-box;"></div><div style="left:522.5px;top:233.96px;font-size:5.6px;line-height:7.28px;color:#0a0a20;white-space:nowrap;-webkit-text-stroke:0.06px #0a0a20;">C:\Beamline Controls\BCS Setup Data\CCD Files\2017 12 02\</div><div style="left:522.5px;top:241.26px;font-size:5.6px;line-height:7.28px;color:#0a0a20;white-space:nowrap;-webkit-text-stroke:0.06px #0a0a20;">CCD Scan 9047\NLMO-Mn9047-00041-2D</div><div style="right:191.5px;top:236.5px;font-size:6px;line-height:8px;color:#0a0a20;white-space:nowrap">2D</div><div style="left:510px;top:236.7px;width:7px;height:7.0px;background:#ececec;border:1px solid #505050;box-sizing:border-box;"></div><svg style="left:510px;top:236.7px" width="7" height="7"><path d="M1.5 1.5L5.5 5.5M5.5 1.5L1.5 5.5" stroke="#333" stroke-width="0.9"/></svg><div style="left:520.5px;top:257.80px;font-size:6px;line-height:7.80px;color:#0a0a20;white-space:nowrap;-webkit-text-stroke:0.06px #0a0a20;">Ring Current (mA)</div><div style="left:520.5px;top:265.7px;width:48.5px;height:11.5px;background:#d4d4d4;border-top:1px solid #8c8c8c;border-left:1px solid #8c8c8c;border-bottom:1px solid #e2e2e2;border-right:1px solid #e2e2e2;box-sizing:border-box;"></div><div style="left:523px;top:268.80px;font-size:6px;line-height:7.80px;color:#0a0a20;white-space:nowrap;-webkit-text-stroke:0.06px #0a0a20;">500.3</div><div style="left:520.5px;top:279.10px;font-size:6px;line-height:7.80px;color:#0a0a20;white-space:nowrap;-webkit-text-stroke:0.06px #0a0a20;">Izero</div><div style="left:520.5px;top:287px;width:48.5px;height:11.5px;background:#d4d4d4;border-top:1px solid #8c8c8c;border-left:1px solid #8c8c8c;border-bottom:1px solid #e2e2e2;border-right:1px solid #e2e2e2;box-sizing:border-box;"></div><div style="left:523px;top:290.10px;font-size:6px;line-height:7.80px;color:#0a0a20;white-space:nowrap;-webkit-text-stroke:0.06px #0a0a20;">23964</div><div style="left:520.5px;top:300.60px;font-size:6px;line-height:7.80px;color:#0a0a20;white-space:nowrap;-webkit-text-stroke:0.06px #0a0a20;">Total Flux per frame (AI)</div><div style="left:520.5px;top:308.5px;width:48.5px;height:11.5px;background:#d4d4d4;border-top:1px solid #8c8c8c;border-left:1px solid #8c8c8c;border-bottom:1px solid #e2e2e2;border-right:1px solid #e2e2e2;box-sizing:border-box;"></div><div style="left:523px;top:311.60px;font-size:6px;line-height:7.80px;color:#0a0a20;white-space:nowrap;-webkit-text-stroke:0.06px #0a0a20;">0</div><div style="left:520.5px;top:322.40px;font-size:6px;line-height:7.80px;color:#0a0a20;white-space:nowrap;-webkit-text-stroke:0.06px #0a0a20;">Total Counts</div><div style="left:520.5px;top:330.3px;width:48.5px;height:11.5px;background:#d4d4d4;border-top:1px solid #8c8c8c;border-left:1px solid #8c8c8c;border-bottom:1px solid #e2e2e2;border-right:1px solid #e2e2e2;box-sizing:border-box;"></div><div style="left:523px;top:333.40px;font-size:6px;line-height:7.80px;color:#0a0a20;white-space:nowrap;-webkit-text-stroke:0.06px #0a0a20;">1956047</div><div style="left:520.5px;top:343.70px;font-size:6px;line-height:7.80px;color:#0a0a20;white-space:nowrap;-webkit-text-stroke:0.06px #0a0a20;">Time on this frame (s)</div><div style="left:520.5px;top:351.6px;width:48.5px;height:11.5px;background:#d4d4d4;border-top:1px solid #8c8c8c;border-left:1px solid #8c8c8c;border-bottom:1px solid #e2e2e2;border-right:1px solid #e2e2e2;box-sizing:border-box;"></div><div style="left:523px;top:354.70px;font-size:6px;line-height:7.80px;color:#0a0a20;white-space:nowrap;-webkit-text-stroke:0.06px #0a0a20;">93.7</div><div style="left:520.5px;top:366.10px;font-size:6px;line-height:7.80px;color:#0a0a20;white-space:nowrap;-webkit-text-stroke:0.06px #0a0a20;">Frame #</div><div style="left:520.5px;top:374px;width:31.5px;height:11.5px;background:#d4d4d4;border-top:1px solid #8c8c8c;border-left:1px solid #8c8c8c;border-bottom:1px solid #e2e2e2;border-right:1px solid #e2e2e2;box-sizing:border-box;"></div><div style="left:523px;top:377.10px;font-size:6px;line-height:7.80px;color:#0a0a20;white-space:nowrap;-webkit-text-stroke:0.06px #0a0a20;">1</div><div style="left:590.5px;top:251px;width:92.0px;height:23px;border-top:1px solid #7c7c7c;border-left:1px solid #7c7c7c;border-bottom:1px solid #e6e6e6;border-right:1px solid #e6e6e6;box-sizing:border-box;box-shadow:inset 1px 1px 0 #e0e0e0, inset -1px -1px 0 #8a8a8a;"></div><div style="left:590.5px;top:275px;width:92.0px;height:26px;border-top:1px solid #7c7c7c;border-left:1px solid #7c7c7c;border-bottom:1px solid #e6e6e6;border-right:1px solid #e6e6e6;box-sizing:border-box;box-shadow:inset 1px 1px 0 #e0e0e0, inset -1px -1px 0 #8a8a8a;"></div><div style="left:590.5px;top:302px;width:92.0px;height:45.5px;border-top:1px solid #7c7c7c;border-left:1px solid #7c7c7c;border-bottom:1px solid #e6e6e6;border-right:1px solid #e6e6e6;box-sizing:border-box;box-shadow:inset 1px 1px 0 #e0e0e0, inset -1px -1px 0 #8a8a8a;"></div><div style="left:590.5px;top:349px;width:92.0px;height:37px;border-top:1px solid #7c7c7c;border-left:1px solid #7c7c7c;border-bottom:1px solid #e6e6e6;border-right:1px solid #e6e6e6;box-sizing:border-box;box-shadow:inset 1px 1px 0 #e0e0e0, inset -1px -1px 0 #8a8a8a;"></div><div style="left:604px;top:252.70px;font-size:6px;line-height:7.80px;color:#0a0a20;white-space:nowrap;-webkit-text-stroke:0.06px #0a0a20;">Exposure (s)</div><div style="left:597px;top:261px;width:7px;height:12px;background:linear-gradient(90deg,#b0b0b0,#e8e8e8 45%,#b8b8b8);border:1px solid #8a8a8a;border-radius:3.5px/5px;box-sizing:border-box;"></div><svg style="left:597px;top:261px" width="7" height="12"><path d="M1.90 5.00L3.50 2.50L5.10 5.00M1.90 7.00L3.50 9.50L5.10 7.00M1 6.00H6" fill="none" stroke="#707070" stroke-width="0.6"/></svg><div style="left:605px;top:261.5px;width:28px;height:10.0px;background:#ffffff;border-top:1px solid #8c8c8c;border-left:1px solid #8c8c8c;border-bottom:1px solid #e2e2e2;border-right:1px solid #e2e2e2;box-sizing:border-box;"></div><div style="left:607px;top:263.60px;font-size:6px;line-height:7.80px;color:#0a0a20;white-space:nowrap;-webkit-text-stroke:0.06px #0a0a20;">90</div><div style="left:644px;top:255.60px;font-size:6px;line-height:7.80px;color:#0a0a20;white-space:nowrap;-webkit-text-stroke:0.06px #0a0a20;">Save Snaps</div><div style="left:644px;top:262.5px;width:7px;height:7.0px;background:#ececec;border:1px solid #505050;box-sizing:border-box;"></div><div style="left:607px;top:280px;width:56px;height:15px;background:linear-gradient(#ececec,#d2d2d2 60%,#c4c4c4);border:1px solid #6e6e6e;box-sizing:border-box;box-shadow:inset -1px -1px 0 #9a9a9a;"></div><div style="left:435.0px;width:400px;text-align:center;top:285.40px;font-size:6px;line-height:7.80px;color:#1a1a2e;white-space:nowrap;-webkit-text-stroke:0.06px #1a1a2e;">Snap Picture</div><div style="left:607px;top:307px;width:56px;height:14.5px;background:linear-gradient(#ececec,#d2d2d2 60%,#c4c4c4);border:1px solid #6e6e6e;box-sizing:border-box;box-shadow:inset -1px -1px 0 #9a9a9a;"></div><div style="left:435.0px;width:400px;text-align:center;top:312.15px;font-size:6px;line-height:7.80px;color:#1a1a2e;white-space:nowrap;-webkit-text-stroke:0.06px #1a1a2e;">Take Pictures</div><div style="left:607px;top:325.70px;font-size:6px;line-height:7.80px;color:#0a0a20;white-space:nowrap;-webkit-text-stroke:0.06px #0a0a20;">Time between pictures (s)</div><div style="left:608px;top:332px;width:7px;height:12px;background:linear-gradient(90deg,#b0b0b0,#e8e8e8 45%,#b8b8b8);border:1px solid #8a8a8a;border-radius:3.5px/5px;box-sizing:border-box;"></div><svg style="left:608px;top:332px" width="7" height="12"><path d="M1.90 5.00L3.50 2.50L5.10 5.00M1.90 7.00L3.50 9.50L5.10 7.00M1 6.00H6" fill="none" stroke="#707070" stroke-width="0.6"/></svg><div style="left:616px;top:333px;width:27px;height:10.5px;background:#ffffff;border-top:1px solid #8c8c8c;border-left:1px solid #8c8c8c;border-bottom:1px solid #e2e2e2;border-right:1px solid #e2e2e2;box-sizing:border-box;"></div><div style="left:618px;top:335.60px;font-size:6px;line-height:7.80px;color:#0a0a20;white-space:nowrap;-webkit-text-stroke:0.06px #0a0a20;">0</div><div style="left:607px;top:354px;width:56px;height:14.5px;background:linear-gradient(#ececec,#d2d2d2 60%,#c4c4c4);border:1px solid #6e6e6e;box-sizing:border-box;box-shadow:inset -1px -1px 0 #9a9a9a;"></div><div style="left:435.0px;width:400px;text-align:center;top:359.15px;font-size:6px;line-height:7.80px;color:#1a1a2e;white-space:nowrap;-webkit-text-stroke:0.06px #1a1a2e;">Take Dark Image</div><div style="left:609.5px;top:373px;width:7.0px;height:7px;background:#ececec;border:1px solid #505050;box-sizing:border-box;"></div><svg style="left:609.5px;top:373px" width="7" height="7"><path d="M1.5 1.5L5.5 5.5M5.5 1.5L1.5 5.5" stroke="#333" stroke-width="0.9"/></svg><div style="left:618px;top:373.40px;font-size:6px;line-height:7.80px;color:#0a0a20;white-space:nowrap;-webkit-text-stroke:0.06px #0a0a20;">Subtract Dark Image</div><div style="left:602px;top:387.5px;width:14px;height:6.5px;background:radial-gradient(ellipse 45% 40% at 35% 35%,rgba(255,255,255,0.35),rgba(255,255,255,0) 100%),linear-gradient(#8cff60,#38d020);border:1px solid #6a6a6a;box-sizing:border-box;"></div><div style="left:619px;top:388.30px;font-size:6px;line-height:7.80px;color:#0a0a20;white-space:nowrap;-webkit-text-stroke:0.06px #0a0a20;">Shutter will open</div><div style="left:691px;top:457px;width:6px;height:18.5px;background:#dcdcdc;border:1px solid #c8c8c8;box-sizing:border-box;"></div><div style="left:8px;top:402px;width:156px;height:22px;background:linear-gradient(90deg,#c4c4c4,#d0d0d0 5px,#c8c8c8 calc(100% - 10px),#9a9a9a calc(100% - 2.5px),#6a6a6a);border-top:1px solid #e4e4e4;border-bottom:1px solid #8a8a8a;box-sizing:border-box;"></div><div style="left:14.5px;top:408.5px;width:142.5px;height:9.5px;background:#ffffff;border-top:1px solid #8a8a8a;border-left:1px solid #8a8a8a;box-sizing:border-box;"></div><div style="left:22px;top:413px;width:2px;height:1px;background:#aaa;"></div><svg style="left:25px;top:409px" width="9.5" height="8.5"><rect width="9.5" height="8.5" fill="#000"/><path d="M0.5 4.3H9M4.75 0.5V8" stroke="#c8c000" stroke-width="0.9"/><circle cx="4.75" cy="4.3" r="2" fill="none" stroke="#c8c000" stroke-width="0.9"/></svg><div style="left:35px;top:409px;width:25px;height:8.5px;background:#ffff00;"></div><div style="left:36px;top:410.40px;font-size:6px;line-height:7.80px;color:#0a0a20;white-space:nowrap;-webkit-text-stroke:0.06px #0a0a20;">Cursor 0</div><div style="left:70px;top:409px;width:1px;height:9px;background:#c8c8c8;"></div><div style="left:95px;top:409px;width:1px;height:9px;background:#c8c8c8;"></div><div style="left:120px;top:409px;width:1px;height:9px;background:#c8c8c8;"></div><div style="left:73px;top:410.40px;font-size:6px;line-height:7.80px;color:#0a0a20;white-space:nowrap;-webkit-text-stroke:0.06px #0a0a20;">605</div><div style="left:98px;top:410.40px;font-size:6px;line-height:7.80px;color:#0a0a20;white-space:nowrap;-webkit-text-stroke:0.06px #0a0a20;">269</div><div style="left:123px;top:410.40px;font-size:6px;line-height:7.80px;color:#0a0a20;white-space:nowrap;-webkit-text-stroke:0.06px #0a0a20;">0</div><div style="left:-130px;width:400px;text-align:center;top:427.90px;font-size:6px;line-height:7.80px;color:#0a0a20;white-space:nowrap;-webkit-text-stroke:0.06px #0a0a20;">Display ROI</div><div style="left:56px;top:436px;width:22px;height:11px;background:linear-gradient(#ececec,#d2d2d2 60%,#c4c4c4);border:1px solid #6e6e6e;box-sizing:border-box;box-shadow:inset -1px -1px 0 #9a9a9a;"></div><div style="left:-133.0px;width:400px;text-align:center;top:439.40px;font-size:6px;line-height:7.80px;color:#1a1a2e;white-space:nowrap;-webkit-text-stroke:0.06px #1a1a2e;">ROI</div><div style="left:56px;top:452px;width:22px;height:11.5px;background:linear-gradient(#ececec,#d2d2d2 60%,#c4c4c4);border:1px solid #6e6e6e;box-sizing:border-box;box-shadow:inset -1px -1px 0 #9a9a9a;"></div><div style="left:-133.0px;width:400px;text-align:center;top:455.65px;font-size:6px;line-height:7.80px;color:#1a1a2e;white-space:nowrap;-webkit-text-stroke:0.06px #1a1a2e;">Full</div><div style="left:57px;top:453px;width:20px;height:9.5px;background:linear-gradient(#a4a4a4,#9a9a9a);box-shadow:inset 1px 1px 0 #7a7a7a;"></div><div style="left:-133px;width:400px;text-align:center;top:454.90px;font-size:6px;line-height:7.80px;color:#0a0a20;white-space:nowrap;-webkit-text-stroke:0.06px #0a0a20;">Full</div><div style="left:-135px;width:400px;text-align:center;top:481.10px;font-size:6px;line-height:7.80px;color:#0a0a20;white-space:nowrap;-webkit-text-stroke:0.06px #0a0a20;">Set BG subtr. ROI</div><div style="left:37px;top:492.5px;width:14px;height:6.0px;background:radial-gradient(ellipse 45% 40% at 35% 35%,rgba(255,255,255,0.35),rgba(255,255,255,0) 100%),linear-gradient(#4a7a40,#143a10);border:1px solid #6a6a6a;box-sizing:border-box;"></div><div style="left:55.5px;top:489px;width:21.5px;height:12px;background:linear-gradient(#ececec,#d2d2d2 60%,#c4c4c4);border:1px solid #6e6e6e;box-sizing:border-box;box-shadow:inset -1px -1px 0 #9a9a9a;"></div><div style="left:-133.75px;width:400px;text-align:center;top:492.90px;font-size:6px;line-height:7.80px;color:#1a1a2e;white-space:nowrap;-webkit-text-stroke:0.06px #1a1a2e;">Set</div><div style="left:-134.5px;width:400px;text-align:center;top:504.70px;font-size:6px;line-height:7.80px;color:#0a0a20;white-space:nowrap;-webkit-text-stroke:0.06px #0a0a20;">Clear BG ROI</div><div style="left:55.5px;top:514px;width:21.5px;height:11.5px;background:linear-gradient(#ececec,#d2d2d2 60%,#c4c4c4);border:1px solid #6e6e6e;box-sizing:border-box;box-shadow:inset -1px -1px 0 #9a9a9a;"></div><div style="left:-133.75px;width:400px;text-align:center;top:517.65px;font-size:6px;line-height:7.80px;color:#1a1a2e;white-space:nowrap;-webkit-text-stroke:0.06px #1a1a2e;">Clear</div><div style="left:37px;top:526.5px;width:44.5px;height:12.5px;background:linear-gradient(#ececec,#d2d2d2 60%,#c4c4c4);border:1px solid #6e6e6e;box-sizing:border-box;box-shadow:inset -1px -1px 0 #9a9a9a;"></div><div style="left:-140.75px;width:400px;text-align:center;top:530.26px;font-size:6.6px;line-height:8.58px;font-weight:bold;color:#d01818;white-space:nowrap;-webkit-text-stroke:0.06px #d01818;">Stop Motors</div><div style="left:100px;top:431.10px;font-size:6px;line-height:7.80px;color:#0a0a20;white-space:nowrap;-webkit-text-stroke:0.06px #0a0a20;">Clip to ROI</div><div style="left:131px;top:430px;width:21.5px;height:11.5px;background:linear-gradient(#ececec,#d2d2d2 60%,#c4c4c4);border:1px solid #6e6e6e;box-sizing:border-box;box-shadow:inset -1px -1px 0 #9a9a9a;"></div><div style="left:-58.25px;width:400px;text-align:center;top:433.65px;font-size:6px;line-height:7.80px;color:#1a1a2e;white-space:nowrap;-webkit-text-stroke:0.06px #1a1a2e;">NO</div><div style="left:159.5px;top:431.5px;width:7.0px;height:7.0px;background:#f4f4f4;border:1px solid #a0a0a0;box-sizing:border-box;"></div><svg style="left:159.5px;top:431.5px" width="7" height="7"><path d="M1.6 3.6L3 5.6L5.4 1.6" stroke="#4a5aa8" stroke-width="1.3" fill="none" stroke-linecap="round"/></svg><div style="left:167.5px;top:432.10px;font-size:6px;line-height:7.80px;color:#0a0a20;white-space:nowrap;-webkit-text-stroke:0.06px #0a0a20;">Save Full Image</div><div style="left:96px;top:445.5px;width:16px;height:5.5px;background:radial-gradient(ellipse 45% 40% at 35% 35%,rgba(255,255,255,0.35),rgba(255,255,255,0) 100%),linear-gradient(#a04030,#601008);border:1px solid #6a6a6a;box-sizing:border-box;"></div><div style="left:114.5px;top:445.40px;font-size:6px;line-height:7.80px;color:#0a0a20;white-space:nowrap;-webkit-text-stroke:0.06px #0a0a20;">Bad Motor Name</div><div style="left:101.5px;top:458.10px;font-size:6px;line-height:7.80px;color:#0a0a20;white-space:nowrap;-webkit-text-stroke:0.06px #0a0a20;">Instrument</div><div style="left:96px;top:465.5px;width:7px;height:12.0px;background:linear-gradient(90deg,#b0b0b0,#e8e8e8 45%,#b8b8b8);border:1px solid #8a8a8a;border-radius:3.5px/5px;box-sizing:border-box;"></div><svg style="left:96px;top:465.5px" width="7" height="12.0"><path d="M1.90 5.00L3.50 2.50L5.10 5.00M1.90 7.00L3.50 9.50L5.10 7.00M1 6.00H6" fill="none" stroke="#707070" stroke-width="0.6"/></svg><div style="left:103px;top:466px;width:71px;height:11px;background:#ffffff;border-top:1px solid #8c8c8c;border-left:1px solid #8c8c8c;border-bottom:1px solid #e2e2e2;border-right:1px solid #e2e2e2;box-sizing:border-box;"></div><div style="left:105px;top:468.60px;font-size:6px;line-height:7.80px;color:#0a0a20;white-space:nowrap;-webkit-text-stroke:0.06px #0a0a20;">Andor</div><div style="left:96px;top:479.60px;font-size:6px;line-height:7.80px;color:#0a0a20;white-space:nowrap;-webkit-text-stroke:0.06px #0a0a20;">X Motor</div><div style="left:96px;top:487.5px;width:78px;height:12.0px;background:#d4d4d4;border-top:1px solid #8c8c8c;border-left:1px solid #8c8c8c;border-bottom:1px solid #e2e2e2;border-right:1px solid #e2e2e2;box-sizing:border-box;"></div><div style="left:98px;top:490.60px;font-size:6px;line-height:7.80px;color:#0a0a20;white-space:nowrap;-webkit-text-stroke:0.06px #0a0a20;">BL 8 Energy</div><div style="left:96px;top:504.10px;font-size:6px;line-height:7.80px;color:#8e8e8e;white-space:nowrap;-webkit-text-stroke:0.06px #8e8e8e;">Y Motor</div><div style="left:96px;top:512.5px;width:78px;height:12.0px;background:#c6c6c6;border-top:1px solid #8c8c8c;border-left:1px solid #8c8c8c;border-bottom:1px solid #e2e2e2;border-right:1px solid #e2e2e2;box-sizing:border-box;"></div><div style="left:223.5px;top:425.90px;font-size:6px;line-height:7.80px;color:#0a0a20;white-space:nowrap;-webkit-text-stroke:0.06px #0a0a20;">Min value</div><div style="left:223.5px;top:434.5px;width:32.0px;height:10.5px;background:#d4d4d4;border-top:1px solid #8c8c8c;border-left:1px solid #8c8c8c;border-bottom:1px solid #e2e2e2;border-right:1px solid #e2e2e2;box-sizing:border-box;"></div><div style="left:226px;top:436.90px;font-size:6px;line-height:7.80px;color:#0a0a20;white-space:nowrap;-webkit-text-stroke:0.06px #0a0a20;">0</div><div style="left:261px;top:425.90px;font-size:6px;line-height:7.80px;color:#0a0a20;white-space:nowrap;-webkit-text-stroke:0.06px #0a0a20;">Max value</div><div style="left:261px;top:434.5px;width:32.5px;height:10.5px;background:#d4d4d4;border-top:1px solid #8c8c8c;border-left:1px solid #8c8c8c;border-bottom:1px solid #e2e2e2;border-right:1px solid #e2e2e2;box-sizing:border-box;"></div><div style="left:263.5px;top:436.90px;font-size:6px;line-height:7.80px;color:#0a0a20;white-space:nowrap;-webkit-text-stroke:0.06px #0a0a20;">1032</div><div style="left:300.5px;top:425.90px;font-size:6px;line-height:7.80px;color:#0a0a20;white-space:nowrap;-webkit-text-stroke:0.06px #0a0a20;">Background</div><div style="left:301px;top:434.5px;width:32px;height:10.5px;background:#d4d4d4;border-top:1px solid #8c8c8c;border-left:1px solid #8c8c8c;border-bottom:1px solid #e2e2e2;border-right:1px solid #e2e2e2;box-sizing:border-box;"></div><div style="left:303.5px;top:436.90px;font-size:6px;line-height:7.80px;color:#0a0a20;white-space:nowrap;-webkit-text-stroke:0.06px #0a0a20;">0</div><div style="left:265px;top:403.36px;font-size:5.6px;line-height:7.28px;color:#0a0a20;white-space:nowrap;-webkit-text-stroke:0.06px #0a0a20;">View</div><div style="left:259px;top:409px;width:7px;height:12px;background:linear-gradient(90deg,#b0b0b0,#e8e8e8 45%,#b8b8b8);border:1px solid #8a8a8a;border-radius:3.5px/5px;box-sizing:border-box;"></div><svg style="left:259px;top:409px" width="7" height="12"><path d="M1.90 5.00L3.50 2.50L5.10 5.00M1.90 7.00L3.50 9.50L5.10 7.00M1 6.00H6" fill="none" stroke="#707070" stroke-width="0.6"/></svg><div style="left:266.5px;top:410px;width:31.5px;height:11px;background:#ffffff;border-top:1px solid #8c8c8c;border-left:1px solid #8c8c8c;border-bottom:1px solid #e2e2e2;border-right:1px solid #e2e2e2;box-sizing:border-box;"></div><div style="left:268.5px;top:412.60px;font-size:6px;line-height:7.80px;color:#0a0a20;white-space:nowrap;-webkit-text-stroke:0.06px #0a0a20;">Intensity</div><div style="left:305px;top:409px;width:7px;height:12px;background:linear-gradient(90deg,#b0b0b0,#e8e8e8 45%,#b8b8b8);border:1px solid #8a8a8a;border-radius:3.5px/5px;box-sizing:border-box;"></div><svg style="left:305px;top:409px" width="7" height="12"><path d="M1.90 5.00L3.50 2.50L5.10 5.00M1.90 7.00L3.50 9.50L5.10 7.00M1 6.00H6" fill="none" stroke="#707070" stroke-width="0.6"/></svg><div style="left:313px;top:410px;width:56.5px;height:10.5px;background:#ffffff;border-top:1px solid #8c8c8c;border-left:1px solid #8c8c8c;border-bottom:1px solid #e2e2e2;border-right:1px solid #e2e2e2;box-sizing:border-box;"></div><div style="left:315px;top:412.10px;font-size:6px;line-height:7.80px;color:#0a0a20;white-space:nowrap;-webkit-text-stroke:0.06px #0a0a20;">Rainbow</div><div style="left:374.5px;top:409px;width:7.0px;height:7px;background:#f4f4f4;border:1px solid #a0a0a0;box-sizing:border-box;"></div><svg style="left:374.5px;top:409px" width="7" height="7"><path d="M1.6 3.6L3 5.6L5.4 1.6" stroke="#4a5aa8" stroke-width="1.3" fill="none" stroke-linecap="round"/></svg><div style="left:383px;top:410.10px;font-size:6px;line-height:7.80px;color:#0a0a20;white-space:nowrap;-webkit-text-stroke:0.06px #0a0a20;">Use Image Size</div><div style="left:383px;top:417.10px;font-size:6px;line-height:7.80px;color:#0a0a20;white-space:nowrap;-webkit-text-stroke:0.06px #0a0a20;">For X/Y Scales</div><div style="left:375px;top:427px;width:7px;height:7px;background:#e8e8e8;border:1px solid #b8b8b8;box-sizing:border-box;"></div><div style="left:383px;top:428.10px;font-size:6px;line-height:7.80px;color:#0a0a20;white-space:nowrap;-webkit-text-stroke:0.06px #0a0a20;">Autoscale X</div><div style="left:375px;top:440px;width:7px;height:7px;background:#e8e8e8;border:1px solid #b8b8b8;box-sizing:border-box;"></div><div style="left:383px;top:440.60px;font-size:6px;line-height:7.80px;color:#0a0a20;white-space:nowrap;-webkit-text-stroke:0.06px #0a0a20;">Autoscale Y</div><div style="left:187px;top:456.70px;font-size:6px;line-height:7.80px;color:#0a0a20;white-space:nowrap;-webkit-text-stroke:0.06px #0a0a20;">Temperature</div><div style="left:187px;top:464.5px;width:28px;height:10.5px;background:#d4d4d4;border-top:1px solid #8c8c8c;border-left:1px solid #8c8c8c;border-bottom:1px solid #e2e2e2;border-right:1px solid #e2e2e2;box-sizing:border-box;"></div><div style="left:189px;top:467.10px;font-size:6px;line-height:7.80px;color:#0a0a20;white-space:nowrap;-webkit-text-stroke:0.06px #0a0a20;">-79</div><div style="left:187px;top:480.10px;font-size:6px;line-height:7.80px;color:#0a0a20;white-space:nowrap;-webkit-text-stroke:0.06px #0a0a20;">Goal Position</div><div style="left:187px;top:488px;width:28px;height:12px;background:#dcdcdc;border-top:1px solid #8c8c8c;border-left:1px solid #8c8c8c;border-bottom:1px solid #e2e2e2;border-right:1px solid #e2e2e2;box-sizing:border-box;"></div><div style="left:188.5px;top:491.10px;font-size:6px;line-height:7.80px;color:#0a0a20;white-space:nowrap;-webkit-text-stroke:0.06px #0a0a20;">630.0000</div><div style="left:227px;top:480.10px;font-size:6px;line-height:7.80px;color:#0a0a20;white-space:nowrap;-webkit-text-stroke:0.06px #0a0a20;">Actual Position</div><div style="left:226px;top:488px;width:28.5px;height:12px;background:#dcdcdc;border-top:1px solid #8c8c8c;border-left:1px solid #8c8c8c;border-bottom:1px solid #e2e2e2;border-right:1px solid #e2e2e2;box-sizing:border-box;"></div><div style="left:227.5px;top:491.10px;font-size:6px;line-height:7.80px;color:#0a0a20;white-space:nowrap;-webkit-text-stroke:0.06px #0a0a20;">733.0046</div><div style="left:187px;top:504.10px;font-size:6px;line-height:7.80px;color:#8e8e8e;white-space:nowrap;-webkit-text-stroke:0.06px #8e8e8e;">Goal Position</div><div style="left:187px;top:512px;width:28px;height:12px;background:#c6c6c6;border-top:1px solid #8c8c8c;border-left:1px solid #8c8c8c;border-bottom:1px solid #e2e2e2;border-right:1px solid #e2e2e2;box-sizing:border-box;"></div><div style="left:189px;top:515.10px;font-size:6px;line-height:7.80px;color:#8e8e8e;white-space:nowrap;-webkit-text-stroke:0.06px #8e8e8e;">0.0000</div><div style="left:227px;top:504.10px;font-size:6px;line-height:7.80px;color:#8e8e8e;white-space:nowrap;-webkit-text-stroke:0.06px #8e8e8e;">Actual Position</div><div style="left:226px;top:512px;width:28.5px;height:12px;background:#c6c6c6;border-top:1px solid #8c8c8c;border-left:1px solid #8c8c8c;border-bottom:1px solid #e2e2e2;border-right:1px solid #e2e2e2;box-sizing:border-box;"></div><div style="left:228px;top:515.10px;font-size:6px;line-height:7.80px;color:#8e8e8e;white-space:nowrap;-webkit-text-stroke:0.06px #8e8e8e;">0.0000</div><div style="left:271px;top:465px;width:16px;height:7px;background:radial-gradient(ellipse 45% 40% at 35% 35%,rgba(255,255,255,0.35),rgba(255,255,255,0) 100%),linear-gradient(#4a7a40,#143a10);border:1px solid #6a6a6a;box-sizing:border-box;"></div><div style="left:294px;top:461px;width:74.5px;height:12.5px;background:#d4d4d4;border-top:1px solid #8c8c8c;border-left:1px solid #8c8c8c;border-bottom:1px solid #e2e2e2;border-right:1px solid #e2e2e2;box-sizing:border-box;"></div><div style="left:297px;top:464.40px;font-size:6px;line-height:7.80px;color:#0a0a20;white-space:nowrap;-webkit-text-stroke:0.06px #0a0a20;">Idle</div><div style="left:321px;top:478.40px;font-size:6px;line-height:7.80px;color:#0a0a20;white-space:nowrap;-webkit-text-stroke:0.06px #0a0a20;">X Move #</div><div style="left:321px;top:486px;width:29px;height:11.5px;background:#d4d4d4;border-top:1px solid #8c8c8c;border-left:1px solid #8c8c8c;border-bottom:1px solid #e2e2e2;border-right:1px solid #e2e2e2;box-sizing:border-box;"></div><div style="left:323.5px;top:488.90px;font-size:6px;line-height:7.80px;color:#0a0a20;white-space:nowrap;-webkit-text-stroke:0.06px #0a0a20;">0</div><div style="left:271px;top:489.5px;width:16px;height:6.5px;background:radial-gradient(ellipse 45% 40% at 35% 35%,rgba(255,255,255,0.35),rgba(255,255,255,0) 100%),linear-gradient(#4a7a40,#143a10);border:1px solid #6a6a6a;box-sizing:border-box;"></div><div style="left:293px;top:489.40px;font-size:6px;line-height:7.80px;color:#0a0a20;white-space:nowrap;-webkit-text-stroke:0.06px #0a0a20;">Moving</div><div style="left:271px;top:513.5px;width:16px;height:6.5px;background:radial-gradient(ellipse 45% 40% at 35% 35%,rgba(255,255,255,0.35),rgba(255,255,255,0) 100%),linear-gradient(#a8c0a0,#7a9a70);border:1px solid #6a6a6a;box-sizing:border-box;"></div><div style="left:293px;top:514.10px;font-size:6px;line-height:7.80px;color:#8e8e8e;white-space:nowrap;-webkit-text-stroke:0.06px #8e8e8e;">Moving</div><div style="left:271px;top:530px;width:16px;height:6.5px;background:radial-gradient(ellipse 45% 40% at 35% 35%,rgba(255,255,255,0.35),rgba(255,255,255,0) 100%),linear-gradient(#4a7a40,#143a10);border:1px solid #6a6a6a;box-sizing:border-box;"></div><div style="left:292px;top:526.40px;font-size:6px;line-height:7.80px;color:#0a0a20;white-space:nowrap;-webkit-text-stroke:0.06px #0a0a20;">Waiting for</div><div style="left:292px;top:533.40px;font-size:6px;line-height:7.80px;color:#0a0a20;white-space:nowrap;-webkit-text-stroke:0.06px #0a0a20;">Instrument</div><div style="left:271px;top:546px;width:16px;height:6.5px;background:radial-gradient(ellipse 45% 40% at 35% 35%,rgba(255,255,255,0.35),rgba(255,255,255,0) 100%),linear-gradient(#4a7a40,#143a10);border:1px solid #6a6a6a;box-sizing:border-box;"></div><div style="left:292px;top:545.60px;font-size:6px;line-height:7.80px;color:#0a0a20;white-space:nowrap;-webkit-text-stroke:0.06px #0a0a20;">Writing Files</div><div style="left:271px;top:556.30px;font-size:6px;line-height:7.80px;color:#0a0a20;white-space:nowrap;-webkit-text-stroke:0.06px #0a0a20;">Percent Complete</div><div style="left:271.5px;top:567px;width:69.5px;height:9px;background:#ff1010;border:1px solid #6a6a6a;box-shadow:inset 0 1px 0 #ff8080;box-sizing:border-box;"></div><svg style="left:271px;top:576px" width="72" height="4"><rect x="0.50" y="0.5" width="0.9" height="2" fill="#333"/><rect x="17.90" y="0.5" width="0.9" height="2" fill="#333"/><rect x="35.30" y="0.5" width="0.9" height="2" fill="#333"/><rect x="52.70" y="0.5" width="0.9" height="2" fill="#333"/><rect x="70.10" y="0.5" width="0.9" height="2" fill="#333"/></svg><div style="left:342.5px;top:565.5px;width:14.0px;height:9.5px;background:#ffffff;border-top:1px solid #8c8c8c;border-left:1px solid #8c8c8c;border-bottom:1px solid #e2e2e2;border-right:1px solid #e2e2e2;box-sizing:border-box;"></div><div style="left:344px;top:567.40px;font-size:6px;line-height:7.80px;color:#0a0a20;white-space:nowrap;-webkit-text-stroke:0.06px #0a0a20;">100</div><div style="left:378.5px;top:452.10px;font-size:6px;line-height:7.80px;color:#0a0a20;white-space:nowrap;-webkit-text-stroke:0.06px #0a0a20;">Frame Number</div><div style="left:378.5px;top:461px;width:28.5px;height:12px;background:#d4d4d4;border-top:1px solid #8c8c8c;border-left:1px solid #8c8c8c;border-bottom:1px solid #e2e2e2;border-right:1px solid #e2e2e2;box-sizing:border-box;"></div><div style="left:380.5px;top:464.10px;font-size:6px;line-height:7.80px;color:#0a0a20;white-space:nowrap;-webkit-text-stroke:0.06px #0a0a20;">1</div><div style="left:378.5px;top:478.10px;font-size:6px;line-height:7.80px;color:#0a0a20;white-space:nowrap;-webkit-text-stroke:0.06px #0a0a20;">Move Number</div><div style="left:378.5px;top:486.5px;width:28.5px;height:11.0px;background:#d4d4d4;border-top:1px solid #8c8c8c;border-left:1px solid #8c8c8c;border-bottom:1px solid #e2e2e2;border-right:1px solid #e2e2e2;box-sizing:border-box;"></div><div style="left:380.5px;top:489.10px;font-size:6px;line-height:7.80px;color:#0a0a20;white-space:nowrap;-webkit-text-stroke:0.06px #0a0a20;">41</div><div style="left:378.5px;top:503.10px;font-size:6px;line-height:7.80px;color:#0a0a20;white-space:nowrap;-webkit-text-stroke:0.06px #0a0a20;">Total # of Moves</div><div style="left:378.5px;top:511.5px;width:28.5px;height:11.0px;background:#d4d4d4;border-top:1px solid #8c8c8c;border-left:1px solid #8c8c8c;border-bottom:1px solid #e2e2e2;border-right:1px solid #e2e2e2;box-sizing:border-box;"></div><div style="left:380.5px;top:514.10px;font-size:6px;line-height:7.80px;color:#0a0a20;white-space:nowrap;-webkit-text-stroke:0.06px #0a0a20;">41</div><div style="left:348px;top:530.5px;width:16px;height:6.0px;background:radial-gradient(ellipse 45% 40% at 35% 35%,rgba(255,255,255,0.35),rgba(255,255,255,0) 100%),linear-gradient(#903030,#4a0808);border:1px solid #6a6a6a;box-sizing:border-box;"></div><div style="left:369px;top:529.40px;font-size:6px;line-height:7.80px;color:#0a0a20;white-space:nowrap;-webkit-text-stroke:0.06px #0a0a20;">Beam Dumped</div><div style="left:372px;top:539px;width:6px;height:6px;background:#e8e8e8;border:1px solid #b8b8b8;box-sizing:border-box;"></div><div style="left:379px;top:539.40px;font-size:6px;line-height:7.80px;color:#0a0a20;white-space:nowrap;-webkit-text-stroke:0.06px #0a0a20;">Ignore</div><div style="left:93px;top:525px;width:38.5px;height:14.5px;background:#f5b400;"></div><div style="left:95.5px;top:527px;width:33.5px;height:10.5px;background:linear-gradient(#ececec,#d2d2d2 60%,#c4c4c4);border:1px solid #6e6e6e;box-sizing:border-box;box-shadow:inset -1px -1px 0 #9a9a9a;"></div><div style="left:-87.75px;width:400px;text-align:center;top:530.15px;font-size:6px;line-height:7.80px;color:#c01818;white-space:nowrap;-webkit-text-stroke:0.06px #c01818;">Start Scan</div><div style="left:140px;top:527px;width:33.5px;height:11px;background:linear-gradient(#ececec,#d2d2d2 60%,#c4c4c4);border:1px solid #6e6e6e;box-sizing:border-box;box-shadow:inset -1px -1px 0 #9a9a9a;"></div><div style="left:-43.25px;width:400px;text-align:center;top:530.40px;font-size:6px;line-height:7.80px;color:#c01818;white-space:nowrap;-webkit-text-stroke:0.06px #c01818;">Pause</div><div style="left:184px;top:527px;width:32.5px;height:11px;background:linear-gradient(#ececec,#d2d2d2 60%,#c4c4c4);border:1px solid #6e6e6e;box-sizing:border-box;box-shadow:inset -1px -1px 0 #9a9a9a;"></div><div style="left:0.25px;width:400px;text-align:center;top:530.40px;font-size:6px;line-height:7.80px;color:#c01818;white-space:nowrap;-webkit-text-stroke:0.06px #c01818;">Stop Scan</div><div style="left:227px;top:527px;width:35.5px;height:11px;background:linear-gradient(#ececec,#d2d2d2 60%,#c4c4c4);border:1px solid #6e6e6e;box-sizing:border-box;box-shadow:inset -1px -1px 0 #9a9a9a;"></div><div style="left:44.75px;width:400px;text-align:center;top:530.40px;font-size:6px;line-height:7.80px;color:#c01818;white-space:nowrap;-webkit-text-stroke:0.06px #c01818;">Abort Scan</div><div style="left:58.5px;top:543.10px;font-size:6px;line-height:7.80px;color:#0a0a20;white-space:nowrap;-webkit-text-stroke:0.06px #0a0a20;">Current Scan Start Time</div><div style="left:59px;top:551px;width:87.5px;height:12px;background:#d4d4d4;border-top:1px solid #8c8c8c;border-left:1px solid #8c8c8c;border-bottom:1px solid #e2e2e2;border-right:1px solid #e2e2e2;box-sizing:border-box;"></div><div style="left:61px;top:554.10px;font-size:6px;line-height:7.80px;color:#0a0a20;white-space:nowrap;-webkit-text-stroke:0.06px #0a0a20;">12/2/2017 8:18:36 AM</div><div style="left:160.5px;top:543.10px;font-size:6px;line-height:7.80px;color:#0a0a20;white-space:nowrap;-webkit-text-stroke:0.06px #0a0a20;">Estimated Scan Finish TIme</div><div style="left:160.5px;top:551px;width:87.0px;height:12px;background:#d4d4d4;border-top:1px solid #8c8c8c;border-left:1px solid #8c8c8c;border-bottom:1px solid #e2e2e2;border-right:1px solid #e2e2e2;box-sizing:border-box;"></div><div style="left:162.5px;top:554.10px;font-size:6px;line-height:7.80px;color:#0a0a20;white-space:nowrap;-webkit-text-stroke:0.06px #0a0a20;">12/2/2017 9:24:59 AM</div><div style="left:414px;top:538.40px;font-size:6px;line-height:7.80px;color:#0a0a20;white-space:nowrap;-webkit-text-stroke:0.06px #0a0a20;">Normalize</div><div style="left:426px;top:547px;width:6px;height:6px;background:#e8e8e8;border:1px solid #b8b8b8;box-sizing:border-box;"></div><div style="left:446px;top:538.40px;font-size:6px;line-height:7.80px;color:#0a0a20;white-space:nowrap;-webkit-text-stroke:0.06px #0a0a20;">AI Channel</div><div style="left:440px;top:545px;width:7px;height:12px;background:linear-gradient(90deg,#b0b0b0,#e8e8e8 45%,#b8b8b8);border:1px solid #8a8a8a;border-radius:3.5px/5px;box-sizing:border-box;"></div><svg style="left:440px;top:545px" width="7" height="12"><path d="M1.90 5.00L3.50 2.50L5.10 5.00M1.90 7.00L3.50 9.50L5.10 7.00M1 6.00H6" fill="none" stroke="#707070" stroke-width="0.6"/></svg><div style="left:447px;top:545px;width:57.5px;height:11.5px;background:#ffffff;border-top:1px solid #8c8c8c;border-left:1px solid #8c8c8c;border-bottom:1px solid #e2e2e2;border-right:1px solid #e2e2e2;box-sizing:border-box;"></div><div style="left:449px;top:548.10px;font-size:6px;line-height:7.80px;color:#0a0a20;white-space:nowrap;-webkit-text-stroke:0.06px #0a0a20;">Izero</div><div style="left:371px;top:557.40px;font-size:6px;line-height:7.80px;color:#0a0a20;white-space:nowrap;-webkit-text-stroke:0.06px #0a0a20;">AI File</div><div style="left:371px;top:565px;width:312px;height:12.5px;background:#d4d4d4;border-top:1px solid #8c8c8c;border-left:1px solid #8c8c8c;border-bottom:1px solid #e2e2e2;border-right:1px solid #e2e2e2;box-sizing:border-box;"></div><div style="left:372px;top:566px;width:5px;height:11px;background:#c0c0c0;"></div><div style="left:372px;top:568.60px;font-size:6px;line-height:7.80px;color:#0a0a20;white-space:nowrap;-webkit-text-stroke:0.06px #0a0a20;">&#167;</div><div style="left:378px;top:568.63px;font-size:5.95px;line-height:7.74px;color:#0a0a20;white-space:nowrap;-webkit-text-stroke:0.06px #0a0a20;">C:\Beamline Controls\BCS Setup Data\CCD Files\2017 12 02\CCD Scan 9047\NLMO-Mn9047-AI.txt</div><div style="left:433px;top:403.84px;font-size:6.4px;line-height:8.32px;font-weight:bold;color:#0a0a20;white-space:nowrap;-webkit-text-stroke:0.06px #0a0a20;">Counts vs Position</div><div style="left:432px;top:412.5px;width:251.5px;height:121.0px;background:linear-gradient(90deg,#c0c0c0,#d4d4d4 5px,#c8c8c8 10px,#c8c8c8 calc(100% - 8px),#a8a8a8 calc(100% - 2px),#7a7a7a);border-top:1px solid #e4e4e4;border-bottom:1px solid #8a8a8a;box-sizing:border-box;"></div><svg style="left:476.5px;top:418.3px" width="200.50" height="93.70" viewBox="0 0 200.50 93.70"><rect width="200.50" height="93.70" fill="#000"/><path d="M4.01 0V93.70 M8.02 0V93.70 M12.03 0V93.70 M16.04 0V93.70 M24.06 0V93.70 M28.07 0V93.70 M32.08 0V93.70 M36.09 0V93.70 M44.11 0V93.70 M48.12 0V93.70 M52.13 0V93.70 M56.14 0V93.70 M64.16 0V93.70 M68.17 0V93.70 M72.18 0V93.70 M76.19 0V93.70 M84.21 0V93.70 M88.22 0V93.70 M92.23 0V93.70 M96.24 0V93.70 M104.26 0V93.70 M108.27 0V93.70 M112.28 0V93.70 M116.29 0V93.70 M124.31 0V93.70 M128.32 0V93.70 M132.33 0V93.70 M136.34 0V93.70 M144.36 0V93.70 M148.37 0V93.70 M152.38 0V93.70 M156.39 0V93.70 M164.41 0V93.70 M168.42 0V93.70 M172.43 0V93.70 M176.44 0V93.70 M184.46 0V93.70 M188.47 0V93.70 M192.48 0V93.70 M196.49 0V93.70 M0 2.68H200.50 M0 5.35H200.50 M0 8.03H200.50 M0 10.71H200.50 M0 16.06H200.50 M0 18.74H200.50 M0 21.42H200.50 M0 24.09H200.50 M0 29.45H200.50 M0 32.13H200.50 M0 34.80H200.50 M0 37.48H200.50 M0 42.83H200.50 M0 45.51H200.50 M0 48.19H200.50 M0 50.87H200.50 M0 56.22H200.50 M0 58.90H200.50 M0 61.57H200.50 M0 64.25H200.50 M0 69.61H200.50 M0 72.28H200.50 M0 74.96H200.50 M0 77.64H200.50 M0 82.99H200.50 M0 85.67H200.50 M0 88.35H200.50 M0 91.02H200.50" stroke="#363400" stroke-width="1" fill="none"/><path d="M0.00 0V93.70 M20.05 0V93.70 M40.10 0V93.70 M60.15 0V93.70 M80.20 0V93.70 M100.25 0V93.70 M120.30 0V93.70 M140.35 0V93.70 M160.40 0V93.70 M180.45 0V93.70 M200.50 0V93.70 M0 0.00H200.50 M0 13.39H200.50 M0 26.77H200.50 M0 40.16H200.50 M0 53.54H200.50 M0 66.93H200.50 M0 80.31H200.50 M0 93.70H200.50" stroke="#8c8a00" stroke-width="1" fill="none"/><polyline points="0.20,0.00 9.80,18.00 20.00,15.30 30.00,21.90 33.90,27.00 38.00,31.00 42.10,34.90 46.00,42.20 49.70,34.40 53.80,34.90 58.10,46.10 62.10,42.70 65.90,55.70 69.90,60.90 73.80,73.30 77.90,77.60 82.00,80.40 85.90,57.00 90.00,53.30 94.10,56.30 98.10,65.00 101.80,65.00 105.90,63.70 109.80,72.00 113.90,73.70 118.20,78.90 121.90,81.30 126.00,73.30 130.00,67.40 133.90,70.50 138.00,67.40 142.10,52.90 146.40,64.10 150.10,66.80 154.20,57.00 158.10,57.20 162.10,65.50 169.90,54.40 179.80,40.30 190.00,48.70 200.20,46.40" fill="none" stroke="#f4f4f4" stroke-width="0.9" shape-rendering="auto"/><rect x="-1.30" y="-1.50" width="3" height="3" fill="#ffffff" shape-rendering="auto"/><rect x="8.30" y="16.50" width="3" height="3" fill="#ffffff" shape-rendering="auto"/><rect x="18.50" y="13.80" width="3" height="3" fill="#ffffff" shape-rendering="auto"/><rect x="28.50" y="20.40" width="3" height="3" fill="#ffffff" shape-rendering="auto"/><rect x="32.40" y="25.50" width="3" height="3" fill="#ffffff" shape-rendering="auto"/><rect x="36.50" y="29.50" width="3" height="3" fill="#ffffff" shape-rendering="auto"/><rect x="40.60" y="33.40" width="3" height="3" fill="#ffffff" shape-rendering="auto"/><rect x="44.50" y="40.70" width="3" height="3" fill="#ffffff" shape-rendering="auto"/><rect x="48.20" y="32.90" width="3" height="3" fill="#ffffff" shape-rendering="auto"/><rect x="52.30" y="33.40" width="3" height="3" fill="#ffffff" shape-rendering="auto"/><rect x="56.60" y="44.60" width="3" height="3" fill="#ffffff" shape-rendering="auto"/><rect x="60.60" y="41.20" width="3" height="3" fill="#ffffff" shape-rendering="auto"/><rect x="64.40" y="54.20" width="3" height="3" fill="#ffffff" shape-rendering="auto"/><rect x="68.40" y="59.40" width="3" height="3" fill="#ffffff" shape-rendering="auto"/><rect x="72.30" y="71.80" width="3" height="3" fill="#ffffff" shape-rendering="auto"/><rect x="76.40" y="76.10" width="3" height="3" fill="#ffffff" shape-rendering="auto"/><rect x="80.50" y="78.90" width="3" height="3" fill="#ffffff" shape-rendering="auto"/><rect x="84.40" y="55.50" width="3" height="3" fill="#ffffff" shape-rendering="auto"/><rect x="88.50" y="51.80" width="3" height="3" fill="#ffffff" shape-rendering="auto"/><rect x="92.60" y="54.80" width="3" height="3" fill="#ffffff" shape-rendering="auto"/><rect x="96.60" y="63.50" width="3" height="3" fill="#ffffff" shape-rendering="auto"/><rect x="100.30" y="63.50" width="3" height="3" fill="#ffffff" shape-rendering="auto"/><rect x="104.40" y="62.20" width="3" height="3" fill="#ffffff" shape-rendering="auto"/><rect x="108.30" y="70.50" width="3" height="3" fill="#ffffff" shape-rendering="auto"/><rect x="112.40" y="72.20" width="3" height="3" fill="#ffffff" shape-rendering="auto"/><rect x="116.70" y="77.40" width="3" height="3" fill="#ffffff" shape-rendering="auto"/><rect x="120.40" y="79.80" width="3" height="3" fill="#ffffff" shape-rendering="auto"/><rect x="124.50" y="71.80" width="3" height="3" fill="#ffffff" shape-rendering="auto"/><rect x="128.50" y="65.90" width="3" height="3" fill="#ffffff" shape-rendering="auto"/><rect x="132.40" y="69.00" width="3" height="3" fill="#ffffff" shape-rendering="auto"/><rect x="136.50" y="65.90" width="3" height="3" fill="#ffffff" shape-rendering="auto"/><rect x="140.60" y="51.40" width="3" height="3" fill="#ffffff" shape-rendering="auto"/><rect x="144.90" y="62.60" width="3" height="3" fill="#ffffff" shape-rendering="auto"/><rect x="148.60" y="65.30" width="3" height="3" fill="#ffffff" shape-rendering="auto"/><rect x="152.70" y="55.50" width="3" height="3" fill="#ffffff" shape-rendering="auto"/><rect x="156.60" y="55.70" width="3" height="3" fill="#ffffff" shape-rendering="auto"/><rect x="160.60" y="64.00" width="3" height="3" fill="#ffffff" shape-rendering="auto"/><rect x="168.40" y="52.90" width="3" height="3" fill="#ffffff" shape-rendering="auto"/><rect x="178.30" y="38.80" width="3" height="3" fill="#ffffff" shape-rendering="auto"/><rect x="188.50" y="47.20" width="3" height="3" fill="#ffffff" shape-rendering="auto"/><rect x="198.70" y="44.90" width="3" height="3" fill="#ffffff" shape-rendering="auto"/><rect x="0" y="0" width="1.2" height="93.69999999999999" fill="#c8c000"/></svg><div style="right:229px;top:509.10px;font-size:6px;line-height:7.80px;color:#10102a;white-space:nowrap;-webkit-text-stroke:0.06px #10102a;">1.6E+6</div><div style="left:472px;top:511.5px;width:3px;height:1.0px;background:#5a5a5a;"></div><div style="right:229px;top:495.71px;font-size:6px;line-height:7.80px;color:#10102a;white-space:nowrap;-webkit-text-stroke:0.06px #10102a;">1.7E+6</div><div style="left:472px;top:498.1142857142857px;width:3px;height:1.0px;background:#5a5a5a;"></div><div style="right:229px;top:482.33px;font-size:6px;line-height:7.80px;color:#10102a;white-space:nowrap;-webkit-text-stroke:0.06px #10102a;">1.8E+6</div><div style="left:472px;top:484.72857142857146px;width:3px;height:1.0px;background:#5a5a5a;"></div><div style="right:229px;top:468.94px;font-size:6px;line-height:7.80px;color:#10102a;white-space:nowrap;-webkit-text-stroke:0.06px #10102a;">1.9E+6</div><div style="left:472px;top:471.34285714285716px;width:3px;height:1.0px;background:#5a5a5a;"></div><div style="right:229px;top:455.56px;font-size:6px;line-height:7.80px;color:#10102a;white-space:nowrap;-webkit-text-stroke:0.06px #10102a;">2E+6</div><div style="left:472px;top:457.95714285714286px;width:3px;height:1.0px;background:#5a5a5a;"></div><div style="right:229px;top:442.17px;font-size:6px;line-height:7.80px;color:#10102a;white-space:nowrap;-webkit-text-stroke:0.06px #10102a;">2.1E+6</div><div style="left:472px;top:444.57142857142856px;width:3px;height:1.0px;background:#5a5a5a;"></div><div style="right:229px;top:428.79px;font-size:6px;line-height:7.80px;color:#10102a;white-space:nowrap;-webkit-text-stroke:0.06px #10102a;">2.2E+6</div><div style="left:472px;top:431.1857142857143px;width:3px;height:1.0px;background:#5a5a5a;"></div><div style="right:229px;top:415.40px;font-size:6px;line-height:7.80px;color:#10102a;white-space:nowrap;-webkit-text-stroke:0.06px #10102a;">2.3E+6</div><div style="left:472px;top:417.8px;width:3px;height:1.0px;background:#5a5a5a;"></div><div style="left:276.5px;width:400px;text-align:center;top:517.10px;font-size:6px;line-height:7.80px;color:#10102a;white-space:nowrap;-webkit-text-stroke:0.06px #10102a;">630</div><div style="left:476.0px;top:513px;width:1.0px;height:2px;background:#5a5a5a;"></div><div style="left:316.6px;width:400px;text-align:center;top:517.10px;font-size:6px;line-height:7.80px;color:#10102a;white-space:nowrap;-webkit-text-stroke:0.06px #10102a;">632</div><div style="left:516.1px;top:513px;width:1.0px;height:2px;background:#5a5a5a;"></div><div style="left:356.70000000000005px;width:400px;text-align:center;top:517.10px;font-size:6px;line-height:7.80px;color:#10102a;white-space:nowrap;-webkit-text-stroke:0.06px #10102a;">634</div><div style="left:556.2px;top:513px;width:1.0px;height:2px;background:#5a5a5a;"></div><div style="left:396.79999999999995px;width:400px;text-align:center;top:517.10px;font-size:6px;line-height:7.80px;color:#10102a;white-space:nowrap;-webkit-text-stroke:0.06px #10102a;">636</div><div style="left:596.3px;top:513px;width:1.0px;height:2px;background:#5a5a5a;"></div><div style="left:436.9px;width:400px;text-align:center;top:517.10px;font-size:6px;line-height:7.80px;color:#10102a;white-space:nowrap;-webkit-text-stroke:0.06px #10102a;">638</div><div style="left:636.4px;top:513px;width:1.0px;height:2px;background:#5a5a5a;"></div><div style="left:477.0px;width:400px;text-align:center;top:517.10px;font-size:6px;line-height:7.80px;color:#10102a;white-space:nowrap;-webkit-text-stroke:0.06px #10102a;">640</div><div style="left:676.5px;top:513px;width:1.0px;height:2px;background:#5a5a5a;"></div><div style="left:375px;width:400px;text-align:center;top:524.77px;font-size:6.2px;line-height:8.06px;font-weight:bold;color:#0a0a20;white-space:nowrap;-webkit-text-stroke:0.06px #0a0a20;">BL 8 Energy [eV]</div><div style="left:420px;top:461px;width:50px;height:8px;font-size:6.9px;font-weight:bold;line-height:8px;text-align:center;color:#0a0a20;transform:rotate(-90deg);">Total Counts</div><div style="left:510px;top:534.5px;width:173.5px;height:29.5px;background:linear-gradient(90deg,#c0c0c0,#d0d0d0 5px,#c8c8c8 calc(100% - 10px),#a0a0a0 calc(100% - 2px),#7a7a7a);border-top:1px solid #e4e4e4;border-bottom:1px solid #7a7a7a;box-sizing:border-box;"></div><div style="left:516.5px;top:540px;width:160.0px;height:17.5px;background:#ffffff;border:1px solid #8a8a8a;box-sizing:border-box;"></div><div style="left:517.5px;top:541px;width:158.0px;height:7.5px;background:linear-gradient(#eeeeee,#cfcfcf);"></div><div style="left:571.5px;top:541px;width:1.0px;height:16px;background:#c8c8c8;"></div><div style="left:624.5px;top:541px;width:1.0px;height:16px;background:#c8c8c8;"></div><div style="left:570px;top:541px;width:1.5px;height:7.5px;background:#9a9a9a;"></div><div style="left:623px;top:541px;width:1.5px;height:7.5px;background:#9a9a9a;"></div><div style="left:674px;top:541px;width:1.5px;height:7.5px;background:#9a9a9a;"></div><div style="left:519.5px;top:540.84px;font-size:6.4px;line-height:8.32px;font-weight:bold;color:#0a0a20;white-space:nowrap;-webkit-text-stroke:0.06px #0a0a20;">Cursors:</div><div style="left:575px;top:540.84px;font-size:6.4px;line-height:8.32px;font-weight:bold;color:#0a0a20;white-space:nowrap;-webkit-text-stroke:0.06px #0a0a20;">X</div><div style="left:628px;top:540.84px;font-size:6.4px;line-height:8.32px;font-weight:bold;color:#0a0a20;white-space:nowrap;-webkit-text-stroke:0.06px #0a0a20;">Y</div><div style="left:520px;top:550.5px;width:5px;height:5.0px;background:#f4f4f4;border:1px solid #aaa;box-sizing:border-box;"></div><svg style="left:527px;top:549px" width="9" height="8"><rect width="9" height="8" fill="#000"/><path d="M0.5 4H8.5M4.5 0.5V7.5" stroke="#c8c000" stroke-width="0.9"/><circle cx="4.5" cy="4" r="2" fill="none" stroke="#c8c000" stroke-width="0.9"/></svg><div style="left:536.5px;top:549px;width:25.0px;height:8px;background:#ffff00;"></div><div style="left:538px;top:550.10px;font-size:6px;line-height:7.80px;color:#0a0a20;white-space:nowrap;-webkit-text-stroke:0.06px #0a0a20;">Cursor 0</div><div style="left:575px;top:550.10px;font-size:6px;line-height:7.80px;color:#0a0a20;white-space:nowrap;-webkit-text-stroke:0.06px #0a0a20;">630</div><div style="left:628px;top:550.10px;font-size:6px;line-height:7.80px;color:#0a0a20;white-space:nowrap;-webkit-text-stroke:0.06px #0a0a20;">2.29433E+6</div><div style="left:636px;top:588.75px;font-size:7px;line-height:9.10px;color:#e8eef4;white-space:nowrap;-webkit-text-stroke:0.06px #e8eef4;">EN</div><div style="left:665px;top:590px;width:6px;height:3px;background:#c4d0dc;border-radius:2px 2px 0 0;"></div><div style="left:679px;top:590px;width:8px;height:3px;background:#c4d0dc;border-radius:2px 2px 0 0;"></div></body></html>
